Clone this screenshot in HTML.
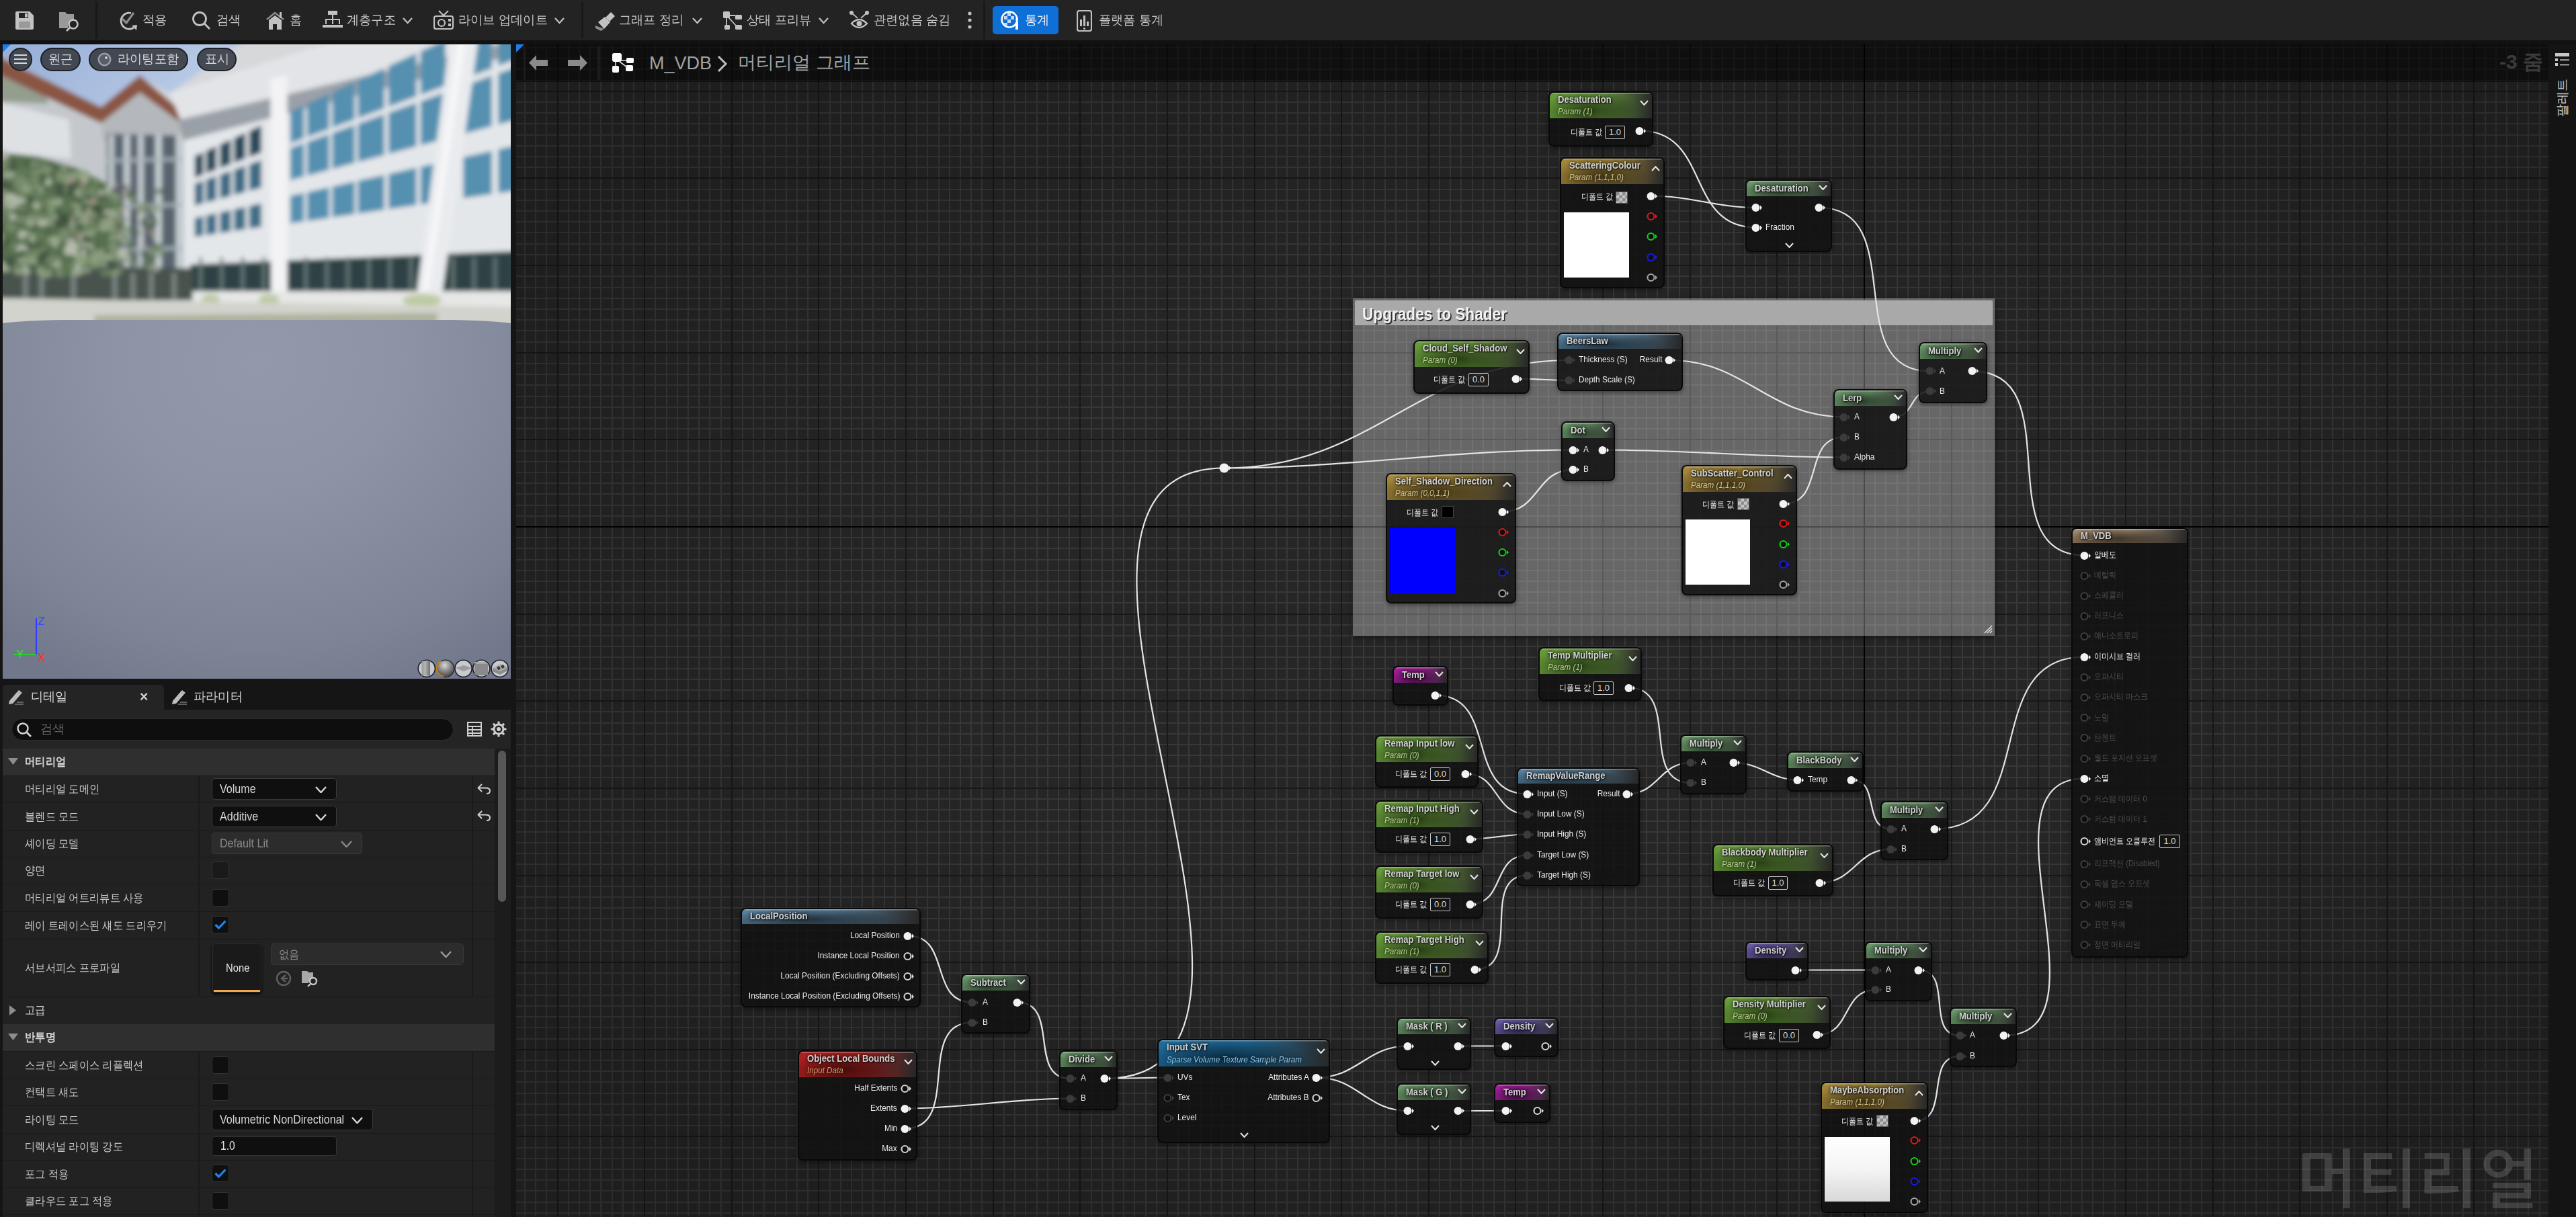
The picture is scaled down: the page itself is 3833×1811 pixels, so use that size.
<!DOCTYPE html>
<html><head><meta charset="utf-8"><style>*{margin:0;padding:0;box-sizing:border-box}
html,body{width:3833px;height:1811px;overflow:hidden;background:#151515;font-family:"Liberation Sans",sans-serif}
.abs{position:absolute}
.t{white-space:nowrap}
.nd{border:2px solid rgba(8,8,8,0.95);border-radius:8px;background:rgba(16,18,16,0.86);overflow:hidden;box-shadow:0 2px 6px rgba(0,0,0,0.45)}
.hd{width:100%;box-shadow:inset 0 1.5px 0 rgba(255,255,255,0.35)}
.vb{border:1px solid #c8c8c8;border-radius:2px;color:#dcdcdc;font-size:13px;line-height:18px;text-align:center;font-family:"Liberation Sans",sans-serif}
.chk{width:18px;height:18px;background-color:#8c8c8c;background-image:linear-gradient(45deg,#c8c8c8 25%,transparent 25%,transparent 75%,#c8c8c8 75%),linear-gradient(45deg,#c8c8c8 25%,transparent 25%,transparent 75%,#c8c8c8 75%);background-size:9px 9px;background-position:0 0,4.5px 4.5px;border:1px solid #555}
</style></head>
<body>
<div class="abs " style="left:0px;top:0px;width:3833px;height:60px;background:#232323"></div><div class="abs " style="left:0px;top:60px;width:3833px;height:6px;background:#111111"></div><svg class="abs" style="left:23px;top:17px" width="28" height="27" viewBox="0 0 28 27"><path d="M0 2Q0 0 2 0H21L27 6V25Q27 27 25 27H2Q0 27 0 25Z" fill="#c2c2c2"/><rect x="5" y="2" width="14" height="8" fill="#232323"/><rect x="14" y="3" width="4" height="6" fill="#c2c2c2"/><rect x="5" y="15" width="17" height="10" fill="#9a9a9a"/></svg><svg class="abs" style="left:88px;top:15px" width="32" height="32" viewBox="0 0 32 32"><path d="M0 3H9L12 6H22V16Q15 15 13 22V27H0Z" fill="#9a9a9a"/><circle cx="21" cy="21" r="6.5" fill="none" stroke="#c2c2c2" stroke-width="2.6"/><path d="M16.5 25.5L11 31" stroke="#c2c2c2" stroke-width="2.8"/></svg><div class="abs " style="left:142px;top:2px;width:3px;height:56px;background:#181818"></div><svg class="abs" style="left:175px;top:16px" width="30" height="30" viewBox="0 0 30 30"><path d="M20 3.5A12 12 0 1 0 24 25" fill="none" stroke="#c2c2c2" stroke-width="2.8"/><path d="M21 22L29 21L28 29Z" fill="#c2c2c2"/><path d="M7 12L13 18L24 3" fill="none" stroke="#8c8c8c" stroke-width="3.2"/></svg><div class="abs t " style="left:212px;top:18.6px;font-size:19px;line-height:22.8px;color:#c4c4c4;transform:scaleX(0.96);transform-origin:left center;">적용</div><svg class="abs" style="left:285px;top:16px" width="30" height="30" viewBox="0 0 30 30"><circle cx="12" cy="12" r="9.5" fill="none" stroke="#c2c2c2" stroke-width="2.8"/><path d="M19 19L27 27" stroke="#c2c2c2" stroke-width="3"/></svg><div class="abs t " style="left:322px;top:18.6px;font-size:19px;line-height:22.8px;color:#c4c4c4;transform:scaleX(0.96);transform-origin:left center;">검색</div><svg class="abs" style="left:396px;top:18px" width="28" height="27" viewBox="0 0 28 27"><path d="M1 11L13 1L26 11" fill="none" stroke="#8c8c8c" stroke-width="2.5"/><path d="M4 12L13 5L23 12V26H16V18H10V26H4Z" fill="#c2c2c2"/><rect x="20" y="0" width="3" height="9" fill="#c2c2c2"/></svg><div class="abs t " style="left:431px;top:18.6px;font-size:19px;line-height:22.8px;color:#c4c4c4;transform:scaleX(0.96);transform-origin:left center;">홈</div><svg class="abs" style="left:480px;top:16px" width="30" height="28" viewBox="0 0 30 28"><rect x="8" y="0" width="14" height="6" fill="#c2c2c2"/><rect x="14" y="6" width="2" height="8" fill="#c2c2c2"/><rect x="4" y="12" width="22" height="2" fill="#c2c2c2"/><rect x="4" y="12" width="2" height="8" fill="#c2c2c2"/><rect x="24" y="12" width="2" height="8" fill="#c2c2c2"/><rect x="14" y="12" width="2" height="8" fill="#c2c2c2"/><rect x="0" y="21" width="30" height="4" fill="#c2c2c2"/></svg><div class="abs t " style="left:516px;top:18.6px;font-size:19px;line-height:22.8px;color:#c4c4c4;transform:scaleX(0.96);transform-origin:left center;">계층구조</div><svg class="abs" style="left:599px;top:26.4px" width="15" height="9.2"><path d="M1 1L7.5 8.2L14 1" fill="none" stroke="#c4c4c4" stroke-width="2.2"/></svg><svg class="abs" style="left:645px;top:15px" width="31" height="30" viewBox="0 0 31 30"><rect x="1" y="9" width="28" height="19" rx="3" fill="none" stroke="#c2c2c2" stroke-width="2.2"/><path d="M8 1L15 8L22 1" fill="none" stroke="#c2c2c2" stroke-width="2"/><circle cx="12" cy="19" r="5" fill="none" stroke="#c2c2c2" stroke-width="2.2"/><rect x="22" y="13" width="4" height="4" fill="#c2c2c2"/><rect x="22" y="20" width="4" height="4" fill="#c2c2c2"/></svg><div class="abs t " style="left:682px;top:18.6px;font-size:19px;line-height:22.8px;color:#c4c4c4;transform:scaleX(0.96);transform-origin:left center;">라이브 업데이트</div><svg class="abs" style="left:825px;top:26.4px" width="15" height="9.2"><path d="M1 1L7.5 8.2L14 1" fill="none" stroke="#c4c4c4" stroke-width="2.2"/></svg><div class="abs " style="left:865px;top:2px;width:3px;height:56px;background:#181818"></div><svg class="abs" style="left:886px;top:16px" width="31" height="30" viewBox="0 0 31 30"><path d="M15 10L23 2L29 8L21 16Z" fill="#c2c2c2"/><path d="M4 17L14 9L22 17L13 27Z" fill="#c2c2c2"/><path d="M0 22L13 27L8 30L0 26Z" fill="#8c8c8c"/></svg><div class="abs t " style="left:921px;top:18.6px;font-size:19px;line-height:22.8px;color:#c4c4c4;transform:scaleX(0.96);transform-origin:left center;">그래프 정리</div><svg class="abs" style="left:1030px;top:26.4px" width="15" height="9.2"><path d="M1 1L7.5 8.2L14 1" fill="none" stroke="#c4c4c4" stroke-width="2.2"/></svg><svg class="abs" style="left:1076px;top:17px" width="28" height="27" viewBox="0 0 28 27"><rect x="0" y="0" width="10" height="10" rx="1.5" fill="#c2c2c2"/><rect x="18" y="5" width="10" height="7" rx="1.5" fill="#c2c2c2"/><rect x="2" y="20" width="8" height="7" rx="1.5" fill="#c2c2c2"/><rect x="18" y="20" width="10" height="7" rx="1.5" fill="#c2c2c2"/><path d="M5 10V20M10 6H18M8 9L19 21" stroke="#c2c2c2" stroke-width="1.8"/></svg><div class="abs t " style="left:1111px;top:18.6px;font-size:19px;line-height:22.8px;color:#c4c4c4;transform:scaleX(0.96);transform-origin:left center;">상태 프리뷰</div><svg class="abs" style="left:1218px;top:26.4px" width="15" height="9.2"><path d="M1 1L7.5 8.2L14 1" fill="none" stroke="#c4c4c4" stroke-width="2.2"/></svg><svg class="abs" style="left:1264px;top:15px" width="29" height="30" viewBox="0 0 29 30"><circle cx="3" cy="4" r="3" fill="#c2c2c2"/><circle cx="26" cy="4" r="3" fill="#c2c2c2"/><path d="M3 4L12 12M26 4L17 12" stroke="#c2c2c2" stroke-width="1.8"/><path d="M3 20Q14 8 26 20Q14 32 3 20Z" fill="none" stroke="#c2c2c2" stroke-width="2.4"/><circle cx="14.5" cy="20" r="4" fill="#c2c2c2"/></svg><div class="abs t " style="left:1300px;top:18.6px;font-size:19px;line-height:22.8px;color:#c4c4c4;transform:scaleX(0.96);transform-origin:left center;">관련없음 숨김</div><svg class="abs" style="left:1439px;top:16px" width="8" height="28" viewBox="0 0 8 28"><circle cx="4" cy="4" r="2.6" fill="#c2c2c2"/><circle cx="4" cy="14" r="2.6" fill="#c2c2c2"/><circle cx="4" cy="24" r="2.6" fill="#c2c2c2"/></svg><div class="abs " style="left:1463px;top:2px;width:3px;height:56px;background:#181818"></div><div class="abs " style="left:1477px;top:9px;width:98px;height:42px;background:#0e6fd6;border-radius:5px"></div><svg class="abs" style="left:1489px;top:16px" width="31" height="30" viewBox="0 0 31 30"><circle cx="13" cy="13" r="11.5" fill="none" stroke="#ffffff" stroke-width="2.5"/><path d="M5 8h5v5h-5zM10 13h5v5h-5zM15 8h5v5h-5zM10 3h5v5h-5zM5 18h5v4h-5z" fill="#dfe9f6" opacity="0.85"/><circle cx="24" cy="13" r="2" fill="#fff"/><rect x="22" y="17" width="4" height="11" fill="#fff"/></svg><div class="abs t " style="left:1525px;top:18.6px;font-size:19px;line-height:22.8px;color:#f0f0f0;transform:scaleX(0.96);transform-origin:left center;">통계</div><svg class="abs" style="left:1602px;top:15px" width="23" height="32" viewBox="0 0 23 32"><rect x="1" y="1" width="21" height="30" rx="3" fill="none" stroke="#c2c2c2" stroke-width="2.2"/><rect x="5" y="14" width="3" height="10" fill="#c2c2c2"/><rect x="10" y="8" width="3" height="16" fill="#c2c2c2"/><rect x="15" y="17" width="3" height="7" fill="#c2c2c2"/><circle cx="11.5" cy="27.5" r="1.6" fill="#c2c2c2"/></svg><div class="abs t " style="left:1635px;top:18.6px;font-size:19px;line-height:22.8px;color:#c4c4c4;transform:scaleX(0.96);transform-origin:left center;">플랫폼 통계</div>
<div class="abs " style="left:0px;top:66px;width:768px;height:944px;background:#151515"></div><div class="abs" style="left:4px;top:66px;width:756px;height:944px;overflow:hidden;background:#888e9c"><svg class="abs" style="left:0;top:0" width="756" height="412" viewBox="0 0 756 412"><defs><filter id="bl" x="-5%" y="-5%" width="110%" height="110%"><feGaussianBlur stdDeviation="3.6"/></filter><linearGradient id="sky" x1="0" y1="0" x2="1" y2="0.3"><stop offset="0" stop-color="#93acd8"/><stop offset="1" stop-color="#bccde6"/></linearGradient></defs><g filter="url(#bl)"><rect x="-10" y="-10" width="776" height="432" fill="#d6d8da"/><polygon points="-10.2,-10.2 367.3,-10.2 248.3,73.1 204.1,47.6 146.3,93.5 -10.2,13.6" fill="url(#sky)" /><polygon points="-10.2,40.8 146.3,112.2 204.1,68.0 265.3,112.2 272.1,381.0 -10.2,381.0" fill="#c4c8cc" /><polygon points="-10.2,85.0 98.6,112.2 102.0,170.1 -10.2,159.9" fill="#dee1e4" /><polygon points="-10.2,42.5 61.2,66.3 68.0,88.4 -10.2,85.0" fill="#8c9682" opacity="0.85"/><polygon points="146.3,112.2 204.1,71.4 265.3,112.2 265.3,142.9 149.7,142.9" fill="#b4b8bc" /><polygon points="-10.2,15.3 146.3,93.5 204.1,45.9 265.3,98.6 265.3,117.3 204.1,71.4 146.3,117.3 -10.2,42.5" fill="#8a5443" /><polygon points="154.8,132.7 278.9,136.1 278.9,377.6 154.8,377.6" fill="#58636e" /><polygon points="158.2,134.4 165.6,134.4 165.6,377.6 158.2,377.6" fill="#c6ced2" /><polygon points="180.3,134.4 189.1,134.4 189.1,377.6 180.3,377.6" fill="#c6ced2" /><polygon points="201.4,134.4 209.5,134.4 209.5,377.6 201.4,377.6" fill="#c6ced2" /><polygon points="227.2,134.4 236.7,134.4 236.7,377.6 227.2,377.6" fill="#c6ced2" /><polygon points="257.8,134.4 268.0,134.4 268.0,377.6 257.8,377.6" fill="#c6ced2" /><polygon points="154.8,170.1 278.9,167.3 278.9,173.5 154.8,176.2" fill="#aab6bc" opacity="0.8"/><polygon points="154.8,238.1 278.9,235.4 278.9,241.5 154.8,244.2" fill="#aab6bc" opacity="0.8"/><polygon points="154.8,302.7 278.9,300.0 278.9,306.1 154.8,308.8" fill="#aab6bc" opacity="0.8"/><polygon points="248.3,72.1 510.2,-10.2 782.3,-10.2 782.3,-6.8 265.3,113.9" fill="#e2e4e7" /><polygon points="261.9,112.2 782.3,-10.2 782.3,13.6 268.7,144.6" fill="#9aa0a8" /><polygon points="268.7,142.9 782.3,10.2 782.3,370.7 268.7,370.7" fill="#e4e7ea" /><polygon points="427.9,100.1 448.3,90.7 448.3,139.8 427.9,147.4" fill="#5490b0" /><polygon points="427.9,154.4 448.3,147.0 448.3,196.8 427.9,202.3" fill="#5490b0" /><polygon points="427.9,225.6 448.3,221.0 448.3,263.6 427.9,266.6" fill="#5490b0" /><polygon points="453.1,88.5 485.7,73.4 485.7,125.9 453.1,138.1" fill="#5490b0" /><polygon points="453.1,145.3 485.7,133.6 485.7,186.8 453.1,195.5" fill="#5490b0" /><polygon points="453.1,220.0 485.7,212.7 485.7,258.2 453.1,262.9" fill="#5490b0" /><polygon points="490.5,71.2 523.8,55.8 523.8,111.7 490.5,124.1" fill="#5490b0" /><polygon points="490.5,131.9 523.8,119.9 523.8,176.6 490.5,185.5" fill="#5490b0" /><polygon points="490.5,211.6 523.8,204.1 523.8,252.6 490.5,257.5" fill="#5490b0" /><polygon points="528.6,53.6 568.0,35.4 568.0,95.2 528.6,109.9" fill="#5490b0" /><polygon points="528.6,118.2 568.0,104.0 568.0,164.7 528.6,175.3" fill="#5490b0" /><polygon points="528.6,203.1 568.0,194.2 568.0,246.1 528.6,251.9" fill="#5490b0" /><polygon points="574.1,32.5 615.6,13.3 615.6,77.5 574.1,93.0" fill="#5490b0" /><polygon points="574.1,101.8 615.6,86.9 615.6,151.9 574.1,163.1" fill="#5490b0" /><polygon points="574.1,192.9 615.6,183.6 615.6,239.2 574.1,245.2" fill="#5490b0" /><polygon points="621.8,10.5 658.5,-6.5 658.5,61.5 621.8,75.2" fill="#5490b0" /><polygon points="621.8,84.7 658.5,71.5 658.5,140.4 621.8,150.3" fill="#5490b0" /><polygon points="621.8,182.2 658.5,174.0 658.5,232.9 621.8,238.3" fill="#5490b0" /><polygon points="685.4,-18.9 727.9,-38.5 727.9,35.7 685.4,51.5" fill="#5490b0" /><polygon points="685.4,61.9 727.9,46.6 727.9,121.8 685.4,133.2" fill="#5490b0" /><polygon points="685.4,168.0 727.9,158.4 727.9,222.8 685.4,229.0" fill="#5490b0" /><polygon points="737.4,-43.0 782.3,-63.7 782.3,15.4 737.4,32.1" fill="#5490b0" /><polygon points="737.4,43.2 782.3,27.0 782.3,107.2 737.4,119.3" fill="#5490b0" /><polygon points="737.4,156.3 782.3,146.2 782.3,214.8 737.4,221.4" fill="#5490b0" /><polygon points="285.7,166.3 298.6,160.4 298.6,193.7 285.7,198.5" fill="#2b4a5c" /><polygon points="285.7,207.3 298.6,202.7 298.6,236.5 285.7,240.0" fill="#3d6a84" /><polygon points="285.7,258.4 298.6,255.5 298.6,284.5 285.7,286.5" fill="#3f6e88" /><polygon points="302.7,158.5 318.0,151.4 318.0,186.4 302.7,192.1" fill="#2b4a5c" /><polygon points="302.7,201.3 318.0,195.8 318.0,231.3 302.7,235.4" fill="#3d6a84" /><polygon points="302.7,254.6 318.0,251.2 318.0,281.7 302.7,283.9" fill="#3f6e88" /><polygon points="323.1,149.1 339.5,141.5 339.5,178.3 323.1,184.4" fill="#2b4a5c" /><polygon points="323.1,194.0 339.5,188.2 339.5,225.5 323.1,229.9" fill="#3d6a84" /><polygon points="323.1,250.1 339.5,246.5 339.5,278.5 323.1,280.9" fill="#3f6e88" /><polygon points="344.2,139.3 361.2,131.5 361.2,170.1 344.2,176.5" fill="#2b4a5c" /><polygon points="344.2,186.5 361.2,180.5 361.2,219.6 344.2,224.2" fill="#3d6a84" /><polygon points="344.2,245.4 361.2,241.7 361.2,275.2 344.2,277.8" fill="#3f6e88" /><polygon points="366.7,129.0 385.0,120.5 385.0,161.1 366.7,168.0" fill="#2b4a5c" /><polygon points="366.7,178.6 385.0,172.1 385.0,213.2 366.7,218.2" fill="#3d6a84" /><polygon points="366.7,240.4 385.0,236.4 385.0,271.7 366.7,274.4" fill="#3f6e88" /><polygon points="278.9,327.7 782.3,306.6 782.3,369.0 278.9,369.0" fill="#2e4244" /><polygon points="292.5,316.3 296.6,316.3 296.6,369.0 292.5,369.0" fill="#6f8080" /><polygon points="323.8,316.3 327.9,316.3 327.9,369.0 323.8,369.0" fill="#6f8080" /><polygon points="355.1,316.3 359.2,316.3 359.2,369.0 355.1,369.0" fill="#6f8080" /><polygon points="386.4,316.3 390.5,316.3 390.5,369.0 386.4,369.0" fill="#6f8080" /><polygon points="417.7,316.3 421.8,316.3 421.8,369.0 417.7,369.0" fill="#6f8080" /><polygon points="449.0,316.3 453.1,316.3 453.1,369.0 449.0,369.0" fill="#6f8080" /><polygon points="480.3,316.3 484.4,316.3 484.4,369.0 480.3,369.0" fill="#6f8080" /><polygon points="511.6,316.3 515.6,316.3 515.6,369.0 511.6,369.0" fill="#6f8080" /><polygon points="542.9,316.3 546.9,316.3 546.9,369.0 542.9,369.0" fill="#6f8080" /><polygon points="574.1,316.3 578.2,316.3 578.2,369.0 574.1,369.0" fill="#6f8080" /><polygon points="605.4,316.3 609.5,316.3 609.5,369.0 605.4,369.0" fill="#6f8080" /><polygon points="636.7,316.3 640.8,316.3 640.8,369.0 636.7,369.0" fill="#6f8080" /><polygon points="668.0,316.3 672.1,316.3 672.1,369.0 668.0,369.0" fill="#6f8080" /><polygon points="699.3,316.3 703.4,316.3 703.4,369.0 699.3,369.0" fill="#6f8080" /><polygon points="730.6,316.3 734.7,316.3 734.7,369.0 730.6,369.0" fill="#6f8080" /><polygon points="761.9,316.3 766.0,316.3 766.0,369.0 761.9,369.0" fill="#6f8080" /><polygon points="398.6,51.0 423.1,46.9 423.8,391.2 399.3,391.2" fill="#f3f3f5" /><polygon points="666.0,-10.2 708.2,-10.2 653.1,377.6 615.0,377.6" fill="#e9ebee" /><polygon points="676.9,-10.2 690.5,-10.2 632.7,377.6 622.4,377.6" fill="#f6f6f8" /><polygon points="272.1,367.3 782.3,367.3 782.3,394.6 272.1,394.6" fill="#e6e7e6" /><ellipse cx="309.5" cy="381.0" rx="13.6" ry="9.5" fill="#b9c89c" opacity="0.9"/><ellipse cx="396.3" cy="381.0" rx="15.3" ry="9.5" fill="#b9c89c" opacity="0.9"/><ellipse cx="624.1" cy="381.0" rx="28.9" ry="9.5" fill="#b9c89c" opacity="0.9"/><polygon points="-10.2,326.5 282.3,333.3 282.3,381.0 -10.2,381.0" fill="#48524e" /><polygon points="30.6,340.1 37.4,340.1 37.4,381.0 30.6,381.0" fill="#a2aca8" opacity="0.6"/><polygon points="54.4,340.1 61.2,340.1 61.2,381.0 54.4,381.0" fill="#a2aca8" opacity="0.6"/><polygon points="102.0,340.1 108.8,340.1 108.8,381.0 102.0,381.0" fill="#a2aca8" opacity="0.6"/><polygon points="163.3,340.1 170.1,340.1 170.1,381.0 163.3,381.0" fill="#a2aca8" opacity="0.6"/><polygon points="190.5,340.1 197.3,340.1 197.3,381.0 190.5,381.0" fill="#a2aca8" opacity="0.6"/><polygon points="217.7,340.1 224.5,340.1 224.5,381.0 217.7,381.0" fill="#a2aca8" opacity="0.6"/><polygon points="251.7,340.1 258.5,340.1 258.5,381.0 251.7,381.0" fill="#a2aca8" opacity="0.6"/><polygon points="-10.2,159.9 51.0,166.7 108.8,183.7 149.7,204.1 170.1,231.3 176.9,272.1 170.1,326.5 -10.2,340.1" fill="#56704e" /><ellipse cx="76.3" cy="260.8" rx="7.8" ry="8.2" fill="#b8beb2" opacity="0.85"/><ellipse cx="28.1" cy="304.8" rx="9.0" ry="7.9" fill="#b8beb2" opacity="0.85"/><ellipse cx="10.5" cy="214.6" rx="8.4" ry="8.3" fill="#5c7454" opacity="0.85"/><ellipse cx="109.7" cy="267.2" rx="11.3" ry="7.2" fill="#a0ae94" opacity="0.85"/><ellipse cx="106.3" cy="188.3" rx="10.4" ry="4.4" fill="#4a5e44" opacity="0.85"/><ellipse cx="-0.3" cy="318.4" rx="10.1" ry="5.6" fill="#4a5e44" opacity="0.85"/><ellipse cx="101.7" cy="195.1" rx="9.1" ry="6.5" fill="#8fa282" opacity="0.85"/><ellipse cx="114.9" cy="242.3" rx="7.5" ry="6.7" fill="#3e5040" opacity="0.85"/><ellipse cx="39.8" cy="296.5" rx="5.0" ry="6.8" fill="#3e5040" opacity="0.85"/><ellipse cx="13.0" cy="179.3" rx="7.4" ry="8.6" fill="#3e5040" opacity="0.85"/><ellipse cx="31.7" cy="324.0" rx="7.3" ry="7.5" fill="#b8beb2" opacity="0.85"/><ellipse cx="70.3" cy="261.9" rx="10.1" ry="5.4" fill="#8fa282" opacity="0.85"/><ellipse cx="9.2" cy="219.8" rx="9.9" ry="4.6" fill="#a0ae94" opacity="0.85"/><ellipse cx="38.5" cy="178.1" rx="7.9" ry="6.4" fill="#4a5e44" opacity="0.85"/><ellipse cx="118.5" cy="193.8" rx="11.5" ry="7.7" fill="#8fa282" opacity="0.85"/><ellipse cx="70.2" cy="229.0" rx="7.6" ry="5.1" fill="#a0ae94" opacity="0.85"/><ellipse cx="42.8" cy="334.9" rx="11.6" ry="4.2" fill="#3e5040" opacity="0.85"/><ellipse cx="27.6" cy="339.4" rx="5.0" ry="4.8" fill="#5c7454" opacity="0.85"/><ellipse cx="105.3" cy="309.5" rx="5.3" ry="4.5" fill="#a0ae94" opacity="0.85"/><ellipse cx="100.2" cy="203.7" rx="7.3" ry="6.2" fill="#6a7e60" opacity="0.85"/><ellipse cx="169.4" cy="247.1" rx="10.7" ry="5.0" fill="#7a8e6e" opacity="0.85"/><ellipse cx="21.5" cy="323.6" rx="9.7" ry="4.8" fill="#8fa282" opacity="0.85"/><ellipse cx="108.7" cy="259.7" rx="10.8" ry="7.0" fill="#a0ae94" opacity="0.85"/><ellipse cx="70.6" cy="178.6" rx="8.2" ry="5.3" fill="#4a5e44" opacity="0.85"/><ellipse cx="129.1" cy="230.5" rx="10.4" ry="6.9" fill="#a0ae94" opacity="0.85"/><ellipse cx="47.1" cy="191.5" rx="5.6" ry="6.4" fill="#5c7454" opacity="0.85"/><ellipse cx="113.2" cy="270.9" rx="6.7" ry="8.5" fill="#5c7454" opacity="0.85"/><ellipse cx="42.6" cy="240.2" rx="5.1" ry="5.4" fill="#4a5e44" opacity="0.85"/><ellipse cx="90.7" cy="335.3" rx="7.2" ry="8.3" fill="#5c7454" opacity="0.85"/><ellipse cx="173.3" cy="278.3" rx="8.8" ry="8.5" fill="#7a8e6e" opacity="0.85"/><ellipse cx="80.4" cy="224.3" rx="11.3" ry="4.2" fill="#3e5040" opacity="0.85"/><ellipse cx="110.0" cy="246.8" rx="6.9" ry="8.8" fill="#3e5040" opacity="0.85"/><ellipse cx="7.0" cy="258.3" rx="10.9" ry="7.6" fill="#4a5e44" opacity="0.85"/><ellipse cx="122.4" cy="302.9" rx="7.2" ry="7.3" fill="#6a7e60" opacity="0.85"/><ellipse cx="158.7" cy="316.9" rx="11.2" ry="4.2" fill="#a0ae94" opacity="0.85"/><ellipse cx="114.8" cy="228.2" rx="8.9" ry="4.5" fill="#4a5e44" opacity="0.85"/><ellipse cx="110.6" cy="338.9" rx="9.7" ry="5.9" fill="#a0ae94" opacity="0.85"/><ellipse cx="128.2" cy="264.6" rx="7.9" ry="6.7" fill="#b8beb2" opacity="0.85"/><ellipse cx="88.5" cy="252.6" rx="8.9" ry="6.4" fill="#3e5040" opacity="0.85"/><ellipse cx="35.5" cy="285.8" rx="10.1" ry="7.2" fill="#b8beb2" opacity="0.85"/><ellipse cx="82.5" cy="321.5" rx="6.8" ry="7.3" fill="#6a7e60" opacity="0.85"/><ellipse cx="30.4" cy="190.4" rx="9.3" ry="6.2" fill="#6a7e60" opacity="0.85"/><ellipse cx="157.0" cy="218.8" rx="6.1" ry="6.1" fill="#3e5040" opacity="0.85"/><ellipse cx="141.2" cy="324.7" rx="7.4" ry="6.9" fill="#8fa282" opacity="0.85"/><ellipse cx="51.3" cy="184.4" rx="7.1" ry="8.3" fill="#b8beb2" opacity="0.85"/><ellipse cx="0.6" cy="171.4" rx="10.4" ry="4.6" fill="#3e5040" opacity="0.85"/><ellipse cx="79.8" cy="326.7" rx="7.4" ry="6.6" fill="#a0ae94" opacity="0.85"/><ellipse cx="116.7" cy="289.0" rx="6.9" ry="8.0" fill="#b8beb2" opacity="0.85"/><ellipse cx="44.3" cy="269.4" rx="8.6" ry="5.6" fill="#3e5040" opacity="0.85"/><ellipse cx="18.2" cy="241.9" rx="10.0" ry="5.4" fill="#4a5e44" opacity="0.85"/><ellipse cx="136.3" cy="303.5" rx="7.8" ry="7.1" fill="#5c7454" opacity="0.85"/><ellipse cx="113.5" cy="305.4" rx="9.4" ry="5.0" fill="#5c7454" opacity="0.85"/><ellipse cx="80.5" cy="192.1" rx="9.9" ry="6.6" fill="#4a5e44" opacity="0.85"/><ellipse cx="-0.2" cy="200.7" rx="8.4" ry="8.6" fill="#6a7e60" opacity="0.85"/><ellipse cx="85.1" cy="339.6" rx="7.4" ry="7.9" fill="#7a8e6e" opacity="0.85"/><ellipse cx="164.5" cy="290.1" rx="7.8" ry="5.0" fill="#7a8e6e" opacity="0.85"/><ellipse cx="94.2" cy="277.5" rx="7.9" ry="7.2" fill="#6a7e60" opacity="0.85"/><ellipse cx="30.8" cy="290.0" rx="6.2" ry="8.4" fill="#5c7454" opacity="0.85"/><ellipse cx="173.3" cy="336.1" rx="6.5" ry="7.5" fill="#6a7e60" opacity="0.85"/><ellipse cx="-3.9" cy="250.9" rx="7.8" ry="6.7" fill="#4a5e44" opacity="0.85"/><ellipse cx="134.3" cy="247.7" rx="6.2" ry="8.2" fill="#4a5e44" opacity="0.85"/><ellipse cx="91.1" cy="283.6" rx="8.0" ry="8.8" fill="#7a8e6e" opacity="0.85"/><ellipse cx="158.6" cy="253.3" rx="11.2" ry="6.4" fill="#b8beb2" opacity="0.85"/><ellipse cx="33.9" cy="254.8" rx="10.4" ry="6.8" fill="#3e5040" opacity="0.85"/><ellipse cx="23.4" cy="252.6" rx="6.9" ry="5.9" fill="#3e5040" opacity="0.85"/><ellipse cx="148.4" cy="322.2" rx="6.8" ry="4.8" fill="#8fa282" opacity="0.85"/><ellipse cx="93.2" cy="209.1" rx="6.1" ry="6.6" fill="#b8beb2" opacity="0.85"/><ellipse cx="85.6" cy="269.0" rx="8.4" ry="4.3" fill="#4a5e44" opacity="0.85"/><ellipse cx="161.7" cy="257.9" rx="8.1" ry="7.4" fill="#5c7454" opacity="0.85"/><ellipse cx="5.3" cy="257.0" rx="11.0" ry="7.9" fill="#a0ae94" opacity="0.85"/><ellipse cx="67.4" cy="204.3" rx="5.6" ry="6.1" fill="#b8beb2" opacity="0.85"/><ellipse cx="143.0" cy="322.2" rx="8.3" ry="4.6" fill="#b8beb2" opacity="0.85"/><ellipse cx="41.0" cy="286.4" rx="5.0" ry="4.8" fill="#4a5e44" opacity="0.85"/><ellipse cx="-4.6" cy="211.1" rx="6.4" ry="6.5" fill="#6a7e60" opacity="0.85"/><ellipse cx="85.0" cy="264.8" rx="9.6" ry="7.4" fill="#3e5040" opacity="0.85"/><ellipse cx="109.5" cy="308.6" rx="8.4" ry="8.2" fill="#7a8e6e" opacity="0.85"/><ellipse cx="91.3" cy="199.2" rx="10.6" ry="7.0" fill="#8fa282" opacity="0.85"/><ellipse cx="129.3" cy="306.0" rx="6.9" ry="5.6" fill="#7a8e6e" opacity="0.85"/><ellipse cx="176.6" cy="319.9" rx="10.8" ry="4.7" fill="#7a8e6e" opacity="0.85"/><ellipse cx="9.4" cy="229.8" rx="10.4" ry="6.1" fill="#a0ae94" opacity="0.85"/><ellipse cx="67.2" cy="283.4" rx="5.4" ry="6.8" fill="#4a5e44" opacity="0.85"/><ellipse cx="58.9" cy="307.9" rx="5.5" ry="6.5" fill="#6a7e60" opacity="0.85"/><ellipse cx="132.5" cy="250.5" rx="10.2" ry="6.4" fill="#8fa282" opacity="0.85"/><ellipse cx="-2.3" cy="297.2" rx="5.8" ry="5.0" fill="#b8beb2" opacity="0.85"/><ellipse cx="30.7" cy="311.3" rx="11.1" ry="4.5" fill="#3e5040" opacity="0.85"/><ellipse cx="4.6" cy="331.4" rx="5.3" ry="4.5" fill="#b8beb2" opacity="0.85"/><ellipse cx="65.0" cy="236.7" rx="7.7" ry="6.9" fill="#6a7e60" opacity="0.85"/><ellipse cx="-4.4" cy="286.2" rx="6.0" ry="6.2" fill="#8fa282" opacity="0.85"/><ellipse cx="129.0" cy="232.9" rx="8.9" ry="4.5" fill="#8fa282" opacity="0.85"/><ellipse cx="138.7" cy="218.2" rx="10.2" ry="7.4" fill="#5c7454" opacity="0.85"/><ellipse cx="151.3" cy="273.3" rx="8.6" ry="5.0" fill="#a0ae94" opacity="0.85"/><ellipse cx="100.6" cy="221.3" rx="6.7" ry="4.6" fill="#3e5040" opacity="0.85"/><ellipse cx="53.8" cy="257.0" rx="10.0" ry="7.7" fill="#6a7e60" opacity="0.85"/><ellipse cx="67.7" cy="290.1" rx="10.2" ry="5.5" fill="#5c7454" opacity="0.85"/><ellipse cx="11.7" cy="320.0" rx="6.3" ry="8.6" fill="#4a5e44" opacity="0.85"/><ellipse cx="115.5" cy="220.8" rx="8.6" ry="6.6" fill="#a0ae94" opacity="0.85"/><ellipse cx="64.8" cy="340.1" rx="9.5" ry="7.7" fill="#8fa282" opacity="0.85"/><ellipse cx="106.2" cy="293.0" rx="7.8" ry="6.5" fill="#3e5040" opacity="0.85"/><ellipse cx="133.0" cy="276.7" rx="5.4" ry="5.3" fill="#4a5e44" opacity="0.85"/><ellipse cx="159.5" cy="259.0" rx="11.3" ry="6.8" fill="#a0ae94" opacity="0.85"/><ellipse cx="176.0" cy="274.9" rx="8.5" ry="7.3" fill="#5c7454" opacity="0.85"/><ellipse cx="168.7" cy="229.5" rx="7.4" ry="8.7" fill="#7a8e6e" opacity="0.85"/><ellipse cx="150.4" cy="257.6" rx="7.7" ry="6.4" fill="#4a5e44" opacity="0.85"/><ellipse cx="45.4" cy="231.7" rx="7.2" ry="5.4" fill="#3e5040" opacity="0.85"/><ellipse cx="113.5" cy="260.9" rx="9.3" ry="7.6" fill="#3e5040" opacity="0.85"/><ellipse cx="-1.9" cy="299.1" rx="9.1" ry="6.0" fill="#4a5e44" opacity="0.85"/><ellipse cx="51.1" cy="231.6" rx="5.3" ry="8.4" fill="#6a7e60" opacity="0.85"/><ellipse cx="72.1" cy="246.0" rx="5.1" ry="4.6" fill="#8fa282" opacity="0.85"/><ellipse cx="142.0" cy="323.8" rx="11.4" ry="8.0" fill="#7a8e6e" opacity="0.85"/><ellipse cx="107.9" cy="242.0" rx="10.6" ry="5.8" fill="#8fa282" opacity="0.85"/><ellipse cx="21.6" cy="225.4" rx="9.3" ry="6.3" fill="#7a8e6e" opacity="0.85"/><ellipse cx="41.3" cy="264.8" rx="7.2" ry="7.6" fill="#a0ae94" opacity="0.85"/><ellipse cx="46.5" cy="183.1" rx="5.5" ry="8.3" fill="#b8beb2" opacity="0.85"/><ellipse cx="137.3" cy="272.5" rx="6.6" ry="7.0" fill="#6a7e60" opacity="0.85"/><ellipse cx="126.4" cy="285.9" rx="9.1" ry="7.7" fill="#8fa282" opacity="0.85"/><ellipse cx="28.1" cy="204.7" rx="10.7" ry="4.3" fill="#8fa282" opacity="0.85"/><ellipse cx="4.4" cy="208.7" rx="4.9" ry="4.3" fill="#a0ae94" opacity="0.85"/><ellipse cx="34.1" cy="210.0" rx="11.0" ry="4.8" fill="#5c7454" opacity="0.85"/><ellipse cx="36.3" cy="336.8" rx="8.0" ry="5.1" fill="#b8beb2" opacity="0.85"/><ellipse cx="56.3" cy="294.1" rx="10.2" ry="6.2" fill="#5c7454" opacity="0.85"/><ellipse cx="144.2" cy="310.9" rx="7.8" ry="7.6" fill="#8fa282" opacity="0.85"/><ellipse cx="64.9" cy="187.0" rx="9.2" ry="8.8" fill="#7a8e6e" opacity="0.85"/><ellipse cx="53.0" cy="258.8" rx="7.7" ry="5.8" fill="#7a8e6e" opacity="0.85"/><ellipse cx="11.0" cy="317.6" rx="8.5" ry="6.1" fill="#5c7454" opacity="0.85"/><ellipse cx="97.5" cy="306.8" rx="6.8" ry="7.8" fill="#b8beb2" opacity="0.85"/><ellipse cx="7.2" cy="198.3" rx="9.5" ry="6.4" fill="#5c7454" opacity="0.85"/><ellipse cx="133.6" cy="219.0" rx="6.3" ry="7.2" fill="#7a8e6e" opacity="0.85"/><ellipse cx="53.3" cy="323.2" rx="9.6" ry="6.8" fill="#6a7e60" opacity="0.85"/><ellipse cx="161.9" cy="329.3" rx="7.7" ry="7.9" fill="#3e5040" opacity="0.85"/><ellipse cx="49.2" cy="217.1" rx="11.3" ry="7.6" fill="#a0ae94" opacity="0.85"/><ellipse cx="117.5" cy="265.3" rx="9.8" ry="5.8" fill="#8fa282" opacity="0.85"/><ellipse cx="64.9" cy="187.8" rx="6.0" ry="7.7" fill="#7a8e6e" opacity="0.85"/><ellipse cx="155.0" cy="210.6" rx="6.3" ry="4.4" fill="#4a5e44" opacity="0.85"/><ellipse cx="22.3" cy="213.2" rx="9.2" ry="7.9" fill="#4a5e44" opacity="0.85"/><ellipse cx="5.0" cy="258.4" rx="7.0" ry="5.4" fill="#5c7454" opacity="0.85"/><ellipse cx="12.6" cy="216.4" rx="9.1" ry="4.8" fill="#4a5e44" opacity="0.85"/><ellipse cx="130.2" cy="276.9" rx="9.6" ry="6.4" fill="#8fa282" opacity="0.85"/><ellipse cx="159.9" cy="220.8" rx="7.4" ry="5.7" fill="#b8beb2" opacity="0.85"/><ellipse cx="171.0" cy="281.1" rx="8.1" ry="7.9" fill="#b8beb2" opacity="0.85"/><ellipse cx="6.5" cy="271.3" rx="7.6" ry="8.0" fill="#4a5e44" opacity="0.85"/><ellipse cx="115.7" cy="313.7" rx="10.4" ry="8.3" fill="#a0ae94" opacity="0.85"/><ellipse cx="169.1" cy="275.3" rx="9.6" ry="7.9" fill="#6a7e60" opacity="0.85"/><ellipse cx="70.6" cy="235.7" rx="6.4" ry="4.9" fill="#7a8e6e" opacity="0.85"/><ellipse cx="109.9" cy="283.2" rx="6.2" ry="6.1" fill="#6a7e60" opacity="0.85"/><ellipse cx="46.8" cy="334.7" rx="8.0" ry="7.6" fill="#4a5e44" opacity="0.85"/><ellipse cx="48.9" cy="187.9" rx="11.0" ry="7.7" fill="#7a8e6e" opacity="0.85"/><ellipse cx="-3.6" cy="246.6" rx="6.9" ry="5.0" fill="#4a5e44" opacity="0.85"/><ellipse cx="59.2" cy="265.9" rx="8.8" ry="5.1" fill="#b8beb2" opacity="0.85"/><ellipse cx="27.2" cy="210.5" rx="11.0" ry="8.5" fill="#7a8e6e" opacity="0.85"/><ellipse cx="108.3" cy="329.7" rx="10.6" ry="6.4" fill="#b8beb2" opacity="0.85"/><ellipse cx="67.1" cy="332.1" rx="8.0" ry="5.1" fill="#5c7454" opacity="0.85"/><ellipse cx="2.3" cy="330.7" rx="11.4" ry="7.9" fill="#a0ae94" opacity="0.85"/><ellipse cx="135.4" cy="301.9" rx="9.2" ry="5.2" fill="#4a5e44" opacity="0.85"/><ellipse cx="-4.8" cy="245.1" rx="7.8" ry="5.3" fill="#6a7e60" opacity="0.85"/><ellipse cx="70.6" cy="317.6" rx="5.8" ry="5.6" fill="#a0ae94" opacity="0.85"/><ellipse cx="40.8" cy="316.6" rx="9.1" ry="8.8" fill="#7a8e6e" opacity="0.85"/><ellipse cx="42.1" cy="256.2" rx="8.7" ry="4.9" fill="#7a8e6e" opacity="0.85"/><ellipse cx="30.7" cy="325.0" rx="10.4" ry="4.5" fill="#7a8e6e" opacity="0.85"/><ellipse cx="42.8" cy="289.0" rx="10.8" ry="7.4" fill="#5c7454" opacity="0.85"/><ellipse cx="8.4" cy="294.8" rx="4.9" ry="5.0" fill="#3e5040" opacity="0.85"/><ellipse cx="28.7" cy="282.9" rx="6.2" ry="6.7" fill="#b8beb2" opacity="0.85"/><ellipse cx="89.7" cy="188.3" rx="6.9" ry="6.0" fill="#3e5040" opacity="0.85"/><ellipse cx="95.4" cy="339.6" rx="7.2" ry="7.4" fill="#5c7454" opacity="0.85"/><ellipse cx="12.6" cy="230.9" rx="9.8" ry="7.8" fill="#b8beb2" opacity="0.85"/><ellipse cx="15.6" cy="240.1" rx="9.6" ry="6.3" fill="#a0ae94" opacity="0.85"/><ellipse cx="47.1" cy="180.3" rx="10.6" ry="8.1" fill="#4a5e44" opacity="0.85"/><ellipse cx="125.3" cy="322.4" rx="6.7" ry="5.9" fill="#7a8e6e" opacity="0.85"/><ellipse cx="92.3" cy="213.6" rx="9.9" ry="6.7" fill="#6a7e60" opacity="0.85"/><ellipse cx="9.2" cy="193.9" rx="9.7" ry="5.7" fill="#a0ae94" opacity="0.85"/><ellipse cx="166.8" cy="261.3" rx="7.8" ry="5.9" fill="#6a7e60" opacity="0.85"/><ellipse cx="11.9" cy="271.9" rx="9.4" ry="7.5" fill="#7a8e6e" opacity="0.85"/><ellipse cx="26.2" cy="232.4" rx="8.8" ry="4.5" fill="#b8beb2" opacity="0.85"/><ellipse cx="34.8" cy="188.2" rx="7.7" ry="7.8" fill="#5c7454" opacity="0.85"/><ellipse cx="56.0" cy="308.3" rx="9.2" ry="7.7" fill="#7a8e6e" opacity="0.85"/><ellipse cx="144.0" cy="229.4" rx="11.0" ry="7.0" fill="#6a7e60" opacity="0.85"/><ellipse cx="126.7" cy="270.4" rx="11.4" ry="7.8" fill="#6a7e60" opacity="0.85"/><ellipse cx="114.5" cy="269.6" rx="6.5" ry="5.0" fill="#4a5e44" opacity="0.85"/><ellipse cx="49.5" cy="239.4" rx="6.2" ry="5.7" fill="#a0ae94" opacity="0.85"/><ellipse cx="47.1" cy="178.4" rx="6.5" ry="6.6" fill="#7a8e6e" opacity="0.85"/><ellipse cx="48.0" cy="202.0" rx="8.7" ry="5.0" fill="#7a8e6e" opacity="0.85"/><ellipse cx="164.7" cy="339.8" rx="8.6" ry="4.2" fill="#8fa282" opacity="0.85"/><ellipse cx="114.3" cy="299.9" rx="6.4" ry="6.8" fill="#7a8e6e" opacity="0.85"/><ellipse cx="121.2" cy="219.2" rx="6.6" ry="8.3" fill="#6a7e60" opacity="0.85"/><ellipse cx="76.3" cy="291.4" rx="10.9" ry="6.7" fill="#8fa282" opacity="0.85"/><ellipse cx="96.2" cy="260.9" rx="5.9" ry="7.6" fill="#3e5040" opacity="0.85"/><ellipse cx="157.9" cy="220.2" rx="5.6" ry="8.0" fill="#7a8e6e" opacity="0.85"/><ellipse cx="46.2" cy="321.6" rx="9.9" ry="5.8" fill="#8fa282" opacity="0.85"/><ellipse cx="23.7" cy="267.6" rx="7.9" ry="6.0" fill="#5c7454" opacity="0.85"/><ellipse cx="137.0" cy="327.5" rx="6.9" ry="7.3" fill="#7a8e6e" opacity="0.85"/><ellipse cx="128.7" cy="228.7" rx="5.8" ry="6.0" fill="#4a5e44" opacity="0.85"/><ellipse cx="-0.7" cy="255.0" rx="8.6" ry="4.9" fill="#5c7454" opacity="0.85"/><ellipse cx="88.7" cy="207.4" rx="5.1" ry="7.8" fill="#6a7e60" opacity="0.85"/><ellipse cx="125.7" cy="301.8" rx="11.3" ry="6.9" fill="#a0ae94" opacity="0.85"/><ellipse cx="79.5" cy="234.0" rx="9.9" ry="6.4" fill="#a0ae94" opacity="0.85"/><ellipse cx="175.9" cy="311.0" rx="10.4" ry="4.6" fill="#a0ae94" opacity="0.85"/><ellipse cx="14.3" cy="329.1" rx="8.3" ry="6.1" fill="#6a7e60" opacity="0.85"/><ellipse cx="159.3" cy="217.7" rx="6.8" ry="7.0" fill="#4a5e44" opacity="0.85"/><ellipse cx="72.8" cy="227.7" rx="9.9" ry="5.5" fill="#6a7e60" opacity="0.85"/><ellipse cx="16.1" cy="240.4" rx="11.4" ry="6.3" fill="#a0ae94" opacity="0.85"/><ellipse cx="12.6" cy="323.9" rx="9.2" ry="8.6" fill="#3e5040" opacity="0.85"/><ellipse cx="154.8" cy="340.0" rx="10.7" ry="6.1" fill="#6a7e60" opacity="0.85"/><ellipse cx="130.3" cy="262.0" rx="5.4" ry="7.9" fill="#5c7454" opacity="0.85"/><ellipse cx="15.9" cy="256.8" rx="4.8" ry="5.2" fill="#b8beb2" opacity="0.85"/><ellipse cx="48.2" cy="218.4" rx="7.8" ry="6.2" fill="#5c7454" opacity="0.85"/><ellipse cx="90.6" cy="185.3" rx="5.1" ry="4.2" fill="#8fa282" opacity="0.85"/><ellipse cx="158.2" cy="215.4" rx="5.7" ry="7.8" fill="#b8beb2" opacity="0.85"/><ellipse cx="135.8" cy="318.3" rx="6.8" ry="8.5" fill="#8fa282" opacity="0.85"/><ellipse cx="147.1" cy="223.7" rx="4.9" ry="7.1" fill="#b8beb2" opacity="0.85"/><ellipse cx="121.4" cy="260.8" rx="6.1" ry="8.3" fill="#8fa282" opacity="0.85"/><ellipse cx="2.4" cy="179.0" rx="11.3" ry="5.4" fill="#6a7e60" opacity="0.85"/><ellipse cx="70.4" cy="318.3" rx="9.5" ry="8.5" fill="#6a7e60" opacity="0.85"/><ellipse cx="34.2" cy="215.2" rx="6.6" ry="7.5" fill="#8fa282" opacity="0.85"/><ellipse cx="85.3" cy="213.1" rx="7.3" ry="7.2" fill="#3e5040" opacity="0.85"/><ellipse cx="155.6" cy="266.2" rx="11.4" ry="8.3" fill="#8fa282" opacity="0.85"/><ellipse cx="26.4" cy="200.6" rx="9.1" ry="4.5" fill="#7a8e6e" opacity="0.85"/><ellipse cx="173.8" cy="239.2" rx="8.4" ry="4.3" fill="#5c7454" opacity="0.85"/><ellipse cx="103.3" cy="211.2" rx="7.6" ry="6.8" fill="#3e5040" opacity="0.85"/><ellipse cx="23.4" cy="338.0" rx="6.4" ry="5.4" fill="#8fa282" opacity="0.85"/><ellipse cx="93.9" cy="193.5" rx="11.5" ry="4.2" fill="#7a8e6e" opacity="0.85"/><ellipse cx="78.0" cy="295.2" rx="4.8" ry="8.3" fill="#a0ae94" opacity="0.85"/><ellipse cx="4.3" cy="171.4" rx="6.9" ry="6.4" fill="#6a7e60" opacity="0.85"/><ellipse cx="-0.9" cy="212.4" rx="8.8" ry="7.8" fill="#7a8e6e" opacity="0.85"/><ellipse cx="13.8" cy="238.4" rx="8.5" ry="5.3" fill="#b8beb2" opacity="0.85"/><ellipse cx="124.7" cy="289.9" rx="8.1" ry="5.1" fill="#3e5040" opacity="0.85"/><ellipse cx="99.7" cy="249.8" rx="6.1" ry="8.7" fill="#4a5e44" opacity="0.85"/><ellipse cx="2.8" cy="240.7" rx="7.0" ry="7.0" fill="#7a8e6e" opacity="0.85"/><ellipse cx="105.0" cy="305.2" rx="9.7" ry="8.2" fill="#b8beb2" opacity="0.85"/><ellipse cx="-1.1" cy="180.5" rx="8.6" ry="6.7" fill="#7a8e6e" opacity="0.85"/><ellipse cx="138.6" cy="202.8" rx="5.1" ry="6.1" fill="#7a8e6e" opacity="0.85"/><ellipse cx="121.0" cy="307.6" rx="10.0" ry="6.5" fill="#3e5040" opacity="0.85"/><ellipse cx="112.6" cy="251.9" rx="6.5" ry="4.8" fill="#a0ae94" opacity="0.85"/><ellipse cx="120.1" cy="309.7" rx="5.2" ry="6.0" fill="#b8beb2" opacity="0.85"/><ellipse cx="60.1" cy="198.9" rx="5.6" ry="7.7" fill="#4a5e44" opacity="0.85"/><ellipse cx="130.0" cy="253.9" rx="4.8" ry="6.0" fill="#4a5e44" opacity="0.85"/><ellipse cx="95.3" cy="244.9" rx="11.4" ry="7.3" fill="#5c7454" opacity="0.85"/><ellipse cx="124.9" cy="335.8" rx="6.8" ry="4.6" fill="#8fa282" opacity="0.85"/><ellipse cx="150.3" cy="235.3" rx="11.1" ry="5.8" fill="#5c7454" opacity="0.85"/><ellipse cx="55.1" cy="336.8" rx="5.0" ry="6.0" fill="#8fa282" opacity="0.85"/><ellipse cx="56.2" cy="285.1" rx="7.9" ry="6.0" fill="#7a8e6e" opacity="0.85"/><ellipse cx="148.0" cy="228.6" rx="6.2" ry="5.7" fill="#4a5e44" opacity="0.85"/><ellipse cx="26.9" cy="258.9" rx="8.0" ry="6.0" fill="#7a8e6e" opacity="0.85"/><ellipse cx="102.3" cy="296.8" rx="7.8" ry="8.8" fill="#b8beb2" opacity="0.85"/><ellipse cx="117.9" cy="315.4" rx="8.4" ry="6.1" fill="#8fa282" opacity="0.85"/><ellipse cx="1.9" cy="209.7" rx="9.0" ry="6.6" fill="#3e5040" opacity="0.85"/><ellipse cx="129.4" cy="252.2" rx="6.6" ry="5.8" fill="#8fa282" opacity="0.85"/><ellipse cx="21.4" cy="328.7" rx="5.7" ry="5.2" fill="#6a7e60" opacity="0.85"/><ellipse cx="176.5" cy="311.1" rx="5.3" ry="8.3" fill="#b8beb2" opacity="0.85"/><ellipse cx="52.9" cy="298.8" rx="6.8" ry="7.0" fill="#4a5e44" opacity="0.85"/><ellipse cx="82.9" cy="193.7" rx="5.0" ry="5.6" fill="#7a8e6e" opacity="0.85"/><ellipse cx="71.1" cy="257.9" rx="8.3" ry="6.7" fill="#7a8e6e" opacity="0.85"/><ellipse cx="50.8" cy="241.3" rx="5.8" ry="5.1" fill="#a0ae94" opacity="0.85"/><ellipse cx="44.7" cy="288.4" rx="5.7" ry="6.5" fill="#a0ae94" opacity="0.85"/><ellipse cx="58.5" cy="178.4" rx="7.1" ry="5.1" fill="#6a7e60" opacity="0.85"/><ellipse cx="0.7" cy="164.3" rx="8.6" ry="7.9" fill="#b8beb2" opacity="0.85"/><ellipse cx="116.3" cy="325.5" rx="8.6" ry="5.8" fill="#8fa282" opacity="0.85"/><ellipse cx="15.6" cy="299.5" rx="6.4" ry="7.1" fill="#6a7e60" opacity="0.85"/><ellipse cx="9.7" cy="237.0" rx="8.1" ry="6.4" fill="#a0ae94" opacity="0.85"/><ellipse cx="122.4" cy="199.8" rx="6.1" ry="7.7" fill="#a0ae94" opacity="0.85"/><ellipse cx="57.6" cy="288.3" rx="9.8" ry="8.4" fill="#5c7454" opacity="0.85"/><ellipse cx="140.9" cy="246.1" rx="9.5" ry="6.7" fill="#3e5040" opacity="0.85"/><ellipse cx="65.1" cy="225.5" rx="11.0" ry="5.4" fill="#5c7454" opacity="0.85"/><ellipse cx="62.5" cy="312.5" rx="8.0" ry="5.6" fill="#3e5040" opacity="0.85"/><ellipse cx="56.9" cy="320.6" rx="6.5" ry="7.3" fill="#3e5040" opacity="0.85"/><ellipse cx="27.4" cy="244.5" rx="11.3" ry="5.8" fill="#6a7e60" opacity="0.85"/><ellipse cx="99.0" cy="329.7" rx="9.0" ry="7.0" fill="#5c7454" opacity="0.85"/><ellipse cx="194.0" cy="261.8" rx="3.7" ry="5.0" fill="#3e5040" opacity="0.6"/><ellipse cx="196.9" cy="329.2" rx="3.6" ry="3.9" fill="#a0ae94" opacity="0.6"/><ellipse cx="201.2" cy="248.7" rx="5.7" ry="3.5" fill="#6a7e60" opacity="0.6"/><ellipse cx="208.6" cy="243.9" rx="6.6" ry="4.2" fill="#3e5040" opacity="0.6"/><ellipse cx="163.3" cy="277.5" rx="3.4" ry="5.3" fill="#a0ae94" opacity="0.6"/><ellipse cx="226.8" cy="304.6" rx="6.4" ry="5.3" fill="#5c7454" opacity="0.6"/><ellipse cx="225.5" cy="329.5" rx="4.7" ry="3.8" fill="#6a7e60" opacity="0.6"/><ellipse cx="164.7" cy="309.5" rx="6.7" ry="5.7" fill="#8fa282" opacity="0.6"/><ellipse cx="235.4" cy="311.8" rx="5.0" ry="5.7" fill="#7a8e6e" opacity="0.6"/><ellipse cx="223.5" cy="246.8" rx="4.8" ry="5.9" fill="#a0ae94" opacity="0.6"/><ellipse cx="203.2" cy="239.9" rx="5.1" ry="5.8" fill="#8fa282" opacity="0.6"/><ellipse cx="231.9" cy="301.2" rx="8.1" ry="6.2" fill="#5c7454" opacity="0.6"/><ellipse cx="229.5" cy="248.9" rx="5.8" ry="5.7" fill="#b8beb2" opacity="0.6"/><ellipse cx="166.3" cy="287.0" rx="7.5" ry="3.6" fill="#a0ae94" opacity="0.6"/><ellipse cx="182.3" cy="273.0" rx="4.6" ry="5.6" fill="#a0ae94" opacity="0.6"/><ellipse cx="190.8" cy="294.5" rx="5.0" ry="6.0" fill="#7a8e6e" opacity="0.6"/><ellipse cx="226.3" cy="312.3" rx="6.5" ry="3.8" fill="#a0ae94" opacity="0.6"/><ellipse cx="218.7" cy="243.8" rx="4.0" ry="4.7" fill="#7a8e6e" opacity="0.6"/><ellipse cx="213.4" cy="239.2" rx="8.0" ry="5.0" fill="#7a8e6e" opacity="0.6"/><ellipse cx="215.2" cy="307.7" rx="4.7" ry="4.3" fill="#7a8e6e" opacity="0.6"/><ellipse cx="182.1" cy="292.4" rx="7.8" ry="6.8" fill="#a0ae94" opacity="0.6"/><ellipse cx="166.9" cy="298.2" rx="7.5" ry="4.1" fill="#5c7454" opacity="0.6"/><ellipse cx="189.9" cy="276.8" rx="5.3" ry="6.5" fill="#5c7454" opacity="0.6"/><ellipse cx="225.6" cy="315.6" rx="5.2" ry="4.5" fill="#7a8e6e" opacity="0.6"/><ellipse cx="223.2" cy="313.6" rx="4.5" ry="5.9" fill="#3e5040" opacity="0.6"/><ellipse cx="193.8" cy="228.3" rx="6.6" ry="4.1" fill="#a0ae94" opacity="0.6"/><ellipse cx="184.4" cy="317.0" rx="4.2" ry="3.8" fill="#b8beb2" opacity="0.6"/><ellipse cx="233.1" cy="241.7" rx="5.5" ry="3.9" fill="#b8beb2" opacity="0.6"/><ellipse cx="229.4" cy="244.0" rx="4.7" ry="4.8" fill="#7a8e6e" opacity="0.6"/><ellipse cx="187.4" cy="220.8" rx="5.1" ry="4.3" fill="#8fa282" opacity="0.6"/><ellipse cx="167.1" cy="218.8" rx="6.6" ry="3.4" fill="#3e5040" opacity="0.6"/><ellipse cx="188.4" cy="228.0" rx="8.1" ry="4.8" fill="#8fa282" opacity="0.6"/><ellipse cx="165.7" cy="253.9" rx="6.1" ry="4.1" fill="#a0ae94" opacity="0.6"/><ellipse cx="209.4" cy="312.2" rx="4.7" ry="6.6" fill="#3e5040" opacity="0.6"/><ellipse cx="228.0" cy="332.6" rx="6.1" ry="6.6" fill="#b8beb2" opacity="0.6"/><ellipse cx="166.8" cy="315.9" rx="6.0" ry="5.7" fill="#7a8e6e" opacity="0.6"/><ellipse cx="183.5" cy="213.8" rx="3.7" ry="5.0" fill="#3e5040" opacity="0.6"/><ellipse cx="229.6" cy="218.7" rx="3.5" ry="5.2" fill="#6a7e60" opacity="0.6"/><ellipse cx="223.9" cy="307.9" rx="5.3" ry="6.1" fill="#b8beb2" opacity="0.6"/><ellipse cx="225.2" cy="304.9" rx="7.9" ry="5.0" fill="#5c7454" opacity="0.6"/><ellipse cx="226.1" cy="260.9" rx="3.4" ry="3.9" fill="#4a5e44" opacity="0.6"/><ellipse cx="187.5" cy="299.6" rx="7.3" ry="4.6" fill="#3e5040" opacity="0.6"/><ellipse cx="211.0" cy="254.2" rx="3.7" ry="5.6" fill="#3e5040" opacity="0.6"/><ellipse cx="207.7" cy="243.3" rx="6.9" ry="4.1" fill="#8fa282" opacity="0.6"/><ellipse cx="218.9" cy="277.8" rx="4.2" ry="3.8" fill="#8fa282" opacity="0.6"/><ellipse cx="174.0" cy="253.8" rx="3.5" ry="4.8" fill="#a0ae94" opacity="0.6"/><ellipse cx="167.2" cy="222.5" rx="3.5" ry="4.0" fill="#8fa282" opacity="0.6"/><ellipse cx="168.2" cy="283.0" rx="5.4" ry="6.7" fill="#6a7e60" opacity="0.6"/><ellipse cx="179.7" cy="260.9" rx="7.3" ry="3.6" fill="#7a8e6e" opacity="0.6"/><ellipse cx="192.5" cy="323.6" rx="7.1" ry="5.2" fill="#7a8e6e" opacity="0.6"/><ellipse cx="164.0" cy="300.3" rx="7.7" ry="3.6" fill="#a0ae94" opacity="0.6"/><ellipse cx="209.4" cy="253.1" rx="7.5" ry="5.5" fill="#b8beb2" opacity="0.6"/><ellipse cx="201.0" cy="280.4" rx="4.0" ry="5.9" fill="#5c7454" opacity="0.6"/><ellipse cx="218.9" cy="264.3" rx="5.4" ry="4.7" fill="#b8beb2" opacity="0.6"/><ellipse cx="180.5" cy="284.4" rx="5.9" ry="3.5" fill="#4a5e44" opacity="0.6"/><ellipse cx="210.2" cy="265.6" rx="6.2" ry="6.6" fill="#4a5e44" opacity="0.6"/><ellipse cx="174.6" cy="268.3" rx="6.9" ry="4.5" fill="#3e5040" opacity="0.6"/><ellipse cx="218.4" cy="332.0" rx="3.7" ry="6.7" fill="#a0ae94" opacity="0.6"/><ellipse cx="219.6" cy="320.8" rx="4.5" ry="6.3" fill="#5c7454" opacity="0.6"/><ellipse cx="211.8" cy="325.7" rx="7.2" ry="5.1" fill="#5c7454" opacity="0.6"/><ellipse cx="237.6" cy="218.8" rx="6.8" ry="4.3" fill="#4a5e44" opacity="0.6"/><ellipse cx="223.7" cy="266.5" rx="7.5" ry="4.1" fill="#4a5e44" opacity="0.6"/><ellipse cx="184.2" cy="289.7" rx="3.9" ry="4.9" fill="#5c7454" opacity="0.6"/><ellipse cx="219.9" cy="318.2" rx="7.2" ry="6.3" fill="#5c7454" opacity="0.6"/><ellipse cx="220.9" cy="278.1" rx="7.2" ry="3.9" fill="#5c7454" opacity="0.6"/><ellipse cx="190.6" cy="223.2" rx="7.8" ry="6.7" fill="#4a5e44" opacity="0.6"/><ellipse cx="179.7" cy="246.2" rx="4.3" ry="4.7" fill="#a0ae94" opacity="0.6"/><ellipse cx="226.8" cy="286.4" rx="3.7" ry="6.8" fill="#b8beb2" opacity="0.6"/><ellipse cx="178.7" cy="287.9" rx="6.1" ry="6.8" fill="#8fa282" opacity="0.6"/><ellipse cx="191.6" cy="310.9" rx="7.4" ry="6.6" fill="#6a7e60" opacity="0.6"/><ellipse cx="182.6" cy="218.6" rx="3.3" ry="4.3" fill="#c09a9a" opacity="0.5"/><ellipse cx="123.0" cy="256.5" rx="2.8" ry="3.3" fill="#c09a9a" opacity="0.5"/><ellipse cx="133.7" cy="232.4" rx="4.4" ry="3.3" fill="#c09a9a" opacity="0.5"/><ellipse cx="103.0" cy="204.3" rx="3.3" ry="4.2" fill="#c09a9a" opacity="0.5"/><ellipse cx="208.6" cy="275.8" rx="3.3" ry="2.9" fill="#c09a9a" opacity="0.5"/><ellipse cx="134.6" cy="235.5" rx="4.4" ry="3.3" fill="#c09a9a" opacity="0.5"/><ellipse cx="118.4" cy="209.9" rx="3.0" ry="3.8" fill="#c09a9a" opacity="0.5"/><ellipse cx="153.2" cy="247.5" rx="3.0" ry="3.0" fill="#c09a9a" opacity="0.5"/><ellipse cx="209.4" cy="294.4" rx="2.9" ry="4.0" fill="#c09a9a" opacity="0.5"/><ellipse cx="129.7" cy="246.0" rx="3.3" ry="3.6" fill="#c09a9a" opacity="0.5"/><ellipse cx="129.0" cy="262.6" rx="3.7" ry="3.4" fill="#c09a9a" opacity="0.5"/><ellipse cx="173.6" cy="264.5" rx="3.4" ry="4.1" fill="#c09a9a" opacity="0.5"/><ellipse cx="103.6" cy="259.6" rx="2.8" ry="3.5" fill="#c09a9a" opacity="0.5"/><ellipse cx="174.7" cy="285.7" rx="3.8" ry="3.3" fill="#c09a9a" opacity="0.5"/><ellipse cx="114.5" cy="287.1" rx="4.8" ry="2.9" fill="#c09a9a" opacity="0.5"/><ellipse cx="182.5" cy="243.5" rx="3.3" ry="4.3" fill="#c09a9a" opacity="0.5"/><ellipse cx="104.0" cy="200.4" rx="4.3" ry="4.1" fill="#c09a9a" opacity="0.5"/><ellipse cx="223.3" cy="280.5" rx="5.1" ry="4.1" fill="#c09a9a" opacity="0.5"/><ellipse cx="121.1" cy="204.7" rx="3.2" ry="3.8" fill="#c09a9a" opacity="0.5"/><ellipse cx="160.8" cy="263.8" rx="2.9" ry="3.2" fill="#c09a9a" opacity="0.5"/><ellipse cx="104.6" cy="277.9" rx="3.9" ry="3.2" fill="#c09a9a" opacity="0.5"/><ellipse cx="168.3" cy="208.5" rx="2.9" ry="4.8" fill="#c09a9a" opacity="0.5"/><polygon points="-10.2,377.6 782.3,391.2 782.3,421.8 -10.2,421.8" fill="#d2d3cc" /><polygon points="136.1,403.1 646.3,399.7 646.3,421.8 136.1,421.8" fill="#a8ae96" opacity="0.85"/></g></svg><div class="abs" style="left:0;top:410px;width:756px;height:534px;background:radial-gradient(ellipse 80% 100% at 50% 12%, #9299aa 0%, #8d94a5 35%, #7d8496 80%, #71788b 100%)"></div><svg class="abs" style="left:0;top:410px" width="756" height="6"><path d="M0 0H90Q30 1 0 5Z" fill="#d0d1ca"/><path d="M756 0H666Q726 1 756 5Z" fill="#d0d1ca"/></svg></div><svg class="abs" style="left:4px;top:66px" width="12" height="12" viewBox="0 0 12 12"><path d="M0 0H12L0 12Z" fill="#1a7ef0"/></svg><div class="abs " style="left:13px;top:71px;width:35px;height:35px;background:rgba(58,62,70,0.92);border:2px solid #1e2024;border-radius:18px;"></div><svg class="abs" style="left:21px;top:80px" width="19" height="16" viewBox="0 0 19 16"><path d="M0 2H19M0 8H19M0 14H19" stroke="#d6d6d6" stroke-width="2"/></svg><div class="abs " style="left:60px;top:71px;width:60px;height:35px;background:rgba(58,62,70,0.92);border:2px solid #1e2024;border-radius:18px;"></div><div class="abs t " style="left:72px;top:76.6px;font-size:19px;line-height:22.8px;color:#d4d4d4;transform:scaleX(0.96);transform-origin:left center;">원근</div><div class="abs " style="left:132px;top:71px;width:148px;height:35px;background:rgba(58,62,70,0.92);border:2px solid #1e2024;border-radius:18px;"></div><svg class="abs" style="left:144px;top:77px" width="23" height="23" viewBox="0 0 23 23"><circle cx="11.5" cy="11.5" r="10" fill="#9a9ea6"/><circle cx="11.5" cy="11.5" r="7.5" fill="#5a5d64"/><circle cx="14" cy="9" r="2" fill="#d0d0d0"/></svg><div class="abs t " style="left:175px;top:76.6px;font-size:19px;line-height:22.8px;color:#d4d4d4;transform:scaleX(0.96);transform-origin:left center;">라이팅포함</div><div class="abs " style="left:293px;top:71px;width:59px;height:35px;background:rgba(58,62,70,0.92);border:2px solid #1e2024;border-radius:18px;"></div><div class="abs t " style="left:305px;top:76.6px;font-size:19px;line-height:22.8px;color:#d4d4d4;transform:scaleX(0.96);transform-origin:left center;">표시</div><svg class="abs" style="left:12px;top:912px" width="60" height="72" viewBox="0 0 60 72"><path d="M42 8V62" stroke="#2a3cff" stroke-width="2"/><path d="M8 62H42" stroke="#2ad02a" stroke-width="2"/><text x="44" y="18" font-size="17" fill="#3a4aff" font-family="Liberation Sans">Z</text><text x="12" y="67" font-size="17" fill="#30e030" font-family="Liberation Sans">Y</text><text x="44" y="72" font-size="17" fill="#ff2a2a" font-family="Liberation Sans">X</text></svg><svg class="abs" style="left:620px;top:980px" width="140" height="30" viewBox="0 0 140 30"><defs><radialGradient id="sph" cx="0.45" cy="0.3" r="0.7"><stop offset="0" stop-color="#d8d8d8"/><stop offset="0.5" stop-color="#8e8e8e"/><stop offset="1" stop-color="#4a4a4a"/></radialGradient><linearGradient id="cyl" x1="0" y1="0" x2="1" y2="0"><stop offset="0" stop-color="#9a9a9a"/><stop offset="0.4" stop-color="#b4b4b4"/><stop offset="1" stop-color="#6e6e6e"/></linearGradient></defs><circle cx="14.8" cy="14.8" r="12.6" fill="#c9cacf" stroke="#1d2026" stroke-width="1.6"/><circle cx="42.8" cy="14.8" r="12.6" fill="#c9cacf" stroke="#1d2026" stroke-width="1.6"/><circle cx="69.5" cy="14.8" r="12.6" fill="#c9cacf" stroke="#1d2026" stroke-width="1.6"/><circle cx="96.3" cy="14.8" r="12.6" fill="#c9cacf" stroke="#1d2026" stroke-width="1.6"/><circle cx="123.7" cy="14.8" r="12.6" fill="#c9cacf" stroke="#1d2026" stroke-width="1.6"/><rect x="7.5" y="4" width="12.5" height="21.5" fill="url(#cyl)"/><circle cx="42.8" cy="14.8" r="12" fill="url(#sph)"/><path d="M36 4A12 12 0 0 0 40 26.5" fill="none" stroke="#d0800a" stroke-width="2"/><path d="M58 14L70 10L82 14L70 19Z" fill="#9c9c9c"/><path d="M86 5H103L106 8V25H88L86 22Z" fill="#8a8a8a"/><path d="M86 5H103L106 8H89Z" fill="#a8a8a8"/><path d="M113 14L125 8L135 13V18L124 24L113 19Z" fill="#8c8c8c"/><path d="M113 14L125 8L135 13L124 19Z" fill="#b0b0b0"/><path d="M119 13L123 11L125 16L121 17Z M125 11L129 9L131 13L127 15Z" fill="#3a3a3a"/></svg>
<div class="abs " style="left:0px;top:1010px;width:768px;height:801px;background:#151515"></div><div class="abs " style="left:4px;top:1019px;width:240px;height:37px;background:#242424;border-radius:5px 5px 0 0"></div><svg class="abs" style="left:11px;top:1025px" width="25" height="25" viewBox="0 0 25 25"><path d="M3 18L15 4L20 8L8 22L2 23Z" fill="#bdbdbd"/><path d="M15 4L17 2L22 6L20 8Z" fill="#bdbdbd"/><path d="M11 23H24M14 20H24" stroke="#777" stroke-width="1.5"/></svg><div class="abs t " style="left:46px;top:1025.6px;font-size:19px;line-height:22.8px;color:#d6d6d6;transform:scaleX(0.96);transform-origin:left center;">디테일</div><div class="abs t " style="left:208px;top:1023.8px;font-size:22px;line-height:26.4px;color:#d0d0d0;transform:scaleX(0.96);transform-origin:left center;font-weight:bold">×</div><svg class="abs" style="left:254px;top:1025px" width="25" height="25" viewBox="0 0 25 25"><path d="M3 18L15 4L20 8L8 22L2 23Z" fill="#bdbdbd"/><path d="M15 4L17 2L22 6L20 8Z" fill="#bdbdbd"/><path d="M11 23H24M14 20H24" stroke="#777" stroke-width="1.5"/></svg><div class="abs t " style="left:288px;top:1025.6px;font-size:19px;line-height:22.8px;color:#d0d0d0;transform:scaleX(0.96);transform-origin:left center;">파라미터</div><div class="abs " style="left:4px;top:1056px;width:756px;height:755px;background:#242424"></div><div class="abs " style="left:17px;top:1069px;width:658px;height:33px;background:#0e0e0e;border:1px solid #2c2c2c;border-radius:17px"></div><svg class="abs" style="left:24px;top:1074px" width="24" height="24" viewBox="0 0 24 24"><circle cx="10" cy="10" r="7.5" fill="none" stroke="#d8d8d8" stroke-width="2.4"/><path d="M15.5 15.5L22 22" stroke="#d8d8d8" stroke-width="2.6"/></svg><div class="abs t " style="left:60px;top:1073.6px;font-size:19px;line-height:22.8px;color:#5e5e5e;transform:scaleX(0.96);transform-origin:left center;">검색</div><svg class="abs" style="left:695px;top:1074px" width="22" height="22" viewBox="0 0 22 22"><rect x="1" y="1" width="20" height="20" fill="none" stroke="#cfcfcf" stroke-width="2"/><path d="M1 7H21M1 12H21M1 17H21M8 7V21" stroke="#cfcfcf" stroke-width="1.8"/></svg><svg class="abs" style="left:730px;top:1073px" width="24" height="24" viewBox="0 0 24 24"><circle cx="12" cy="12" r="7" fill="none" stroke="#cfcfcf" stroke-width="3"/><circle cx="12" cy="12" r="3" fill="#cfcfcf"/><rect x="10.5" y="0.5" width="3" height="5" fill="#cfcfcf" transform="rotate(0 12 12)"/><rect x="10.5" y="0.5" width="3" height="5" fill="#cfcfcf" transform="rotate(45 12 12)"/><rect x="10.5" y="0.5" width="3" height="5" fill="#cfcfcf" transform="rotate(90 12 12)"/><rect x="10.5" y="0.5" width="3" height="5" fill="#cfcfcf" transform="rotate(135 12 12)"/><rect x="10.5" y="0.5" width="3" height="5" fill="#cfcfcf" transform="rotate(180 12 12)"/><rect x="10.5" y="0.5" width="3" height="5" fill="#cfcfcf" transform="rotate(225 12 12)"/><rect x="10.5" y="0.5" width="3" height="5" fill="#cfcfcf" transform="rotate(270 12 12)"/><rect x="10.5" y="0.5" width="3" height="5" fill="#cfcfcf" transform="rotate(315 12 12)"/></svg><div class="abs " style="left:736px;top:1114px;width:24px;height:697px;background:#1c1c1c"></div><div class="abs " style="left:741px;top:1117px;width:12px;height:225px;background:#575757;border-radius:6px"></div><div class="abs " style="left:4px;top:1114px;width:732px;height:40px;background:#2f2f2f"></div><svg class="abs" style="left:12px;top:1128.0px" width="16" height="11" viewBox="0 0 16 11"><path d="M0 0H15L7.5 10Z" fill="#8e8e8e"/></svg><div class="abs t " style="left:37px;top:1124.0px;font-size:16.7px;line-height:20.0px;color:#d8d8d8;transform:scaleX(0.9);transform-origin:left center;font-weight:bold">머티리얼</div><div class="abs " style="left:4px;top:1154px;width:732px;height:40px;background:#222222;border-top:1px solid #1a1a1a"></div><div class="abs " style="left:295px;top:1154px;width:2px;height:40px;background:#1a1a1a"></div><div class="abs " style="left:702px;top:1154px;width:2px;height:40px;background:#1a1a1a"></div><div class="abs t " style="left:37px;top:1165.0px;font-size:16.7px;line-height:20.0px;color:#c8c8c8;transform:scaleX(0.9);transform-origin:left center;">머티리얼 도메인</div><div class="abs " style="left:4px;top:1194px;width:732px;height:41px;background:#222222;border-top:1px solid #1a1a1a"></div><div class="abs " style="left:295px;top:1194px;width:2px;height:41px;background:#1a1a1a"></div><div class="abs " style="left:702px;top:1194px;width:2px;height:41px;background:#1a1a1a"></div><div class="abs t " style="left:37px;top:1205.5px;font-size:16.7px;line-height:20.0px;color:#c8c8c8;transform:scaleX(0.9);transform-origin:left center;">블렌드 모드</div><div class="abs " style="left:4px;top:1235px;width:732px;height:40px;background:#222222;border-top:1px solid #1a1a1a"></div><div class="abs " style="left:295px;top:1235px;width:2px;height:40px;background:#1a1a1a"></div><div class="abs " style="left:702px;top:1235px;width:2px;height:40px;background:#1a1a1a"></div><div class="abs t " style="left:37px;top:1246.0px;font-size:16.7px;line-height:20.0px;color:#c8c8c8;transform:scaleX(0.9);transform-origin:left center;">셰이딩 모델</div><div class="abs " style="left:4px;top:1275px;width:732px;height:40px;background:#222222;border-top:1px solid #1a1a1a"></div><div class="abs " style="left:295px;top:1275px;width:2px;height:40px;background:#1a1a1a"></div><div class="abs " style="left:702px;top:1275px;width:2px;height:40px;background:#1a1a1a"></div><div class="abs t " style="left:37px;top:1286.0px;font-size:16.7px;line-height:20.0px;color:#c8c8c8;transform:scaleX(0.9);transform-origin:left center;">양면</div><div class="abs " style="left:4px;top:1315px;width:732px;height:41px;background:#222222;border-top:1px solid #1a1a1a"></div><div class="abs " style="left:295px;top:1315px;width:2px;height:41px;background:#1a1a1a"></div><div class="abs " style="left:702px;top:1315px;width:2px;height:41px;background:#1a1a1a"></div><div class="abs t " style="left:37px;top:1326.5px;font-size:16.7px;line-height:20.0px;color:#c8c8c8;transform:scaleX(0.9);transform-origin:left center;">머티리얼 어트리뷰트 사용</div><div class="abs " style="left:4px;top:1356px;width:732px;height:41px;background:#222222;border-top:1px solid #1a1a1a"></div><div class="abs " style="left:295px;top:1356px;width:2px;height:41px;background:#1a1a1a"></div><div class="abs " style="left:702px;top:1356px;width:2px;height:41px;background:#1a1a1a"></div><div class="abs t " style="left:37px;top:1367.5px;font-size:16.7px;line-height:20.0px;color:#c8c8c8;transform:scaleX(0.9);transform-origin:left center;">레이 트레이스된 섀도 드리우기</div><div class="abs " style="left:315px;top:1158px;width:186px;height:32px;background:#0f0f0f;border:1px solid #3a3a3a;border-radius:5px"></div><div class="abs t " style="left:327px;top:1162.9px;font-size:18.5px;line-height:22.2px;color:#d8d8d8;transform:scaleX(0.87);transform-origin:left center;">Volume</div><svg class="abs" style="left:469px;top:1169.9px" width="17" height="10.2"><path d="M1 1L8.5 9.2L16 1" fill="none" stroke="#d8d8d8" stroke-width="2.4"/></svg><svg class="abs" style="left:710px;top:1166px" width="20" height="16" viewBox="0 0 20 16"><path d="M7 1L1.5 6.5L7 12" fill="none" stroke="#cfcfcf" stroke-width="2"/><path d="M2 6.5H13Q19 6.5 19 11Q19 15 14 15" fill="none" stroke="#cfcfcf" stroke-width="2"/></svg><div class="abs " style="left:315px;top:1199px;width:186px;height:32px;background:#0f0f0f;border:1px solid #3a3a3a;border-radius:5px"></div><div class="abs t " style="left:327px;top:1203.9px;font-size:18.5px;line-height:22.2px;color:#d8d8d8;transform:scaleX(0.87);transform-origin:left center;">Additive</div><svg class="abs" style="left:469px;top:1210.9px" width="17" height="10.2"><path d="M1 1L8.5 9.2L16 1" fill="none" stroke="#d8d8d8" stroke-width="2.4"/></svg><svg class="abs" style="left:710px;top:1206px" width="20" height="16" viewBox="0 0 20 16"><path d="M7 1L1.5 6.5L7 12" fill="none" stroke="#cfcfcf" stroke-width="2"/><path d="M2 6.5H13Q19 6.5 19 11Q19 15 14 15" fill="none" stroke="#cfcfcf" stroke-width="2"/></svg><div class="abs " style="left:315px;top:1239px;width:224px;height:32px;background:#2c2c2c;border:1px solid #3a3a3a;border-radius:5px"></div><div class="abs t " style="left:327px;top:1243.9px;font-size:18.5px;line-height:22.2px;color:#8a8a8a;transform:scaleX(0.87);transform-origin:left center;">Default Lit</div><svg class="abs" style="left:507px;top:1250.9px" width="17" height="10.2"><path d="M1 1L8.5 9.2L16 1" fill="none" stroke="#8a8a8a" stroke-width="2.4"/></svg><div class="abs " style="left:315px;top:1282px;width:26px;height:26px;background:#1a1a1a;border:1px solid #333;border-radius:4px"></div><div class="abs " style="left:315px;top:1323px;width:26px;height:26px;background:#0f0f0f;border:1px solid #333;border-radius:4px"></div><div class="abs " style="left:315px;top:1363px;width:26px;height:26px;background:#0f0f0f;border:1px solid #333;border-radius:4px"></div><svg class="abs" style="left:319px;top:1369px" width="18" height="14" viewBox="0 0 18 14"><path d="M1.5 7L6.5 12L16.5 1.5" fill="none" stroke="#1c86f2" stroke-width="3.2"/></svg><div class="abs " style="left:4px;top:1397px;width:732px;height:86px;background:#222222;border-top:1px solid #1a1a1a"></div><div class="abs " style="left:295px;top:1397px;width:2px;height:86px;background:#1a1a1a"></div><div class="abs " style="left:702px;top:1397px;width:2px;height:86px;background:#1a1a1a"></div><div class="abs t " style="left:37px;top:1431.0px;font-size:16.7px;line-height:20.0px;color:#c8c8c8;transform:scaleX(0.9);transform-origin:left center;">서브서피스 프로파일</div><div class="abs " style="left:316px;top:1404px;width:73px;height:73px;background:#1a1a1a;border:1px solid #2e2e2e;border-radius:4px;box-shadow:0 2px 4px #000"></div><div class="abs " style="left:318px;top:1473px;width:69px;height:3px;background:#f0a850"></div><div class="abs t " style="left:336px;top:1430.8px;font-size:17px;line-height:20.4px;color:#e8e8e8;transform:scaleX(0.87);transform-origin:left center;">None</div><div class="abs " style="left:403px;top:1404px;width:287px;height:32px;background:#2c2c2c;border:1px solid #383838;border-radius:5px"></div><div class="abs t " style="left:415px;top:1411.0px;font-size:16.7px;line-height:20.0px;color:#8a8a8a;transform:scaleX(0.9);transform-origin:left center;">없음</div><svg class="abs" style="left:655px;top:1414.9px" width="17" height="10.2"><path d="M1 1L8.5 9.2L16 1" fill="none" stroke="#9a9a9a" stroke-width="2.4"/></svg><svg class="abs" style="left:410px;top:1444px" width="24" height="24" viewBox="0 0 24 24"><circle cx="12" cy="12" r="10" fill="none" stroke="#5e5e5e" stroke-width="2.5"/><path d="M15 7L9 12L15 17M9 12H18" fill="none" stroke="#5e5e5e" stroke-width="2.5"/></svg><svg class="abs" style="left:449px;top:1443px" width="26" height="27" viewBox="0 0 26 27"><path d="M0 2H8L10 4H17V13Q11 13 10 20H0Z" fill="#a8a8a8"/><circle cx="17" cy="17" r="5" fill="none" stroke="#c8c8c8" stroke-width="2.4"/><path d="M13.5 20.5L9 25" stroke="#c8c8c8" stroke-width="2.4"/></svg><div class="abs " style="left:4px;top:1483px;width:732px;height:41px;background:#222222;border-top:1px solid #1a1a1a"></div><svg class="abs" style="left:14px;top:1496px" width="11" height="16" viewBox="0 0 11 16"><path d="M0 0V15L10 7.5Z" fill="#8e8e8e"/></svg><div class="abs t " style="left:37px;top:1494.0px;font-size:16.7px;line-height:20.0px;color:#d8d8d8;transform:scaleX(0.9);transform-origin:left center;">고급</div><div class="abs " style="left:4px;top:1524px;width:732px;height:40px;background:#2f2f2f"></div><svg class="abs" style="left:12px;top:1538.0px" width="16" height="11" viewBox="0 0 16 11"><path d="M0 0H15L7.5 10Z" fill="#8e8e8e"/></svg><div class="abs t " style="left:37px;top:1534.0px;font-size:16.7px;line-height:20.0px;color:#d8d8d8;transform:scaleX(0.9);transform-origin:left center;font-weight:bold">반투명</div><div class="abs " style="left:4px;top:1564px;width:732px;height:41px;background:#222222;border-top:1px solid #1a1a1a"></div><div class="abs " style="left:295px;top:1564px;width:2px;height:41px;background:#1a1a1a"></div><div class="abs " style="left:702px;top:1564px;width:2px;height:41px;background:#1a1a1a"></div><div class="abs t " style="left:37px;top:1575.5px;font-size:16.7px;line-height:20.0px;color:#c8c8c8;transform:scaleX(0.9);transform-origin:left center;">스크린 스페이스 리플렉션</div><div class="abs " style="left:4px;top:1605px;width:732px;height:40px;background:#222222;border-top:1px solid #1a1a1a"></div><div class="abs " style="left:295px;top:1605px;width:2px;height:40px;background:#1a1a1a"></div><div class="abs " style="left:702px;top:1605px;width:2px;height:40px;background:#1a1a1a"></div><div class="abs t " style="left:37px;top:1616.0px;font-size:16.7px;line-height:20.0px;color:#c8c8c8;transform:scaleX(0.9);transform-origin:left center;">컨택트 섀도</div><div class="abs " style="left:4px;top:1645px;width:732px;height:41px;background:#222222;border-top:1px solid #1a1a1a"></div><div class="abs " style="left:295px;top:1645px;width:2px;height:41px;background:#1a1a1a"></div><div class="abs " style="left:702px;top:1645px;width:2px;height:41px;background:#1a1a1a"></div><div class="abs t " style="left:37px;top:1656.5px;font-size:16.7px;line-height:20.0px;color:#c8c8c8;transform:scaleX(0.9);transform-origin:left center;">라이팅 모드</div><div class="abs " style="left:4px;top:1686px;width:732px;height:40px;background:#222222;border-top:1px solid #1a1a1a"></div><div class="abs " style="left:295px;top:1686px;width:2px;height:40px;background:#1a1a1a"></div><div class="abs " style="left:702px;top:1686px;width:2px;height:40px;background:#1a1a1a"></div><div class="abs t " style="left:37px;top:1697.0px;font-size:16.7px;line-height:20.0px;color:#c8c8c8;transform:scaleX(0.9);transform-origin:left center;">디렉셔널 라이팅 강도</div><div class="abs " style="left:4px;top:1726px;width:732px;height:41px;background:#222222;border-top:1px solid #1a1a1a"></div><div class="abs " style="left:295px;top:1726px;width:2px;height:41px;background:#1a1a1a"></div><div class="abs " style="left:702px;top:1726px;width:2px;height:41px;background:#1a1a1a"></div><div class="abs t " style="left:37px;top:1737.5px;font-size:16.7px;line-height:20.0px;color:#c8c8c8;transform:scaleX(0.9);transform-origin:left center;">포그 적용</div><div class="abs " style="left:4px;top:1767px;width:732px;height:40px;background:#222222;border-top:1px solid #1a1a1a"></div><div class="abs " style="left:295px;top:1767px;width:2px;height:40px;background:#1a1a1a"></div><div class="abs " style="left:702px;top:1767px;width:2px;height:40px;background:#1a1a1a"></div><div class="abs t " style="left:37px;top:1778.0px;font-size:16.7px;line-height:20.0px;color:#c8c8c8;transform:scaleX(0.9);transform-origin:left center;">클라우드 포그 적용</div><div class="abs " style="left:4px;top:1807px;width:732px;height:41px;background:#222222;border-top:1px solid #1a1a1a"></div><div class="abs " style="left:295px;top:1807px;width:2px;height:41px;background:#1a1a1a"></div><div class="abs " style="left:702px;top:1807px;width:2px;height:41px;background:#1a1a1a"></div><div class="abs t " style="left:37px;top:1817.7px;font-size:18px;line-height:21.6px;color:#c8c8c8;transform:scaleX(0.87);transform-origin:left center;"></div><div class="abs " style="left:315px;top:1572px;width:26px;height:26px;background:#0f0f0f;border:1px solid #333;border-radius:4px"></div><div class="abs " style="left:315px;top:1612px;width:26px;height:26px;background:#0f0f0f;border:1px solid #333;border-radius:4px"></div><div class="abs " style="left:315px;top:1650px;width:240px;height:32px;background:#0f0f0f;border:1px solid #3a3a3a;border-radius:5px"></div><div class="abs t " style="left:327px;top:1654.9px;font-size:18.5px;line-height:22.2px;color:#d8d8d8;transform:scaleX(0.87);transform-origin:left center;">Volumetric NonDirectional</div><svg class="abs" style="left:523px;top:1661.9px" width="17" height="10.2"><path d="M1 1L8.5 9.2L16 1" fill="none" stroke="#d8d8d8" stroke-width="2.4"/></svg><div class="abs " style="left:315px;top:1691px;width:186px;height:29px;background:#0f0f0f;border:1px solid #333;border-radius:4px"></div><div class="abs t " style="left:328px;top:1695.2px;font-size:18px;line-height:21.6px;color:#e0e0e0;transform:scaleX(0.87);transform-origin:left center;">1.0</div><div class="abs " style="left:315px;top:1733px;width:26px;height:26px;background:#0f0f0f;border:1px solid #333;border-radius:4px"></div><svg class="abs" style="left:319px;top:1739px" width="18" height="14" viewBox="0 0 18 14"><path d="M1.5 7L6.5 12L16.5 1.5" fill="none" stroke="#1c86f2" stroke-width="3.2"/></svg><div class="abs " style="left:315px;top:1774px;width:26px;height:26px;background:#0f0f0f;border:1px solid #333;border-radius:4px"></div>
<svg class="abs " style="left:768px;top:66px" width="3024" height="1745" viewBox="0 0 3024 1745"><rect width="3024" height="1745" fill="#262626"/><path fill="#383838" d="M12 0h2v1745h-2zM28 0h2v1745h-2zM44 0h2v1745h-2zM77 0h2v1745h-2zM93 0h2v1745h-2zM109 0h2v1745h-2zM125 0h2v1745h-2zM142 0h2v1745h-2zM158 0h2v1745h-2zM174 0h2v1745h-2zM206 0h2v1745h-2zM223 0h2v1745h-2zM239 0h2v1745h-2zM255 0h2v1745h-2zM271 0h2v1745h-2zM287 0h2v1745h-2zM304 0h2v1745h-2zM336 0h2v1745h-2zM352 0h2v1745h-2zM368 0h2v1745h-2zM385 0h2v1745h-2zM401 0h2v1745h-2zM417 0h2v1745h-2zM433 0h2v1745h-2zM466 0h2v1745h-2zM482 0h2v1745h-2zM498 0h2v1745h-2zM514 0h2v1745h-2zM530 0h2v1745h-2zM547 0h2v1745h-2zM563 0h2v1745h-2zM595 0h2v1745h-2zM611 0h2v1745h-2zM628 0h2v1745h-2zM644 0h2v1745h-2zM660 0h2v1745h-2zM676 0h2v1745h-2zM692 0h2v1745h-2zM725 0h2v1745h-2zM741 0h2v1745h-2zM757 0h2v1745h-2zM774 0h2v1745h-2zM790 0h2v1745h-2zM806 0h2v1745h-2zM822 0h2v1745h-2zM855 0h2v1745h-2zM871 0h2v1745h-2zM887 0h2v1745h-2zM903 0h2v1745h-2zM919 0h2v1745h-2zM936 0h2v1745h-2zM952 0h2v1745h-2zM984 0h2v1745h-2zM1000 0h2v1745h-2zM1017 0h2v1745h-2zM1033 0h2v1745h-2zM1049 0h2v1745h-2zM1065 0h2v1745h-2zM1081 0h2v1745h-2zM1114 0h2v1745h-2zM1130 0h2v1745h-2zM1146 0h2v1745h-2zM1162 0h2v1745h-2zM1179 0h2v1745h-2zM1195 0h2v1745h-2zM1211 0h2v1745h-2zM1243 0h2v1745h-2zM1260 0h2v1745h-2zM1276 0h2v1745h-2zM1292 0h2v1745h-2zM1308 0h2v1745h-2zM1324 0h2v1745h-2zM1341 0h2v1745h-2zM1373 0h2v1745h-2zM1389 0h2v1745h-2zM1405 0h2v1745h-2zM1422 0h2v1745h-2zM1438 0h2v1745h-2zM1454 0h2v1745h-2zM1470 0h2v1745h-2zM1503 0h2v1745h-2zM1519 0h2v1745h-2zM1535 0h2v1745h-2zM1551 0h2v1745h-2zM1567 0h2v1745h-2zM1584 0h2v1745h-2zM1600 0h2v1745h-2zM1632 0h2v1745h-2zM1649 0h2v1745h-2zM1665 0h2v1745h-2zM1681 0h2v1745h-2zM1697 0h2v1745h-2zM1713 0h2v1745h-2zM1730 0h2v1745h-2zM1762 0h2v1745h-2zM1778 0h2v1745h-2zM1794 0h2v1745h-2zM1811 0h2v1745h-2zM1827 0h2v1745h-2zM1843 0h2v1745h-2zM1859 0h2v1745h-2zM1892 0h2v1745h-2zM1908 0h2v1745h-2zM1924 0h2v1745h-2zM1940 0h2v1745h-2zM1956 0h2v1745h-2zM1973 0h2v1745h-2zM1989 0h2v1745h-2zM2021 0h2v1745h-2zM2037 0h2v1745h-2zM2054 0h2v1745h-2zM2070 0h2v1745h-2zM2086 0h2v1745h-2zM2102 0h2v1745h-2zM2118 0h2v1745h-2zM2151 0h2v1745h-2zM2167 0h2v1745h-2zM2183 0h2v1745h-2zM2199 0h2v1745h-2zM2216 0h2v1745h-2zM2232 0h2v1745h-2zM2248 0h2v1745h-2zM2280 0h2v1745h-2zM2297 0h2v1745h-2zM2313 0h2v1745h-2zM2329 0h2v1745h-2zM2345 0h2v1745h-2zM2361 0h2v1745h-2zM2378 0h2v1745h-2zM2410 0h2v1745h-2zM2426 0h2v1745h-2zM2443 0h2v1745h-2zM2459 0h2v1745h-2zM2475 0h2v1745h-2zM2491 0h2v1745h-2zM2507 0h2v1745h-2zM2540 0h2v1745h-2zM2556 0h2v1745h-2zM2572 0h2v1745h-2zM2588 0h2v1745h-2zM2605 0h2v1745h-2zM2621 0h2v1745h-2zM2637 0h2v1745h-2zM2669 0h2v1745h-2zM2686 0h2v1745h-2zM2702 0h2v1745h-2zM2718 0h2v1745h-2zM2734 0h2v1745h-2zM2750 0h2v1745h-2zM2767 0h2v1745h-2zM2799 0h2v1745h-2zM2815 0h2v1745h-2zM2831 0h2v1745h-2zM2848 0h2v1745h-2zM2864 0h2v1745h-2zM2880 0h2v1745h-2zM2896 0h2v1745h-2zM2929 0h2v1745h-2zM2945 0h2v1745h-2zM2961 0h2v1745h-2zM2977 0h2v1745h-2zM2993 0h2v1745h-2zM3010 0h2v1745h-2zM0 4h3024v2h-3024zM0 20h3024v2h-3024zM0 36h3024v2h-3024zM0 53h3024v2h-3024zM0 85h3024v2h-3024zM0 101h3024v2h-3024zM0 117h3024v2h-3024zM0 134h3024v2h-3024zM0 150h3024v2h-3024zM0 166h3024v2h-3024zM0 182h3024v2h-3024zM0 215h3024v2h-3024zM0 231h3024v2h-3024zM0 247h3024v2h-3024zM0 263h3024v2h-3024zM0 279h3024v2h-3024zM0 296h3024v2h-3024zM0 312h3024v2h-3024zM0 344h3024v2h-3024zM0 361h3024v2h-3024zM0 377h3024v2h-3024zM0 393h3024v2h-3024zM0 409h3024v2h-3024zM0 425h3024v2h-3024zM0 442h3024v2h-3024zM0 474h3024v2h-3024zM0 490h3024v2h-3024zM0 506h3024v2h-3024zM0 523h3024v2h-3024zM0 539h3024v2h-3024zM0 555h3024v2h-3024zM0 571h3024v2h-3024zM0 604h3024v2h-3024zM0 620h3024v2h-3024zM0 636h3024v2h-3024zM0 652h3024v2h-3024zM0 668h3024v2h-3024zM0 685h3024v2h-3024zM0 701h3024v2h-3024zM0 733h3024v2h-3024zM0 749h3024v2h-3024zM0 766h3024v2h-3024zM0 782h3024v2h-3024zM0 798h3024v2h-3024zM0 814h3024v2h-3024zM0 830h3024v2h-3024zM0 863h3024v2h-3024zM0 879h3024v2h-3024zM0 895h3024v2h-3024zM0 911h3024v2h-3024zM0 928h3024v2h-3024zM0 944h3024v2h-3024zM0 960h3024v2h-3024zM0 992h3024v2h-3024zM0 1009h3024v2h-3024zM0 1025h3024v2h-3024zM0 1041h3024v2h-3024zM0 1057h3024v2h-3024zM0 1073h3024v2h-3024zM0 1090h3024v2h-3024zM0 1122h3024v2h-3024zM0 1138h3024v2h-3024zM0 1155h3024v2h-3024zM0 1171h3024v2h-3024zM0 1187h3024v2h-3024zM0 1203h3024v2h-3024zM0 1219h3024v2h-3024zM0 1252h3024v2h-3024zM0 1268h3024v2h-3024zM0 1284h3024v2h-3024zM0 1300h3024v2h-3024zM0 1317h3024v2h-3024zM0 1333h3024v2h-3024zM0 1349h3024v2h-3024zM0 1381h3024v2h-3024zM0 1398h3024v2h-3024zM0 1414h3024v2h-3024zM0 1430h3024v2h-3024zM0 1446h3024v2h-3024zM0 1462h3024v2h-3024zM0 1479h3024v2h-3024zM0 1511h3024v2h-3024zM0 1527h3024v2h-3024zM0 1543h3024v2h-3024zM0 1560h3024v2h-3024zM0 1576h3024v2h-3024zM0 1592h3024v2h-3024zM0 1608h3024v2h-3024zM0 1641h3024v2h-3024zM0 1657h3024v2h-3024zM0 1673h3024v2h-3024zM0 1689h3024v2h-3024zM0 1705h3024v2h-3024zM0 1722h3024v2h-3024zM0 1738h3024v2h-3024z"/><path fill="#181818" d="M61 0h2v1745h-2zM190 0h2v1745h-2zM320 0h2v1745h-2zM449 0h2v1745h-2zM579 0h2v1745h-2zM709 0h2v1745h-2zM838 0h2v1745h-2zM968 0h2v1745h-2zM1098 0h2v1745h-2zM1227 0h2v1745h-2zM1357 0h2v1745h-2zM1486 0h2v1745h-2zM1616 0h2v1745h-2zM1746 0h2v1745h-2zM1875 0h2v1745h-2zM2135 0h2v1745h-2zM2264 0h2v1745h-2zM2394 0h2v1745h-2zM2524 0h2v1745h-2zM2653 0h2v1745h-2zM2783 0h2v1745h-2zM2912 0h2v1745h-2zM0 69h3024v2h-3024zM0 198h3024v2h-3024zM0 328h3024v2h-3024zM0 458h3024v2h-3024zM0 587h3024v2h-3024zM0 847h3024v2h-3024zM0 976h3024v2h-3024zM0 1106h3024v2h-3024zM0 1236h3024v2h-3024zM0 1365h3024v2h-3024zM0 1495h3024v2h-3024zM0 1624h3024v2h-3024z"/><path fill="#000000" d="M2005 0h2v1745h-2zM0 717h3024v2h-3024z"/></svg><div class="abs" style="left:768px;top:66px;width:3024px;height:1745px;background:radial-gradient(ellipse 60% 60% at 50% 50%, rgba(0,0,0,0) 0%, rgba(0,0,0,0) 45%, rgba(0,0,0,0.22) 100%)"></div><div class="abs" style="left:2013px;top:444px;width:955px;height:502px;box-shadow:0 2px 8px rgba(0,0,0,.6)"></div><svg class="abs " style="left:2013px;top:444px" width="955" height="502" viewBox="0 0 955 502"><rect width="955" height="502" fill="#676767"/><path fill="#727272" d="M-2 0h2v502h-2zM15 0h2v502h-2zM31 0h2v502h-2zM47 0h2v502h-2zM63 0h2v502h-2zM79 0h2v502h-2zM96 0h2v502h-2zM128 0h2v502h-2zM144 0h2v502h-2zM160 0h2v502h-2zM177 0h2v502h-2zM193 0h2v502h-2zM209 0h2v502h-2zM225 0h2v502h-2zM258 0h2v502h-2zM274 0h2v502h-2zM290 0h2v502h-2zM306 0h2v502h-2zM322 0h2v502h-2zM339 0h2v502h-2zM355 0h2v502h-2zM387 0h2v502h-2zM404 0h2v502h-2zM420 0h2v502h-2zM436 0h2v502h-2zM452 0h2v502h-2zM468 0h2v502h-2zM485 0h2v502h-2zM517 0h2v502h-2zM533 0h2v502h-2zM549 0h2v502h-2zM566 0h2v502h-2zM582 0h2v502h-2zM598 0h2v502h-2zM614 0h2v502h-2zM647 0h2v502h-2zM663 0h2v502h-2zM679 0h2v502h-2zM695 0h2v502h-2zM711 0h2v502h-2zM728 0h2v502h-2zM744 0h2v502h-2zM776 0h2v502h-2zM792 0h2v502h-2zM809 0h2v502h-2zM825 0h2v502h-2zM841 0h2v502h-2zM857 0h2v502h-2zM873 0h2v502h-2zM906 0h2v502h-2zM922 0h2v502h-2zM938 0h2v502h-2zM954 0h2v502h-2zM0 -1h955v2h-955zM0 15h955v2h-955zM0 31h955v2h-955zM0 47h955v2h-955zM0 64h955v2h-955zM0 96h955v2h-955zM0 112h955v2h-955zM0 128h955v2h-955zM0 145h955v2h-955zM0 161h955v2h-955zM0 177h955v2h-955zM0 193h955v2h-955zM0 226h955v2h-955zM0 242h955v2h-955zM0 258h955v2h-955zM0 274h955v2h-955zM0 290h955v2h-955zM0 307h955v2h-955zM0 323h955v2h-955zM0 355h955v2h-955zM0 371h955v2h-955zM0 388h955v2h-955zM0 404h955v2h-955zM0 420h955v2h-955zM0 436h955v2h-955zM0 452h955v2h-955zM0 485h955v2h-955zM0 501h955v2h-955z"/><path fill="#5a5a5a" d="M112 0h2v502h-2zM241 0h2v502h-2zM371 0h2v502h-2zM501 0h2v502h-2zM630 0h2v502h-2zM890 0h2v502h-2zM0 80h955v2h-955zM0 209h955v2h-955zM0 469h955v2h-955z"/><path fill="#4a4a4a" d="M760 0h2v502h-2zM0 339h955v2h-955z"/></svg><div class="abs" style="left:2016px;top:447px;width:949px;height:37px;background:#a9a9a9;border-radius:2px 2px 0 0"></div><div class="abs t" style="left:2027px;top:451px;font-size:26px;line-height:32px;font-weight:bold;color:#f2f2f2;text-shadow:2px 2px 0 rgba(20,20,20,.8);transform:scaleX(0.87);transform-origin:left center">Upgrades to Shader</div><svg class="abs" style="left:2952px;top:930px" width="13" height="13"><path d="M1 12L12 1M5 12L12 5M9 12L12 9" stroke="#e0e0e0" stroke-width="1.5"/></svg><svg class="abs" style="left:0;top:0" width="3833" height="1811"><path d="M2440 194.5C2545.7 194.5 2507.3 338.5 2613 338.5M2457 291.5C2514.8 291.5 2555.2 309 2613 309M2707 309C2843.0 309 2735.5 552.4 2871.5 552.4M2256 563.5C2283.0 563.5 2307.5 566 2334.5 566M1822 696.5C2046.3 696.5 2110.2 536 2334.5 536M1822 696.5C2003.8 696.5 2158.7 669.5 2340.5 669.5M2384.5 669.5C2508.0 669.5 2620.5 680.5 2744 680.5M2235.5 761.5C2291.3 761.5 2284.7 699 2340.5 699M2483.5 536C2598.5 536 2629.0 620.5 2744 620.5M2653.5 749.5C2716.7 749.5 2680.8 650.5 2744 650.5M2818 620.5C2848.6 620.5 2840.9 582.3 2871.5 582.3M2935.4 552.4C3082.1 552.4 2954.8 826.5 3101.5 826.5M2136 1034.5C2230.5 1034.5 2178.0 1181.5 2272.5 1181.5M2181 1151.5C2231.5 1151.5 2222.0 1211.5 2272.5 1211.5M2187.5 1248.5C2218.2 1248.5 2241.8 1241.5 2272.5 1241.5M2187.5 1345.5C2240.2 1345.5 2219.8 1272.5 2272.5 1272.5M2195 1442.5C2267.5 1442.5 2200.0 1302.5 2272.5 1302.5M2421 1181.5C2468.2 1181.5 2468.8 1135 2516 1135M2424 1023.5C2501.8 1023.5 2438.2 1165 2516 1165M2580 1135C2620.2 1135 2634.8 1160.5 2675 1160.5M2755 1160.5C2799.0 1160.5 2770.0 1233.5 2814 1233.5M2707.5 1313.5C2759.7 1313.5 2761.8 1263.5 2814 1263.5M2879 1233.5C3038.5 1233.5 2942.0 977.5 3101.5 977.5M2672 1443.5C2711.7 1443.5 2751.3 1443.5 2791 1443.5M2704 1540C2755.3 1540 2739.7 1473 2791 1473M2855 1443.5C2908.0 1443.5 2863.5 1541 2916.5 1541M2849 1668C2903.7 1668 2861.8 1571.5 2916.5 1571.5M2981.5 1541C3149.0 1541 2934.0 1158.5 3101.5 1158.5M1351 1392.5C1415.8 1392.5 1381.7 1491.5 1446.5 1491.5M1346.5 1679.5C1432.5 1679.5 1360.5 1521.5 1446.5 1521.5M1346.5 1649.5C1433.5 1649.5 1505.5 1634.5 1592.5 1634.5M1514 1491.5C1578.0 1491.5 1528.5 1605 1592.5 1605M1643.5 1605C1675.5 1605 1706.0 1603.5 1738 1603.5M1643.5 1605C2005.8 1605 1459.7 696.5 1822 696.5M1959 1603.5C2020.0 1603.5 2034.0 1556.5 2095 1556.5M1959 1603.5C2020.8 1603.5 2033.2 1653 2095 1653M2170 1556.5C2193.7 1556.5 2217.3 1556.5 2241 1556.5M2170 1653C2193.7 1653 2217.3 1653 2241 1653" fill="none" stroke="#e4e4e4" stroke-width="2.2"/></svg><div class="abs nd" style="left:2304px;top:136px;width:156px;height:82px"><div class="hd" style="height:38px;background:radial-gradient(ellipse 45% 80% at 40% 68%, rgba(0,0,0,0.55) 0%, rgba(0,0,0,0.32) 45%, rgba(0,0,0,0) 100%),linear-gradient(90deg, rgba(0,0,0,0) 0%, rgba(0,0,0,0) 50%, rgba(44,44,44,0.55) 78%, rgba(40,40,40,1) 100%),linear-gradient(180deg, #6a9c3c 0%, #5a8a32 100%)"></div></div><div class="abs t" style="left:2318.0px;top:139.2px;font-size:15px;line-height:18.6px;color:#d0d0d0;transform:scaleX(0.87);transform-origin:left center;font-weight:bold;text-shadow:0 0 6px rgba(0,0,0,.9),1px 1px 2px rgba(0,0,0,.8)">Desaturation</div><div class="abs t" style="left:2318.0px;top:158.6px;font-size:12px;line-height:14.9px;color:#b4cc8c;transform:scaleX(0.97);transform-origin:left center;font-style:italic;text-shadow:0 0 5px rgba(0,0,0,.7)">Param (1)</div><svg class="abs" style="left:2440.0px;top:149.1px" width="13" height="8"><path d="M1 1L6.5 7L12 1" fill="none" stroke="#e6e6e6" stroke-width="2"/></svg><div class="abs t" style="left:2337.0px;top:189.1px;font-size:12.8px;line-height:15.9px;color:#ececec;transform:scaleX(0.85);transform-origin:left center;">디폴트 값</div><div class="abs vb" style="left:2388px;top:187px;width:30px;height:20px">1.0</div><svg class="abs" style="left:2432.0px;top:186.5px" width="18" height="16"><circle cx="7.5" cy="8" r="6" fill="#f2f2f2"/><path d="M14 4.5L17 8L14 11.5Z" fill="#f2f2f2"/></svg><div class="abs nd" style="left:2321px;top:234px;width:156px;height:195px"><div class="hd" style="height:38px;background:radial-gradient(ellipse 45% 80% at 40% 68%, rgba(0,0,0,0.55) 0%, rgba(0,0,0,0.32) 45%, rgba(0,0,0,0) 100%),linear-gradient(90deg, rgba(0,0,0,0) 0%, rgba(0,0,0,0) 50%, rgba(44,44,44,0.55) 78%, rgba(40,40,40,1) 100%),linear-gradient(180deg, #a88a3a 0%, #8a7030 100%)"></div></div><div class="abs t" style="left:2335.0px;top:237.2px;font-size:15px;line-height:18.6px;color:#d0d0d0;transform:scaleX(0.87);transform-origin:left center;font-weight:bold;text-shadow:0 0 6px rgba(0,0,0,.9),1px 1px 2px rgba(0,0,0,.8)">ScatteringColour</div><div class="abs t" style="left:2335.0px;top:256.6px;font-size:12px;line-height:14.9px;color:#cfc28e;transform:scaleX(0.97);transform-origin:left center;font-style:italic;text-shadow:0 0 5px rgba(0,0,0,.7)">Param (1,1,1,0)</div><svg class="abs" style="left:2457.0px;top:247.1px" width="13" height="8"><path d="M1 7L6.5 1L12 7" fill="none" stroke="#e6e6e6" stroke-width="2"/></svg><div class="abs t" style="left:2353.0px;top:285.1px;font-size:12.8px;line-height:15.9px;color:#ececec;transform:scaleX(0.85);transform-origin:left center;">디폴트 값</div><div class="abs chk" style="left:2404px;top:285px"></div><svg class="abs" style="left:2449.0px;top:283.5px" width="18" height="16"><circle cx="7.5" cy="8" r="6" fill="#f2f2f2"/><path d="M14 4.5L17 8L14 11.5Z" fill="#f2f2f2"/></svg><div class="abs" style="left:2327px;top:316px;width:97px;height:97px;background:#ffffff"></div><svg class="abs" style="left:2449.0px;top:313.5px" width="18" height="16"><circle cx="7.5" cy="8" r="5" fill="#0e0e0e" stroke="#e01818" stroke-width="2.2"/><path d="M14 4.5L17 8L14 11.5Z" fill="#e01818"/></svg><svg class="abs" style="left:2449.0px;top:344.0px" width="18" height="16"><circle cx="7.5" cy="8" r="5" fill="#0e0e0e" stroke="#12d012" stroke-width="2.2"/><path d="M14 4.5L17 8L14 11.5Z" fill="#12d012"/></svg><svg class="abs" style="left:2449.0px;top:374.5px" width="18" height="16"><circle cx="7.5" cy="8" r="5" fill="#0e0e0e" stroke="#1a1ae8" stroke-width="2.2"/><path d="M14 4.5L17 8L14 11.5Z" fill="#1a1ae8"/></svg><svg class="abs" style="left:2449.0px;top:404.5px" width="18" height="16"><circle cx="7.5" cy="8" r="5" fill="#0e0e0e" stroke="#a4a4a4" stroke-width="2.2"/><path d="M14 4.5L17 8L14 11.5Z" fill="#a4a4a4"/></svg><div class="abs nd" style="left:2597px;top:267px;width:129px;height:108px"><div class="hd" style="height:23px;background:radial-gradient(ellipse 45% 80% at 40% 68%, rgba(0,0,0,0.55) 0%, rgba(0,0,0,0.32) 45%, rgba(0,0,0,0) 100%),linear-gradient(90deg, rgba(0,0,0,0) 0%, rgba(0,0,0,0) 50%, rgba(44,44,44,0.55) 78%, rgba(40,40,40,1) 100%),linear-gradient(180deg, #6e9a6e 0%, #5a845a 100%)"></div></div><div class="abs t" style="left:2611.0px;top:270.7px;font-size:15px;line-height:18.6px;color:#d0d0d0;transform:scaleX(0.87);transform-origin:left center;font-weight:bold;text-shadow:0 0 6px rgba(0,0,0,.9),1px 1px 2px rgba(0,0,0,.8)">Desaturation</div><svg class="abs" style="left:2706.0px;top:274.5px" width="13" height="8"><path d="M1 1L6.5 7L12 1" fill="none" stroke="#e6e6e6" stroke-width="2"/></svg><svg class="abs" style="left:2605.0px;top:301.0px" width="18" height="16"><circle cx="7.5" cy="8" r="6" fill="#f2f2f2"/><path d="M14 4.5L17 8L14 11.5Z" fill="#f2f2f2"/></svg><svg class="abs" style="left:2699.0px;top:301.0px" width="18" height="16"><circle cx="7.5" cy="8" r="6" fill="#f2f2f2"/><path d="M14 4.5L17 8L14 11.5Z" fill="#f2f2f2"/></svg><svg class="abs" style="left:2605.0px;top:330.5px" width="18" height="16"><circle cx="7.5" cy="8" r="6" fill="#f2f2f2"/><path d="M14 4.5L17 8L14 11.5Z" fill="#f2f2f2"/></svg><div class="abs t" style="left:2627.0px;top:330.8px;font-size:12.5px;line-height:15.5px;color:#ececec;transform:scaleX(0.95);transform-origin:left center;">Fraction</div><svg class="abs" style="left:2656.0px;top:360.5px" width="13" height="8"><path d="M1 1L6.5 7L12 1" fill="none" stroke="#e6e6e6" stroke-width="2"/></svg><div class="abs nd" style="left:2103px;top:506px;width:173px;height:80px"><div class="hd" style="height:38px;background:radial-gradient(ellipse 45% 80% at 40% 68%, rgba(0,0,0,0.55) 0%, rgba(0,0,0,0.32) 45%, rgba(0,0,0,0) 100%),linear-gradient(90deg, rgba(0,0,0,0) 0%, rgba(0,0,0,0) 50%, rgba(44,44,44,0.55) 78%, rgba(40,40,40,1) 100%),linear-gradient(180deg, #6a9c3c 0%, #5a8a32 100%)"></div></div><div class="abs t" style="left:2117.0px;top:509.2px;font-size:15px;line-height:18.6px;color:#d0d0d0;transform:scaleX(0.87);transform-origin:left center;font-weight:bold;text-shadow:0 0 6px rgba(0,0,0,.9),1px 1px 2px rgba(0,0,0,.8)">Cloud_Self_Shadow</div><div class="abs t" style="left:2117.0px;top:528.6px;font-size:12px;line-height:14.9px;color:#b4cc8c;transform:scaleX(0.97);transform-origin:left center;font-style:italic;text-shadow:0 0 5px rgba(0,0,0,.7)">Param (0)</div><svg class="abs" style="left:2256.0px;top:519.1px" width="13" height="8"><path d="M1 1L6.5 7L12 1" fill="none" stroke="#e6e6e6" stroke-width="2"/></svg><div class="abs t" style="left:2133.0px;top:557.1px;font-size:12.8px;line-height:15.9px;color:#ececec;transform:scaleX(0.85);transform-origin:left center;">디폴트 값</div><div class="abs vb" style="left:2185px;top:555px;width:30px;height:20px">0.0</div><svg class="abs" style="left:2248.0px;top:555.5px" width="18" height="16"><circle cx="7.5" cy="8" r="6" fill="#f2f2f2"/><path d="M14 4.5L17 8L14 11.5Z" fill="#f2f2f2"/></svg><div class="abs nd" style="left:2317px;top:495px;width:187px;height:87px"><div class="hd" style="height:22px;background:radial-gradient(ellipse 45% 80% at 40% 68%, rgba(0,0,0,0.55) 0%, rgba(0,0,0,0.32) 45%, rgba(0,0,0,0) 100%),linear-gradient(90deg, rgba(0,0,0,0) 0%, rgba(0,0,0,0) 50%, rgba(44,44,44,0.55) 78%, rgba(40,40,40,1) 100%),linear-gradient(180deg, #5c84a2 0%, #44667e 100%)"></div></div><div class="abs t" style="left:2331.0px;top:498.2px;font-size:15px;line-height:18.6px;color:#d0d0d0;transform:scaleX(0.87);transform-origin:left center;font-weight:bold;text-shadow:0 0 6px rgba(0,0,0,.9),1px 1px 2px rgba(0,0,0,.8)">BeersLaw</div><svg class="abs" style="left:2326.5px;top:528.0px" width="18" height="16"><circle cx="7.5" cy="8" r="6" fill="#3a3b3a"/><path d="M14 4.5L17 8L14 11.5Z" fill="#3a3b3a"/></svg><div class="abs t" style="left:2349.0px;top:528.2px;font-size:12.5px;line-height:15.5px;color:#ececec;transform:scaleX(0.95);transform-origin:left center;">Thickness (S)</div><div class="abs t" style="right:1360.0px;top:528.2px;font-size:12.5px;line-height:15.5px;color:#ececec;transform:scaleX(0.95);transform-origin:right center;">Result</div><svg class="abs" style="left:2475.5px;top:528.0px" width="18" height="16"><circle cx="7.5" cy="8" r="6" fill="#f2f2f2"/><path d="M14 4.5L17 8L14 11.5Z" fill="#f2f2f2"/></svg><svg class="abs" style="left:2326.5px;top:558.0px" width="18" height="16"><circle cx="7.5" cy="8" r="6" fill="#3a3b3a"/><path d="M14 4.5L17 8L14 11.5Z" fill="#3a3b3a"/></svg><div class="abs t" style="left:2349.0px;top:558.2px;font-size:12.5px;line-height:15.5px;color:#ececec;transform:scaleX(0.95);transform-origin:left center;">Depth Scale (S)</div><div class="abs nd" style="left:2323px;top:627px;width:80px;height:89px"><div class="hd" style="height:23px;background:radial-gradient(ellipse 45% 80% at 40% 68%, rgba(0,0,0,0.55) 0%, rgba(0,0,0,0.32) 45%, rgba(0,0,0,0) 100%),linear-gradient(90deg, rgba(0,0,0,0) 0%, rgba(0,0,0,0) 50%, rgba(44,44,44,0.55) 78%, rgba(40,40,40,1) 100%),linear-gradient(180deg, #6e9a6e 0%, #5a845a 100%)"></div></div><div class="abs t" style="left:2337.0px;top:630.7px;font-size:15px;line-height:18.6px;color:#d0d0d0;transform:scaleX(0.87);transform-origin:left center;font-weight:bold;text-shadow:0 0 6px rgba(0,0,0,.9),1px 1px 2px rgba(0,0,0,.8)">Dot</div><svg class="abs" style="left:2383.0px;top:634.5px" width="13" height="8"><path d="M1 1L6.5 7L12 1" fill="none" stroke="#e6e6e6" stroke-width="2"/></svg><svg class="abs" style="left:2332.5px;top:661.5px" width="18" height="16"><circle cx="7.5" cy="8" r="6" fill="#f2f2f2"/><path d="M14 4.5L17 8L14 11.5Z" fill="#f2f2f2"/></svg><div class="abs t" style="left:2356.0px;top:661.8px;font-size:12.5px;line-height:15.5px;color:#ececec;transform:scaleX(0.95);transform-origin:left center;">A</div><svg class="abs" style="left:2376.5px;top:661.5px" width="18" height="16"><circle cx="7.5" cy="8" r="6" fill="#f2f2f2"/><path d="M14 4.5L17 8L14 11.5Z" fill="#f2f2f2"/></svg><svg class="abs" style="left:2332.5px;top:691.0px" width="18" height="16"><circle cx="7.5" cy="8" r="6" fill="#f2f2f2"/><path d="M14 4.5L17 8L14 11.5Z" fill="#f2f2f2"/></svg><div class="abs t" style="left:2356.0px;top:691.2px;font-size:12.5px;line-height:15.5px;color:#ececec;transform:scaleX(0.95);transform-origin:left center;">B</div><div class="abs nd" style="left:2062px;top:704px;width:194px;height:194px"><div class="hd" style="height:38px;background:radial-gradient(ellipse 45% 80% at 40% 68%, rgba(0,0,0,0.55) 0%, rgba(0,0,0,0.32) 45%, rgba(0,0,0,0) 100%),linear-gradient(90deg, rgba(0,0,0,0) 0%, rgba(0,0,0,0) 50%, rgba(44,44,44,0.55) 78%, rgba(40,40,40,1) 100%),linear-gradient(180deg, #a88a3a 0%, #8a7030 100%)"></div></div><div class="abs t" style="left:2076.0px;top:707.2px;font-size:15px;line-height:18.6px;color:#d0d0d0;transform:scaleX(0.87);transform-origin:left center;font-weight:bold;text-shadow:0 0 6px rgba(0,0,0,.9),1px 1px 2px rgba(0,0,0,.8)">Self_Shadow_Direction</div><div class="abs t" style="left:2076.0px;top:726.6px;font-size:12px;line-height:14.9px;color:#cfc28e;transform:scaleX(0.97);transform-origin:left center;font-style:italic;text-shadow:0 0 5px rgba(0,0,0,.7)">Param (0,0,1,1)</div><svg class="abs" style="left:2236.0px;top:717.1px" width="13" height="8"><path d="M1 7L6.5 1L12 7" fill="none" stroke="#e6e6e6" stroke-width="2"/></svg><div class="abs t" style="left:2093.0px;top:755.1px;font-size:12.8px;line-height:15.9px;color:#ececec;transform:scaleX(0.85);transform-origin:left center;">디폴트 값</div><div class="abs" style="left:2145px;top:753px;width:18px;height:18px;background:#000;border:1px solid #444"></div><svg class="abs" style="left:2227.5px;top:753.5px" width="18" height="16"><circle cx="7.5" cy="8" r="6" fill="#f2f2f2"/><path d="M14 4.5L17 8L14 11.5Z" fill="#f2f2f2"/></svg><div class="abs" style="left:2068px;top:785px;width:98px;height:98px;background:#0000ff"></div><svg class="abs" style="left:2227.5px;top:783.5px" width="18" height="16"><circle cx="7.5" cy="8" r="5" fill="#0e0e0e" stroke="#e01818" stroke-width="2.2"/><path d="M14 4.5L17 8L14 11.5Z" fill="#e01818"/></svg><svg class="abs" style="left:2227.5px;top:813.5px" width="18" height="16"><circle cx="7.5" cy="8" r="5" fill="#0e0e0e" stroke="#12d012" stroke-width="2.2"/><path d="M14 4.5L17 8L14 11.5Z" fill="#12d012"/></svg><svg class="abs" style="left:2227.5px;top:844.0px" width="18" height="16"><circle cx="7.5" cy="8" r="5" fill="#0e0e0e" stroke="#1a1ae8" stroke-width="2.2"/><path d="M14 4.5L17 8L14 11.5Z" fill="#1a1ae8"/></svg><svg class="abs" style="left:2227.5px;top:874.5px" width="18" height="16"><circle cx="7.5" cy="8" r="5" fill="#0e0e0e" stroke="#a4a4a4" stroke-width="2.2"/><path d="M14 4.5L17 8L14 11.5Z" fill="#a4a4a4"/></svg><div class="abs nd" style="left:2502px;top:692px;width:172px;height:194px"><div class="hd" style="height:38px;background:radial-gradient(ellipse 45% 80% at 40% 68%, rgba(0,0,0,0.55) 0%, rgba(0,0,0,0.32) 45%, rgba(0,0,0,0) 100%),linear-gradient(90deg, rgba(0,0,0,0) 0%, rgba(0,0,0,0) 50%, rgba(44,44,44,0.55) 78%, rgba(40,40,40,1) 100%),linear-gradient(180deg, #a88a3a 0%, #8a7030 100%)"></div></div><div class="abs t" style="left:2516.0px;top:695.2px;font-size:15px;line-height:18.6px;color:#d0d0d0;transform:scaleX(0.87);transform-origin:left center;font-weight:bold;text-shadow:0 0 6px rgba(0,0,0,.9),1px 1px 2px rgba(0,0,0,.8)">SubScatter_Control</div><div class="abs t" style="left:2516.0px;top:714.6px;font-size:12px;line-height:14.9px;color:#cfc28e;transform:scaleX(0.97);transform-origin:left center;font-style:italic;text-shadow:0 0 5px rgba(0,0,0,.7)">Param (1,1,1,0)</div><svg class="abs" style="left:2654.0px;top:705.1px" width="13" height="8"><path d="M1 7L6.5 1L12 7" fill="none" stroke="#e6e6e6" stroke-width="2"/></svg><div class="abs t" style="left:2533.0px;top:743.1px;font-size:12.8px;line-height:15.9px;color:#ececec;transform:scaleX(0.85);transform-origin:left center;">디폴트 값</div><div class="abs chk" style="left:2585px;top:741px"></div><svg class="abs" style="left:2645.5px;top:741.5px" width="18" height="16"><circle cx="7.5" cy="8" r="6" fill="#f2f2f2"/><path d="M14 4.5L17 8L14 11.5Z" fill="#f2f2f2"/></svg><div class="abs" style="left:2508px;top:773px;width:96px;height:97px;background:#ffffff"></div><svg class="abs" style="left:2645.5px;top:771.0px" width="18" height="16"><circle cx="7.5" cy="8" r="5" fill="#0e0e0e" stroke="#e01818" stroke-width="2.2"/><path d="M14 4.5L17 8L14 11.5Z" fill="#e01818"/></svg><svg class="abs" style="left:2645.5px;top:801.5px" width="18" height="16"><circle cx="7.5" cy="8" r="5" fill="#0e0e0e" stroke="#12d012" stroke-width="2.2"/><path d="M14 4.5L17 8L14 11.5Z" fill="#12d012"/></svg><svg class="abs" style="left:2645.5px;top:831.5px" width="18" height="16"><circle cx="7.5" cy="8" r="5" fill="#0e0e0e" stroke="#1a1ae8" stroke-width="2.2"/><path d="M14 4.5L17 8L14 11.5Z" fill="#1a1ae8"/></svg><svg class="abs" style="left:2645.5px;top:862.0px" width="18" height="16"><circle cx="7.5" cy="8" r="5" fill="#0e0e0e" stroke="#a4a4a4" stroke-width="2.2"/><path d="M14 4.5L17 8L14 11.5Z" fill="#a4a4a4"/></svg><div class="abs nd" style="left:2728px;top:579px;width:110px;height:120px"><div class="hd" style="height:23px;background:radial-gradient(ellipse 45% 80% at 40% 68%, rgba(0,0,0,0.55) 0%, rgba(0,0,0,0.32) 45%, rgba(0,0,0,0) 100%),linear-gradient(90deg, rgba(0,0,0,0) 0%, rgba(0,0,0,0) 50%, rgba(44,44,44,0.55) 78%, rgba(40,40,40,1) 100%),linear-gradient(180deg, #6e9a6e 0%, #5a845a 100%)"></div></div><div class="abs t" style="left:2742.0px;top:582.7px;font-size:15px;line-height:18.6px;color:#d0d0d0;transform:scaleX(0.87);transform-origin:left center;font-weight:bold;text-shadow:0 0 6px rgba(0,0,0,.9),1px 1px 2px rgba(0,0,0,.8)">Lerp</div><svg class="abs" style="left:2818.0px;top:586.5px" width="13" height="8"><path d="M1 1L6.5 7L12 1" fill="none" stroke="#e6e6e6" stroke-width="2"/></svg><svg class="abs" style="left:2736.0px;top:612.5px" width="18" height="16"><circle cx="7.5" cy="8" r="6" fill="#3a3b3a"/><path d="M14 4.5L17 8L14 11.5Z" fill="#3a3b3a"/></svg><div class="abs t" style="left:2759.0px;top:612.8px;font-size:12.5px;line-height:15.5px;color:#ececec;transform:scaleX(0.95);transform-origin:left center;">A</div><svg class="abs" style="left:2810.0px;top:612.5px" width="18" height="16"><circle cx="7.5" cy="8" r="6" fill="#f2f2f2"/><path d="M14 4.5L17 8L14 11.5Z" fill="#f2f2f2"/></svg><svg class="abs" style="left:2736.0px;top:642.5px" width="18" height="16"><circle cx="7.5" cy="8" r="6" fill="#3a3b3a"/><path d="M14 4.5L17 8L14 11.5Z" fill="#3a3b3a"/></svg><div class="abs t" style="left:2759.0px;top:642.8px;font-size:12.5px;line-height:15.5px;color:#ececec;transform:scaleX(0.95);transform-origin:left center;">B</div><svg class="abs" style="left:2736.0px;top:672.5px" width="18" height="16"><circle cx="7.5" cy="8" r="6" fill="#3a3b3a"/><path d="M14 4.5L17 8L14 11.5Z" fill="#3a3b3a"/></svg><div class="abs t" style="left:2759.0px;top:672.8px;font-size:12.5px;line-height:15.5px;color:#ececec;transform:scaleX(0.95);transform-origin:left center;">Alpha</div><div class="abs nd" style="left:2855px;top:509px;width:102px;height:91px"><div class="hd" style="height:23px;background:radial-gradient(ellipse 45% 80% at 40% 68%, rgba(0,0,0,0.55) 0%, rgba(0,0,0,0.32) 45%, rgba(0,0,0,0) 100%),linear-gradient(90deg, rgba(0,0,0,0) 0%, rgba(0,0,0,0) 50%, rgba(44,44,44,0.55) 78%, rgba(40,40,40,1) 100%),linear-gradient(180deg, #6e9a6e 0%, #5a845a 100%)"></div></div><div class="abs t" style="left:2869.0px;top:512.7px;font-size:15px;line-height:18.6px;color:#d0d0d0;transform:scaleX(0.87);transform-origin:left center;font-weight:bold;text-shadow:0 0 6px rgba(0,0,0,.9),1px 1px 2px rgba(0,0,0,.8)">Multiply</div><svg class="abs" style="left:2937.0px;top:516.5px" width="13" height="8"><path d="M1 1L6.5 7L12 1" fill="none" stroke="#e6e6e6" stroke-width="2"/></svg><svg class="abs" style="left:2863.5px;top:544.4px" width="18" height="16"><circle cx="7.5" cy="8" r="6" fill="#3a3b3a"/><path d="M14 4.5L17 8L14 11.5Z" fill="#3a3b3a"/></svg><div class="abs t" style="left:2886.0px;top:544.6px;font-size:12.5px;line-height:15.5px;color:#ececec;transform:scaleX(0.95);transform-origin:left center;">A</div><svg class="abs" style="left:2927.4px;top:544.4px" width="18" height="16"><circle cx="7.5" cy="8" r="6" fill="#f2f2f2"/><path d="M14 4.5L17 8L14 11.5Z" fill="#f2f2f2"/></svg><svg class="abs" style="left:2863.5px;top:574.3px" width="18" height="16"><circle cx="7.5" cy="8" r="6" fill="#3a3b3a"/><path d="M14 4.5L17 8L14 11.5Z" fill="#3a3b3a"/></svg><div class="abs t" style="left:2886.0px;top:574.5px;font-size:12.5px;line-height:15.5px;color:#ececec;transform:scaleX(0.95);transform-origin:left center;">B</div><div class="abs nd" style="left:3082px;top:785px;width:174px;height:640px"><div class="hd" style="height:21px;background:radial-gradient(ellipse 45% 80% at 40% 68%, rgba(0,0,0,0.55) 0%, rgba(0,0,0,0.32) 45%, rgba(0,0,0,0) 100%),linear-gradient(90deg, rgba(0,0,0,0) 0%, rgba(0,0,0,0) 50%, rgba(44,44,44,0.55) 78%, rgba(40,40,40,1) 100%),linear-gradient(180deg, #a48e74 0%, #7e6852 100%)"></div></div><div class="abs t" style="left:3096.0px;top:787.7px;font-size:15px;line-height:18.6px;color:#d0d0d0;transform:scaleX(0.87);transform-origin:left center;font-weight:bold;text-shadow:0 0 6px rgba(0,0,0,.9),1px 1px 2px rgba(0,0,0,.8)">M_VDB</div><svg class="abs" style="left:3093.5px;top:818.5px" width="18" height="16"><circle cx="7.5" cy="8" r="6" fill="#f2f2f2"/><path d="M14 4.5L17 8L14 11.5Z" fill="#f2f2f2"/></svg><div class="abs t" style="left:3116.0px;top:818.4px;font-size:13px;line-height:16.1px;color:#ececec;transform:scaleX(0.85);transform-origin:left center;">알베도</div><svg class="abs" style="left:3093.5px;top:848.5px" width="18" height="16"><circle cx="7.5" cy="8" r="5" fill="#0e0e0e" stroke="#3e3e3e" stroke-width="2.2"/><path d="M14 4.5L17 8L14 11.5Z" fill="#3e3e3e"/></svg><div class="abs t" style="left:3116.0px;top:848.4px;font-size:13px;line-height:16.1px;color:#4c4c4c;transform:scaleX(0.85);transform-origin:left center;">메탈릭</div><svg class="abs" style="left:3093.5px;top:878.5px" width="18" height="16"><circle cx="7.5" cy="8" r="5" fill="#0e0e0e" stroke="#3e3e3e" stroke-width="2.2"/><path d="M14 4.5L17 8L14 11.5Z" fill="#3e3e3e"/></svg><div class="abs t" style="left:3116.0px;top:878.4px;font-size:13px;line-height:16.1px;color:#4c4c4c;transform:scaleX(0.85);transform-origin:left center;">스페큘러</div><svg class="abs" style="left:3093.5px;top:908.5px" width="18" height="16"><circle cx="7.5" cy="8" r="5" fill="#0e0e0e" stroke="#3e3e3e" stroke-width="2.2"/><path d="M14 4.5L17 8L14 11.5Z" fill="#3e3e3e"/></svg><div class="abs t" style="left:3116.0px;top:908.4px;font-size:13px;line-height:16.1px;color:#4c4c4c;transform:scaleX(0.85);transform-origin:left center;">러프니스</div><svg class="abs" style="left:3093.5px;top:938.5px" width="18" height="16"><circle cx="7.5" cy="8" r="5" fill="#0e0e0e" stroke="#3e3e3e" stroke-width="2.2"/><path d="M14 4.5L17 8L14 11.5Z" fill="#3e3e3e"/></svg><div class="abs t" style="left:3116.0px;top:938.4px;font-size:13px;line-height:16.1px;color:#4c4c4c;transform:scaleX(0.85);transform-origin:left center;">애니소트로피</div><svg class="abs" style="left:3093.5px;top:969.5px" width="18" height="16"><circle cx="7.5" cy="8" r="6" fill="#f2f2f2"/><path d="M14 4.5L17 8L14 11.5Z" fill="#f2f2f2"/></svg><div class="abs t" style="left:3116.0px;top:969.4px;font-size:13px;line-height:16.1px;color:#ececec;transform:scaleX(0.85);transform-origin:left center;">이미시브 컬러</div><svg class="abs" style="left:3093.5px;top:999.5px" width="18" height="16"><circle cx="7.5" cy="8" r="5" fill="#0e0e0e" stroke="#3e3e3e" stroke-width="2.2"/><path d="M14 4.5L17 8L14 11.5Z" fill="#3e3e3e"/></svg><div class="abs t" style="left:3116.0px;top:999.4px;font-size:13px;line-height:16.1px;color:#4c4c4c;transform:scaleX(0.85);transform-origin:left center;">오파시티</div><svg class="abs" style="left:3093.5px;top:1029.5px" width="18" height="16"><circle cx="7.5" cy="8" r="5" fill="#0e0e0e" stroke="#3e3e3e" stroke-width="2.2"/><path d="M14 4.5L17 8L14 11.5Z" fill="#3e3e3e"/></svg><div class="abs t" style="left:3116.0px;top:1029.4px;font-size:13px;line-height:16.1px;color:#4c4c4c;transform:scaleX(0.85);transform-origin:left center;">오파시티 마스크</div><svg class="abs" style="left:3093.5px;top:1060.0px" width="18" height="16"><circle cx="7.5" cy="8" r="5" fill="#0e0e0e" stroke="#3e3e3e" stroke-width="2.2"/><path d="M14 4.5L17 8L14 11.5Z" fill="#3e3e3e"/></svg><div class="abs t" style="left:3116.0px;top:1059.9px;font-size:13px;line-height:16.1px;color:#4c4c4c;transform:scaleX(0.85);transform-origin:left center;">노멀</div><svg class="abs" style="left:3093.5px;top:1090.0px" width="18" height="16"><circle cx="7.5" cy="8" r="5" fill="#0e0e0e" stroke="#3e3e3e" stroke-width="2.2"/><path d="M14 4.5L17 8L14 11.5Z" fill="#3e3e3e"/></svg><div class="abs t" style="left:3116.0px;top:1089.9px;font-size:13px;line-height:16.1px;color:#4c4c4c;transform:scaleX(0.85);transform-origin:left center;">탄젠트</div><svg class="abs" style="left:3093.5px;top:1120.5px" width="18" height="16"><circle cx="7.5" cy="8" r="5" fill="#0e0e0e" stroke="#3e3e3e" stroke-width="2.2"/><path d="M14 4.5L17 8L14 11.5Z" fill="#3e3e3e"/></svg><div class="abs t" style="left:3116.0px;top:1120.4px;font-size:13px;line-height:16.1px;color:#4c4c4c;transform:scaleX(0.85);transform-origin:left center;">월드 포지션 오프셋</div><svg class="abs" style="left:3093.5px;top:1150.5px" width="18" height="16"><circle cx="7.5" cy="8" r="6" fill="#f2f2f2"/><path d="M14 4.5L17 8L14 11.5Z" fill="#f2f2f2"/></svg><div class="abs t" style="left:3116.0px;top:1150.4px;font-size:13px;line-height:16.1px;color:#ececec;transform:scaleX(0.85);transform-origin:left center;">소멸</div><svg class="abs" style="left:3093.5px;top:1181.0px" width="18" height="16"><circle cx="7.5" cy="8" r="5" fill="#0e0e0e" stroke="#3e3e3e" stroke-width="2.2"/><path d="M14 4.5L17 8L14 11.5Z" fill="#3e3e3e"/></svg><div class="abs t" style="left:3116.0px;top:1180.9px;font-size:13px;line-height:16.1px;color:#4c4c4c;transform:scaleX(0.85);transform-origin:left center;">커스텀 데이터 0</div><svg class="abs" style="left:3093.5px;top:1211.0px" width="18" height="16"><circle cx="7.5" cy="8" r="5" fill="#0e0e0e" stroke="#3e3e3e" stroke-width="2.2"/><path d="M14 4.5L17 8L14 11.5Z" fill="#3e3e3e"/></svg><div class="abs t" style="left:3116.0px;top:1210.9px;font-size:13px;line-height:16.1px;color:#4c4c4c;transform:scaleX(0.85);transform-origin:left center;">커스텀 데이터 1</div><svg class="abs" style="left:3093.5px;top:1244.0px" width="18" height="16"><circle cx="7.5" cy="8" r="5" fill="#0e0e0e" stroke="#d4d4d4" stroke-width="2.2"/><path d="M14 4.5L17 8L14 11.5Z" fill="#d4d4d4"/></svg><div class="abs t" style="left:3116.0px;top:1243.9px;font-size:13px;line-height:16.1px;color:#ececec;transform:scaleX(0.85);transform-origin:left center;">앰비언트 오클루전</div><svg class="abs" style="left:3093.5px;top:1277.5px" width="18" height="16"><circle cx="7.5" cy="8" r="5" fill="#0e0e0e" stroke="#3e3e3e" stroke-width="2.2"/><path d="M14 4.5L17 8L14 11.5Z" fill="#3e3e3e"/></svg><div class="abs t" style="left:3116.0px;top:1277.4px;font-size:13px;line-height:16.1px;color:#4c4c4c;transform:scaleX(0.85);transform-origin:left center;">리프랙션 (Disabled)</div><svg class="abs" style="left:3093.5px;top:1307.5px" width="18" height="16"><circle cx="7.5" cy="8" r="5" fill="#0e0e0e" stroke="#3e3e3e" stroke-width="2.2"/><path d="M14 4.5L17 8L14 11.5Z" fill="#3e3e3e"/></svg><div class="abs t" style="left:3116.0px;top:1307.4px;font-size:13px;line-height:16.1px;color:#4c4c4c;transform:scaleX(0.85);transform-origin:left center;">픽셀 뎁스 오프셋</div><svg class="abs" style="left:3093.5px;top:1338.0px" width="18" height="16"><circle cx="7.5" cy="8" r="5" fill="#0e0e0e" stroke="#3e3e3e" stroke-width="2.2"/><path d="M14 4.5L17 8L14 11.5Z" fill="#3e3e3e"/></svg><div class="abs t" style="left:3116.0px;top:1337.9px;font-size:13px;line-height:16.1px;color:#4c4c4c;transform:scaleX(0.85);transform-origin:left center;">셰이딩 모델</div><svg class="abs" style="left:3093.5px;top:1368.0px" width="18" height="16"><circle cx="7.5" cy="8" r="5" fill="#0e0e0e" stroke="#3e3e3e" stroke-width="2.2"/><path d="M14 4.5L17 8L14 11.5Z" fill="#3e3e3e"/></svg><div class="abs t" style="left:3116.0px;top:1367.9px;font-size:13px;line-height:16.1px;color:#4c4c4c;transform:scaleX(0.85);transform-origin:left center;">표면 두께</div><svg class="abs" style="left:3093.5px;top:1398.0px" width="18" height="16"><circle cx="7.5" cy="8" r="5" fill="#0e0e0e" stroke="#3e3e3e" stroke-width="2.2"/><path d="M14 4.5L17 8L14 11.5Z" fill="#3e3e3e"/></svg><div class="abs t" style="left:3116.0px;top:1397.9px;font-size:13px;line-height:16.1px;color:#4c4c4c;transform:scaleX(0.85);transform-origin:left center;">정면 머티리얼</div><div class="abs vb" style="left:3213px;top:1242px;width:31px;height:20px">1.0</div><div class="abs nd" style="left:2072px;top:991px;width:83px;height:59px"><div class="hd" style="height:23px;background:radial-gradient(ellipse 45% 80% at 40% 68%, rgba(0,0,0,0.55) 0%, rgba(0,0,0,0.32) 45%, rgba(0,0,0,0) 100%),linear-gradient(90deg, rgba(0,0,0,0) 0%, rgba(0,0,0,0) 50%, rgba(44,44,44,0.55) 78%, rgba(40,40,40,1) 100%),linear-gradient(180deg, #a8209e 0%, #8c1a88 100%)"></div></div><div class="abs t" style="left:2086.0px;top:994.7px;font-size:15px;line-height:18.6px;color:#d0d0d0;transform:scaleX(0.87);transform-origin:left center;font-weight:bold;text-shadow:0 0 6px rgba(0,0,0,.9),1px 1px 2px rgba(0,0,0,.8)">Temp</div><svg class="abs" style="left:2135.0px;top:998.5px" width="13" height="8"><path d="M1 1L6.5 7L12 1" fill="none" stroke="#e6e6e6" stroke-width="2"/></svg><svg class="abs" style="left:2128.0px;top:1026.5px" width="18" height="16"><circle cx="7.5" cy="8" r="6" fill="#f2f2f2"/><path d="M14 4.5L17 8L14 11.5Z" fill="#f2f2f2"/></svg><div class="abs nd" style="left:2289px;top:963px;width:154px;height:80px"><div class="hd" style="height:38px;background:radial-gradient(ellipse 45% 80% at 40% 68%, rgba(0,0,0,0.55) 0%, rgba(0,0,0,0.32) 45%, rgba(0,0,0,0) 100%),linear-gradient(90deg, rgba(0,0,0,0) 0%, rgba(0,0,0,0) 50%, rgba(44,44,44,0.55) 78%, rgba(40,40,40,1) 100%),linear-gradient(180deg, #6a9c3c 0%, #5a8a32 100%)"></div></div><div class="abs t" style="left:2303.0px;top:966.2px;font-size:15px;line-height:18.6px;color:#d0d0d0;transform:scaleX(0.87);transform-origin:left center;font-weight:bold;text-shadow:0 0 6px rgba(0,0,0,.9),1px 1px 2px rgba(0,0,0,.8)">Temp Multiplier</div><div class="abs t" style="left:2303.0px;top:985.6px;font-size:12px;line-height:14.9px;color:#b4cc8c;transform:scaleX(0.97);transform-origin:left center;font-style:italic;text-shadow:0 0 5px rgba(0,0,0,.7)">Param (1)</div><svg class="abs" style="left:2423.0px;top:976.1px" width="13" height="8"><path d="M1 1L6.5 7L12 1" fill="none" stroke="#e6e6e6" stroke-width="2"/></svg><div class="abs t" style="left:2320.0px;top:1016.1px;font-size:12.8px;line-height:15.9px;color:#ececec;transform:scaleX(0.85);transform-origin:left center;">디폴트 값</div><div class="abs vb" style="left:2371px;top:1014px;width:30px;height:20px">1.0</div><svg class="abs" style="left:2416.0px;top:1015.5px" width="18" height="16"><circle cx="7.5" cy="8" r="6" fill="#f2f2f2"/><path d="M14 4.5L17 8L14 11.5Z" fill="#f2f2f2"/></svg><div class="abs nd" style="left:2046px;top:1094px;width:154px;height:78px"><div class="hd" style="height:38px;background:radial-gradient(ellipse 45% 80% at 40% 68%, rgba(0,0,0,0.55) 0%, rgba(0,0,0,0.32) 45%, rgba(0,0,0,0) 100%),linear-gradient(90deg, rgba(0,0,0,0) 0%, rgba(0,0,0,0) 50%, rgba(44,44,44,0.55) 78%, rgba(40,40,40,1) 100%),linear-gradient(180deg, #6a9c3c 0%, #5a8a32 100%)"></div></div><div class="abs t" style="left:2060.0px;top:1097.2px;font-size:15px;line-height:18.6px;color:#d0d0d0;transform:scaleX(0.87);transform-origin:left center;font-weight:bold;text-shadow:0 0 6px rgba(0,0,0,.9),1px 1px 2px rgba(0,0,0,.8)">Remap Input low</div><div class="abs t" style="left:2060.0px;top:1116.6px;font-size:12px;line-height:14.9px;color:#b4cc8c;transform:scaleX(0.97);transform-origin:left center;font-style:italic;text-shadow:0 0 5px rgba(0,0,0,.7)">Param (0)</div><svg class="abs" style="left:2180.0px;top:1107.1px" width="13" height="8"><path d="M1 1L6.5 7L12 1" fill="none" stroke="#e6e6e6" stroke-width="2"/></svg><div class="abs t" style="left:2076.0px;top:1144.1px;font-size:12.8px;line-height:15.9px;color:#ececec;transform:scaleX(0.85);transform-origin:left center;">디폴트 값</div><div class="abs vb" style="left:2128px;top:1142px;width:30px;height:20px">0.0</div><svg class="abs" style="left:2173.0px;top:1143.5px" width="18" height="16"><circle cx="7.5" cy="8" r="6" fill="#f2f2f2"/><path d="M14 4.5L17 8L14 11.5Z" fill="#f2f2f2"/></svg><div class="abs nd" style="left:2046px;top:1191px;width:161px;height:78px"><div class="hd" style="height:38px;background:radial-gradient(ellipse 45% 80% at 40% 68%, rgba(0,0,0,0.55) 0%, rgba(0,0,0,0.32) 45%, rgba(0,0,0,0) 100%),linear-gradient(90deg, rgba(0,0,0,0) 0%, rgba(0,0,0,0) 50%, rgba(44,44,44,0.55) 78%, rgba(40,40,40,1) 100%),linear-gradient(180deg, #6a9c3c 0%, #5a8a32 100%)"></div></div><div class="abs t" style="left:2060.0px;top:1194.2px;font-size:15px;line-height:18.6px;color:#d0d0d0;transform:scaleX(0.87);transform-origin:left center;font-weight:bold;text-shadow:0 0 6px rgba(0,0,0,.9),1px 1px 2px rgba(0,0,0,.8)">Remap Input High</div><div class="abs t" style="left:2060.0px;top:1213.6px;font-size:12px;line-height:14.9px;color:#b4cc8c;transform:scaleX(0.97);transform-origin:left center;font-style:italic;text-shadow:0 0 5px rgba(0,0,0,.7)">Param (1)</div><svg class="abs" style="left:2187.0px;top:1204.1px" width="13" height="8"><path d="M1 1L6.5 7L12 1" fill="none" stroke="#e6e6e6" stroke-width="2"/></svg><div class="abs t" style="left:2076.0px;top:1241.1px;font-size:12.8px;line-height:15.9px;color:#ececec;transform:scaleX(0.85);transform-origin:left center;">디폴트 값</div><div class="abs vb" style="left:2128px;top:1239px;width:30px;height:20px">1.0</div><svg class="abs" style="left:2179.5px;top:1240.5px" width="18" height="16"><circle cx="7.5" cy="8" r="6" fill="#f2f2f2"/><path d="M14 4.5L17 8L14 11.5Z" fill="#f2f2f2"/></svg><div class="abs nd" style="left:2046px;top:1288px;width:161px;height:79px"><div class="hd" style="height:38px;background:radial-gradient(ellipse 45% 80% at 40% 68%, rgba(0,0,0,0.55) 0%, rgba(0,0,0,0.32) 45%, rgba(0,0,0,0) 100%),linear-gradient(90deg, rgba(0,0,0,0) 0%, rgba(0,0,0,0) 50%, rgba(44,44,44,0.55) 78%, rgba(40,40,40,1) 100%),linear-gradient(180deg, #6a9c3c 0%, #5a8a32 100%)"></div></div><div class="abs t" style="left:2060.0px;top:1291.2px;font-size:15px;line-height:18.6px;color:#d0d0d0;transform:scaleX(0.87);transform-origin:left center;font-weight:bold;text-shadow:0 0 6px rgba(0,0,0,.9),1px 1px 2px rgba(0,0,0,.8)">Remap Target low</div><div class="abs t" style="left:2060.0px;top:1310.6px;font-size:12px;line-height:14.9px;color:#b4cc8c;transform:scaleX(0.97);transform-origin:left center;font-style:italic;text-shadow:0 0 5px rgba(0,0,0,.7)">Param (0)</div><svg class="abs" style="left:2187.0px;top:1301.1px" width="13" height="8"><path d="M1 1L6.5 7L12 1" fill="none" stroke="#e6e6e6" stroke-width="2"/></svg><div class="abs t" style="left:2076.0px;top:1338.1px;font-size:12.8px;line-height:15.9px;color:#ececec;transform:scaleX(0.85);transform-origin:left center;">디폴트 값</div><div class="abs vb" style="left:2128px;top:1336px;width:30px;height:20px">0.0</div><svg class="abs" style="left:2179.5px;top:1337.5px" width="18" height="16"><circle cx="7.5" cy="8" r="6" fill="#f2f2f2"/><path d="M14 4.5L17 8L14 11.5Z" fill="#f2f2f2"/></svg><div class="abs nd" style="left:2046px;top:1386px;width:169px;height:78px"><div class="hd" style="height:38px;background:radial-gradient(ellipse 45% 80% at 40% 68%, rgba(0,0,0,0.55) 0%, rgba(0,0,0,0.32) 45%, rgba(0,0,0,0) 100%),linear-gradient(90deg, rgba(0,0,0,0) 0%, rgba(0,0,0,0) 50%, rgba(44,44,44,0.55) 78%, rgba(40,40,40,1) 100%),linear-gradient(180deg, #6a9c3c 0%, #5a8a32 100%)"></div></div><div class="abs t" style="left:2060.0px;top:1389.2px;font-size:15px;line-height:18.6px;color:#d0d0d0;transform:scaleX(0.87);transform-origin:left center;font-weight:bold;text-shadow:0 0 6px rgba(0,0,0,.9),1px 1px 2px rgba(0,0,0,.8)">Remap Target High</div><div class="abs t" style="left:2060.0px;top:1408.6px;font-size:12px;line-height:14.9px;color:#b4cc8c;transform:scaleX(0.97);transform-origin:left center;font-style:italic;text-shadow:0 0 5px rgba(0,0,0,.7)">Param (1)</div><svg class="abs" style="left:2195.0px;top:1399.1px" width="13" height="8"><path d="M1 1L6.5 7L12 1" fill="none" stroke="#e6e6e6" stroke-width="2"/></svg><div class="abs t" style="left:2076.0px;top:1435.1px;font-size:12.8px;line-height:15.9px;color:#ececec;transform:scaleX(0.85);transform-origin:left center;">디폴트 값</div><div class="abs vb" style="left:2128px;top:1433px;width:30px;height:20px">1.0</div><svg class="abs" style="left:2187.0px;top:1434.5px" width="18" height="16"><circle cx="7.5" cy="8" r="6" fill="#f2f2f2"/><path d="M14 4.5L17 8L14 11.5Z" fill="#f2f2f2"/></svg><div class="abs nd" style="left:2257px;top:1142px;width:183px;height:177px"><div class="hd" style="height:22px;background:radial-gradient(ellipse 45% 80% at 40% 68%, rgba(0,0,0,0.55) 0%, rgba(0,0,0,0.32) 45%, rgba(0,0,0,0) 100%),linear-gradient(90deg, rgba(0,0,0,0) 0%, rgba(0,0,0,0) 50%, rgba(44,44,44,0.55) 78%, rgba(40,40,40,1) 100%),linear-gradient(180deg, #5c84a2 0%, #44667e 100%)"></div></div><div class="abs t" style="left:2271.0px;top:1145.2px;font-size:15px;line-height:18.6px;color:#d0d0d0;transform:scaleX(0.87);transform-origin:left center;font-weight:bold;text-shadow:0 0 6px rgba(0,0,0,.9),1px 1px 2px rgba(0,0,0,.8)">RemapValueRange</div><svg class="abs" style="left:2264.5px;top:1173.5px" width="18" height="16"><circle cx="7.5" cy="8" r="6" fill="#f2f2f2"/><path d="M14 4.5L17 8L14 11.5Z" fill="#f2f2f2"/></svg><div class="abs t" style="left:2287.0px;top:1173.8px;font-size:12.5px;line-height:15.5px;color:#ececec;transform:scaleX(0.95);transform-origin:left center;">Input (S)</div><svg class="abs" style="left:2264.5px;top:1203.5px" width="18" height="16"><circle cx="7.5" cy="8" r="6" fill="#3a3b3a"/><path d="M14 4.5L17 8L14 11.5Z" fill="#3a3b3a"/></svg><div class="abs t" style="left:2287.0px;top:1203.8px;font-size:12.5px;line-height:15.5px;color:#ececec;transform:scaleX(0.95);transform-origin:left center;">Input Low (S)</div><svg class="abs" style="left:2264.5px;top:1233.5px" width="18" height="16"><circle cx="7.5" cy="8" r="6" fill="#3a3b3a"/><path d="M14 4.5L17 8L14 11.5Z" fill="#3a3b3a"/></svg><div class="abs t" style="left:2287.0px;top:1233.8px;font-size:12.5px;line-height:15.5px;color:#ececec;transform:scaleX(0.95);transform-origin:left center;">Input High (S)</div><svg class="abs" style="left:2264.5px;top:1264.5px" width="18" height="16"><circle cx="7.5" cy="8" r="6" fill="#3a3b3a"/><path d="M14 4.5L17 8L14 11.5Z" fill="#3a3b3a"/></svg><div class="abs t" style="left:2287.0px;top:1264.8px;font-size:12.5px;line-height:15.5px;color:#ececec;transform:scaleX(0.95);transform-origin:left center;">Target Low (S)</div><svg class="abs" style="left:2264.5px;top:1294.5px" width="18" height="16"><circle cx="7.5" cy="8" r="6" fill="#3a3b3a"/><path d="M14 4.5L17 8L14 11.5Z" fill="#3a3b3a"/></svg><div class="abs t" style="left:2287.0px;top:1294.8px;font-size:12.5px;line-height:15.5px;color:#ececec;transform:scaleX(0.95);transform-origin:left center;">Target High (S)</div><div class="abs t" style="right:1423.0px;top:1173.8px;font-size:12.5px;line-height:15.5px;color:#ececec;transform:scaleX(0.95);transform-origin:right center;">Result</div><svg class="abs" style="left:2413.0px;top:1173.5px" width="18" height="16"><circle cx="7.5" cy="8" r="6" fill="#f2f2f2"/><path d="M14 4.5L17 8L14 11.5Z" fill="#f2f2f2"/></svg><div class="abs nd" style="left:2500px;top:1093px;width:99px;height:89px"><div class="hd" style="height:23px;background:radial-gradient(ellipse 45% 80% at 40% 68%, rgba(0,0,0,0.55) 0%, rgba(0,0,0,0.32) 45%, rgba(0,0,0,0) 100%),linear-gradient(90deg, rgba(0,0,0,0) 0%, rgba(0,0,0,0) 50%, rgba(44,44,44,0.55) 78%, rgba(40,40,40,1) 100%),linear-gradient(180deg, #6e9a6e 0%, #5a845a 100%)"></div></div><div class="abs t" style="left:2514.0px;top:1096.7px;font-size:15px;line-height:18.6px;color:#d0d0d0;transform:scaleX(0.87);transform-origin:left center;font-weight:bold;text-shadow:0 0 6px rgba(0,0,0,.9),1px 1px 2px rgba(0,0,0,.8)">Multiply</div><svg class="abs" style="left:2579.0px;top:1100.5px" width="13" height="8"><path d="M1 1L6.5 7L12 1" fill="none" stroke="#e6e6e6" stroke-width="2"/></svg><svg class="abs" style="left:2508.0px;top:1127.0px" width="18" height="16"><circle cx="7.5" cy="8" r="6" fill="#3a3b3a"/><path d="M14 4.5L17 8L14 11.5Z" fill="#3a3b3a"/></svg><div class="abs t" style="left:2531.0px;top:1127.2px;font-size:12.5px;line-height:15.5px;color:#ececec;transform:scaleX(0.95);transform-origin:left center;">A</div><svg class="abs" style="left:2572.0px;top:1127.0px" width="18" height="16"><circle cx="7.5" cy="8" r="6" fill="#f2f2f2"/><path d="M14 4.5L17 8L14 11.5Z" fill="#f2f2f2"/></svg><svg class="abs" style="left:2508.0px;top:1157.0px" width="18" height="16"><circle cx="7.5" cy="8" r="6" fill="#3a3b3a"/><path d="M14 4.5L17 8L14 11.5Z" fill="#3a3b3a"/></svg><div class="abs t" style="left:2531.0px;top:1157.2px;font-size:12.5px;line-height:15.5px;color:#ececec;transform:scaleX(0.95);transform-origin:left center;">B</div><div class="abs nd" style="left:2659px;top:1118px;width:114px;height:60px"><div class="hd" style="height:23px;background:radial-gradient(ellipse 45% 80% at 40% 68%, rgba(0,0,0,0.55) 0%, rgba(0,0,0,0.32) 45%, rgba(0,0,0,0) 100%),linear-gradient(90deg, rgba(0,0,0,0) 0%, rgba(0,0,0,0) 50%, rgba(44,44,44,0.55) 78%, rgba(40,40,40,1) 100%),linear-gradient(180deg, #6e9a6e 0%, #5a845a 100%)"></div></div><div class="abs t" style="left:2673.0px;top:1121.7px;font-size:15px;line-height:18.6px;color:#d0d0d0;transform:scaleX(0.87);transform-origin:left center;font-weight:bold;text-shadow:0 0 6px rgba(0,0,0,.9),1px 1px 2px rgba(0,0,0,.8)">BlackBody</div><svg class="abs" style="left:2753.0px;top:1125.5px" width="13" height="8"><path d="M1 1L6.5 7L12 1" fill="none" stroke="#e6e6e6" stroke-width="2"/></svg><svg class="abs" style="left:2667.0px;top:1152.5px" width="18" height="16"><circle cx="7.5" cy="8" r="6" fill="#f2f2f2"/><path d="M14 4.5L17 8L14 11.5Z" fill="#f2f2f2"/></svg><div class="abs t" style="left:2690.0px;top:1152.8px;font-size:12.5px;line-height:15.5px;color:#ececec;transform:scaleX(0.95);transform-origin:left center;">Temp</div><svg class="abs" style="left:2747.0px;top:1152.5px" width="18" height="16"><circle cx="7.5" cy="8" r="6" fill="#f2f2f2"/><path d="M14 4.5L17 8L14 11.5Z" fill="#f2f2f2"/></svg><div class="abs nd" style="left:2798px;top:1192px;width:101px;height:88px"><div class="hd" style="height:23px;background:radial-gradient(ellipse 45% 80% at 40% 68%, rgba(0,0,0,0.55) 0%, rgba(0,0,0,0.32) 45%, rgba(0,0,0,0) 100%),linear-gradient(90deg, rgba(0,0,0,0) 0%, rgba(0,0,0,0) 50%, rgba(44,44,44,0.55) 78%, rgba(40,40,40,1) 100%),linear-gradient(180deg, #6e9a6e 0%, #5a845a 100%)"></div></div><div class="abs t" style="left:2812.0px;top:1195.7px;font-size:15px;line-height:18.6px;color:#d0d0d0;transform:scaleX(0.87);transform-origin:left center;font-weight:bold;text-shadow:0 0 6px rgba(0,0,0,.9),1px 1px 2px rgba(0,0,0,.8)">Multiply</div><svg class="abs" style="left:2879.0px;top:1199.5px" width="13" height="8"><path d="M1 1L6.5 7L12 1" fill="none" stroke="#e6e6e6" stroke-width="2"/></svg><svg class="abs" style="left:2806.0px;top:1225.5px" width="18" height="16"><circle cx="7.5" cy="8" r="6" fill="#3a3b3a"/><path d="M14 4.5L17 8L14 11.5Z" fill="#3a3b3a"/></svg><div class="abs t" style="left:2829.0px;top:1225.8px;font-size:12.5px;line-height:15.5px;color:#ececec;transform:scaleX(0.95);transform-origin:left center;">A</div><svg class="abs" style="left:2871.0px;top:1225.5px" width="18" height="16"><circle cx="7.5" cy="8" r="6" fill="#f2f2f2"/><path d="M14 4.5L17 8L14 11.5Z" fill="#f2f2f2"/></svg><svg class="abs" style="left:2806.0px;top:1255.5px" width="18" height="16"><circle cx="7.5" cy="8" r="6" fill="#3a3b3a"/><path d="M14 4.5L17 8L14 11.5Z" fill="#3a3b3a"/></svg><div class="abs t" style="left:2829.0px;top:1255.8px;font-size:12.5px;line-height:15.5px;color:#ececec;transform:scaleX(0.95);transform-origin:left center;">B</div><div class="abs nd" style="left:2548px;top:1256px;width:180px;height:78px"><div class="hd" style="height:38px;background:radial-gradient(ellipse 45% 80% at 40% 68%, rgba(0,0,0,0.55) 0%, rgba(0,0,0,0.32) 45%, rgba(0,0,0,0) 100%),linear-gradient(90deg, rgba(0,0,0,0) 0%, rgba(0,0,0,0) 50%, rgba(44,44,44,0.55) 78%, rgba(40,40,40,1) 100%),linear-gradient(180deg, #6a9c3c 0%, #5a8a32 100%)"></div></div><div class="abs t" style="left:2562.0px;top:1259.2px;font-size:15px;line-height:18.6px;color:#d0d0d0;transform:scaleX(0.87);transform-origin:left center;font-weight:bold;text-shadow:0 0 6px rgba(0,0,0,.9),1px 1px 2px rgba(0,0,0,.8)">Blackbody Multiplier</div><div class="abs t" style="left:2562.0px;top:1278.6px;font-size:12px;line-height:14.9px;color:#b4cc8c;transform:scaleX(0.97);transform-origin:left center;font-style:italic;text-shadow:0 0 5px rgba(0,0,0,.7)">Param (1)</div><svg class="abs" style="left:2708.0px;top:1269.1px" width="13" height="8"><path d="M1 1L6.5 7L12 1" fill="none" stroke="#e6e6e6" stroke-width="2"/></svg><div class="abs t" style="left:2579.0px;top:1306.1px;font-size:12.8px;line-height:15.9px;color:#ececec;transform:scaleX(0.85);transform-origin:left center;">디폴트 값</div><div class="abs vb" style="left:2631px;top:1304px;width:29px;height:20px">1.0</div><svg class="abs" style="left:2699.5px;top:1305.5px" width="18" height="16"><circle cx="7.5" cy="8" r="6" fill="#f2f2f2"/><path d="M14 4.5L17 8L14 11.5Z" fill="#f2f2f2"/></svg><div class="abs nd" style="left:2597px;top:1401px;width:94px;height:58px"><div class="hd" style="height:23px;background:radial-gradient(ellipse 45% 80% at 40% 68%, rgba(0,0,0,0.55) 0%, rgba(0,0,0,0.32) 45%, rgba(0,0,0,0) 100%),linear-gradient(90deg, rgba(0,0,0,0) 0%, rgba(0,0,0,0) 50%, rgba(44,44,44,0.55) 78%, rgba(40,40,40,1) 100%),linear-gradient(180deg, #6e5ea8 0%, #5a4a92 100%)"></div></div><div class="abs t" style="left:2611.0px;top:1404.7px;font-size:15px;line-height:18.6px;color:#d0d0d0;transform:scaleX(0.87);transform-origin:left center;font-weight:bold;text-shadow:0 0 6px rgba(0,0,0,.9),1px 1px 2px rgba(0,0,0,.8)">Density</div><svg class="abs" style="left:2671.0px;top:1408.5px" width="13" height="8"><path d="M1 1L6.5 7L12 1" fill="none" stroke="#e6e6e6" stroke-width="2"/></svg><svg class="abs" style="left:2664.0px;top:1435.5px" width="18" height="16"><circle cx="7.5" cy="8" r="6" fill="#f2f2f2"/><path d="M14 4.5L17 8L14 11.5Z" fill="#f2f2f2"/></svg><div class="abs nd" style="left:2775px;top:1401px;width:100px;height:89px"><div class="hd" style="height:23px;background:radial-gradient(ellipse 45% 80% at 40% 68%, rgba(0,0,0,0.55) 0%, rgba(0,0,0,0.32) 45%, rgba(0,0,0,0) 100%),linear-gradient(90deg, rgba(0,0,0,0) 0%, rgba(0,0,0,0) 50%, rgba(44,44,44,0.55) 78%, rgba(40,40,40,1) 100%),linear-gradient(180deg, #6e9a6e 0%, #5a845a 100%)"></div></div><div class="abs t" style="left:2789.0px;top:1404.7px;font-size:15px;line-height:18.6px;color:#d0d0d0;transform:scaleX(0.87);transform-origin:left center;font-weight:bold;text-shadow:0 0 6px rgba(0,0,0,.9),1px 1px 2px rgba(0,0,0,.8)">Multiply</div><svg class="abs" style="left:2855.0px;top:1408.5px" width="13" height="8"><path d="M1 1L6.5 7L12 1" fill="none" stroke="#e6e6e6" stroke-width="2"/></svg><svg class="abs" style="left:2783.0px;top:1435.5px" width="18" height="16"><circle cx="7.5" cy="8" r="6" fill="#3a3b3a"/><path d="M14 4.5L17 8L14 11.5Z" fill="#3a3b3a"/></svg><div class="abs t" style="left:2806.0px;top:1435.8px;font-size:12.5px;line-height:15.5px;color:#ececec;transform:scaleX(0.95);transform-origin:left center;">A</div><svg class="abs" style="left:2847.0px;top:1435.5px" width="18" height="16"><circle cx="7.5" cy="8" r="6" fill="#f2f2f2"/><path d="M14 4.5L17 8L14 11.5Z" fill="#f2f2f2"/></svg><svg class="abs" style="left:2783.0px;top:1465.0px" width="18" height="16"><circle cx="7.5" cy="8" r="6" fill="#3a3b3a"/><path d="M14 4.5L17 8L14 11.5Z" fill="#3a3b3a"/></svg><div class="abs t" style="left:2806.0px;top:1465.2px;font-size:12.5px;line-height:15.5px;color:#ececec;transform:scaleX(0.95);transform-origin:left center;">B</div><div class="abs nd" style="left:2564px;top:1482px;width:160px;height:79px"><div class="hd" style="height:38px;background:radial-gradient(ellipse 45% 80% at 40% 68%, rgba(0,0,0,0.55) 0%, rgba(0,0,0,0.32) 45%, rgba(0,0,0,0) 100%),linear-gradient(90deg, rgba(0,0,0,0) 0%, rgba(0,0,0,0) 50%, rgba(44,44,44,0.55) 78%, rgba(40,40,40,1) 100%),linear-gradient(180deg, #6a9c3c 0%, #5a8a32 100%)"></div></div><div class="abs t" style="left:2578.0px;top:1485.2px;font-size:15px;line-height:18.6px;color:#d0d0d0;transform:scaleX(0.87);transform-origin:left center;font-weight:bold;text-shadow:0 0 6px rgba(0,0,0,.9),1px 1px 2px rgba(0,0,0,.8)">Density Multiplier</div><div class="abs t" style="left:2578.0px;top:1504.6px;font-size:12px;line-height:14.9px;color:#b4cc8c;transform:scaleX(0.97);transform-origin:left center;font-style:italic;text-shadow:0 0 5px rgba(0,0,0,.7)">Param (0)</div><svg class="abs" style="left:2704.0px;top:1495.1px" width="13" height="8"><path d="M1 1L6.5 7L12 1" fill="none" stroke="#e6e6e6" stroke-width="2"/></svg><div class="abs t" style="left:2595.0px;top:1533.1px;font-size:12.8px;line-height:15.9px;color:#ececec;transform:scaleX(0.85);transform-origin:left center;">디폴트 값</div><div class="abs vb" style="left:2647px;top:1531px;width:30px;height:20px">0.0</div><svg class="abs" style="left:2696.0px;top:1532.0px" width="18" height="16"><circle cx="7.5" cy="8" r="6" fill="#f2f2f2"/><path d="M14 4.5L17 8L14 11.5Z" fill="#f2f2f2"/></svg><div class="abs nd" style="left:2901px;top:1499px;width:100px;height:89px"><div class="hd" style="height:23px;background:radial-gradient(ellipse 45% 80% at 40% 68%, rgba(0,0,0,0.55) 0%, rgba(0,0,0,0.32) 45%, rgba(0,0,0,0) 100%),linear-gradient(90deg, rgba(0,0,0,0) 0%, rgba(0,0,0,0) 50%, rgba(44,44,44,0.55) 78%, rgba(40,40,40,1) 100%),linear-gradient(180deg, #6e9a6e 0%, #5a845a 100%)"></div></div><div class="abs t" style="left:2915.0px;top:1502.7px;font-size:15px;line-height:18.6px;color:#d0d0d0;transform:scaleX(0.87);transform-origin:left center;font-weight:bold;text-shadow:0 0 6px rgba(0,0,0,.9),1px 1px 2px rgba(0,0,0,.8)">Multiply</div><svg class="abs" style="left:2981.0px;top:1506.5px" width="13" height="8"><path d="M1 1L6.5 7L12 1" fill="none" stroke="#e6e6e6" stroke-width="2"/></svg><svg class="abs" style="left:2908.5px;top:1533.0px" width="18" height="16"><circle cx="7.5" cy="8" r="6" fill="#3a3b3a"/><path d="M14 4.5L17 8L14 11.5Z" fill="#3a3b3a"/></svg><div class="abs t" style="left:2931.0px;top:1533.2px;font-size:12.5px;line-height:15.5px;color:#ececec;transform:scaleX(0.95);transform-origin:left center;">A</div><svg class="abs" style="left:2973.5px;top:1533.0px" width="18" height="16"><circle cx="7.5" cy="8" r="6" fill="#f2f2f2"/><path d="M14 4.5L17 8L14 11.5Z" fill="#f2f2f2"/></svg><svg class="abs" style="left:2908.5px;top:1563.5px" width="18" height="16"><circle cx="7.5" cy="8" r="6" fill="#3a3b3a"/><path d="M14 4.5L17 8L14 11.5Z" fill="#3a3b3a"/></svg><div class="abs t" style="left:2931.0px;top:1563.8px;font-size:12.5px;line-height:15.5px;color:#ececec;transform:scaleX(0.95);transform-origin:left center;">B</div><div class="abs nd" style="left:2709px;top:1610px;width:160px;height:195px"><div class="hd" style="height:38px;background:radial-gradient(ellipse 45% 80% at 40% 68%, rgba(0,0,0,0.55) 0%, rgba(0,0,0,0.32) 45%, rgba(0,0,0,0) 100%),linear-gradient(90deg, rgba(0,0,0,0) 0%, rgba(0,0,0,0) 50%, rgba(44,44,44,0.55) 78%, rgba(40,40,40,1) 100%),linear-gradient(180deg, #a88a3a 0%, #8a7030 100%)"></div></div><div class="abs t" style="left:2723.0px;top:1613.2px;font-size:15px;line-height:18.6px;color:#d0d0d0;transform:scaleX(0.87);transform-origin:left center;font-weight:bold;text-shadow:0 0 6px rgba(0,0,0,.9),1px 1px 2px rgba(0,0,0,.8)">MaybeAbsorption</div><div class="abs t" style="left:2723.0px;top:1632.6px;font-size:12px;line-height:14.9px;color:#cfc28e;transform:scaleX(0.97);transform-origin:left center;font-style:italic;text-shadow:0 0 5px rgba(0,0,0,.7)">Param (1,1,1,0)</div><svg class="abs" style="left:2849.0px;top:1623.1px" width="13" height="8"><path d="M1 7L6.5 1L12 7" fill="none" stroke="#e6e6e6" stroke-width="2"/></svg><div class="abs t" style="left:2740.0px;top:1661.1px;font-size:12.8px;line-height:15.9px;color:#ececec;transform:scaleX(0.85);transform-origin:left center;">디폴트 값</div><div class="abs chk" style="left:2792px;top:1659px"></div><svg class="abs" style="left:2841.0px;top:1660.0px" width="18" height="16"><circle cx="7.5" cy="8" r="6" fill="#f2f2f2"/><path d="M14 4.5L17 8L14 11.5Z" fill="#f2f2f2"/></svg><div class="abs" style="left:2715px;top:1692px;width:97px;height:96px;background:linear-gradient(180deg,#ffffff 0%,#f4f4f4 50%,#d8d8d8 100%)"></div><svg class="abs" style="left:2841.0px;top:1689.0px" width="18" height="16"><circle cx="7.5" cy="8" r="5" fill="#0e0e0e" stroke="#e01818" stroke-width="2.2"/><path d="M14 4.5L17 8L14 11.5Z" fill="#e01818"/></svg><svg class="abs" style="left:2841.0px;top:1720.0px" width="18" height="16"><circle cx="7.5" cy="8" r="5" fill="#0e0e0e" stroke="#12d012" stroke-width="2.2"/><path d="M14 4.5L17 8L14 11.5Z" fill="#12d012"/></svg><svg class="abs" style="left:2841.0px;top:1750.0px" width="18" height="16"><circle cx="7.5" cy="8" r="5" fill="#0e0e0e" stroke="#1a1ae8" stroke-width="2.2"/><path d="M14 4.5L17 8L14 11.5Z" fill="#1a1ae8"/></svg><svg class="abs" style="left:2841.0px;top:1780.0px" width="18" height="16"><circle cx="7.5" cy="8" r="5" fill="#0e0e0e" stroke="#a4a4a4" stroke-width="2.2"/><path d="M14 4.5L17 8L14 11.5Z" fill="#a4a4a4"/></svg><div class="abs nd" style="left:1102px;top:1351px;width:268px;height:148px"><div class="hd" style="height:22px;background:radial-gradient(ellipse 45% 80% at 40% 68%, rgba(0,0,0,0.55) 0%, rgba(0,0,0,0.32) 45%, rgba(0,0,0,0) 100%),linear-gradient(90deg, rgba(0,0,0,0) 0%, rgba(0,0,0,0) 50%, rgba(44,44,44,0.55) 78%, rgba(40,40,40,1) 100%),linear-gradient(180deg, #5c84a2 0%, #44667e 100%)"></div></div><div class="abs t" style="left:1116.0px;top:1354.2px;font-size:15px;line-height:18.6px;color:#d0d0d0;transform:scaleX(0.87);transform-origin:left center;font-weight:bold;text-shadow:0 0 6px rgba(0,0,0,.9),1px 1px 2px rgba(0,0,0,.8)">LocalPosition</div><div class="abs t" style="right:2494.0px;top:1384.8px;font-size:12.5px;line-height:15.5px;color:#ececec;transform:scaleX(0.95);transform-origin:right center;">Local Position</div><svg class="abs" style="left:1343.0px;top:1384.5px" width="18" height="16"><circle cx="7.5" cy="8" r="6" fill="#f2f2f2"/><path d="M14 4.5L17 8L14 11.5Z" fill="#f2f2f2"/></svg><div class="abs t" style="right:2494.0px;top:1414.8px;font-size:12.5px;line-height:15.5px;color:#ececec;transform:scaleX(0.95);transform-origin:right center;">Instance Local Position</div><svg class="abs" style="left:1343.0px;top:1414.5px" width="18" height="16"><circle cx="7.5" cy="8" r="5" fill="#0e0e0e" stroke="#d4d4d4" stroke-width="2.2"/><path d="M14 4.5L17 8L14 11.5Z" fill="#d4d4d4"/></svg><div class="abs t" style="right:2494.0px;top:1444.8px;font-size:12.5px;line-height:15.5px;color:#ececec;transform:scaleX(0.95);transform-origin:right center;">Local Position (Excluding Offsets)</div><svg class="abs" style="left:1343.0px;top:1444.5px" width="18" height="16"><circle cx="7.5" cy="8" r="5" fill="#0e0e0e" stroke="#d4d4d4" stroke-width="2.2"/><path d="M14 4.5L17 8L14 11.5Z" fill="#d4d4d4"/></svg><div class="abs t" style="right:2494.0px;top:1474.8px;font-size:12.5px;line-height:15.5px;color:#ececec;transform:scaleX(0.95);transform-origin:right center;">Instance Local Position (Excluding Offsets)</div><svg class="abs" style="left:1343.0px;top:1474.5px" width="18" height="16"><circle cx="7.5" cy="8" r="5" fill="#0e0e0e" stroke="#d4d4d4" stroke-width="2.2"/><path d="M14 4.5L17 8L14 11.5Z" fill="#d4d4d4"/></svg><div class="abs nd" style="left:1430px;top:1449px;width:103px;height:89px"><div class="hd" style="height:23px;background:radial-gradient(ellipse 45% 80% at 40% 68%, rgba(0,0,0,0.55) 0%, rgba(0,0,0,0.32) 45%, rgba(0,0,0,0) 100%),linear-gradient(90deg, rgba(0,0,0,0) 0%, rgba(0,0,0,0) 50%, rgba(44,44,44,0.55) 78%, rgba(40,40,40,1) 100%),linear-gradient(180deg, #6e9a6e 0%, #5a845a 100%)"></div></div><div class="abs t" style="left:1444.0px;top:1452.7px;font-size:15px;line-height:18.6px;color:#d0d0d0;transform:scaleX(0.87);transform-origin:left center;font-weight:bold;text-shadow:0 0 6px rgba(0,0,0,.9),1px 1px 2px rgba(0,0,0,.8)">Subtract</div><svg class="abs" style="left:1513.0px;top:1456.5px" width="13" height="8"><path d="M1 1L6.5 7L12 1" fill="none" stroke="#e6e6e6" stroke-width="2"/></svg><svg class="abs" style="left:1438.5px;top:1483.5px" width="18" height="16"><circle cx="7.5" cy="8" r="6" fill="#3a3b3a"/><path d="M14 4.5L17 8L14 11.5Z" fill="#3a3b3a"/></svg><div class="abs t" style="left:1462.0px;top:1483.8px;font-size:12.5px;line-height:15.5px;color:#ececec;transform:scaleX(0.95);transform-origin:left center;">A</div><svg class="abs" style="left:1506.0px;top:1483.5px" width="18" height="16"><circle cx="7.5" cy="8" r="6" fill="#f2f2f2"/><path d="M14 4.5L17 8L14 11.5Z" fill="#f2f2f2"/></svg><svg class="abs" style="left:1438.5px;top:1513.5px" width="18" height="16"><circle cx="7.5" cy="8" r="6" fill="#3a3b3a"/><path d="M14 4.5L17 8L14 11.5Z" fill="#3a3b3a"/></svg><div class="abs t" style="left:1462.0px;top:1513.8px;font-size:12.5px;line-height:15.5px;color:#ececec;transform:scaleX(0.95);transform-origin:left center;">B</div><div class="abs nd" style="left:1187px;top:1563px;width:178px;height:164px"><div class="hd" style="height:38px;background:radial-gradient(ellipse 45% 80% at 40% 68%, rgba(0,0,0,0.55) 0%, rgba(0,0,0,0.32) 45%, rgba(0,0,0,0) 100%),linear-gradient(90deg, rgba(0,0,0,0) 0%, rgba(0,0,0,0) 50%, rgba(44,44,44,0.55) 78%, rgba(40,40,40,1) 100%),linear-gradient(180deg, #b02222 0%, #9a1a1a 100%)"></div></div><div class="abs t" style="left:1201.0px;top:1566.2px;font-size:15px;line-height:18.6px;color:#d0d0d0;transform:scaleX(0.87);transform-origin:left center;font-weight:bold;text-shadow:0 0 6px rgba(0,0,0,.9),1px 1px 2px rgba(0,0,0,.8)">Object Local Bounds</div><div class="abs t" style="left:1201.0px;top:1585.6px;font-size:12px;line-height:14.9px;color:#c89a6a;transform:scaleX(0.97);transform-origin:left center;font-style:italic;text-shadow:0 0 5px rgba(0,0,0,.7)">Input Data</div><svg class="abs" style="left:1345.0px;top:1576.1px" width="13" height="8"><path d="M1 1L6.5 7L12 1" fill="none" stroke="#e6e6e6" stroke-width="2"/></svg><div class="abs t" style="right:2498.0px;top:1611.8px;font-size:12.5px;line-height:15.5px;color:#ececec;transform:scaleX(0.95);transform-origin:right center;">Half Extents</div><svg class="abs" style="left:1338.5px;top:1611.5px" width="18" height="16"><circle cx="7.5" cy="8" r="5" fill="#0e0e0e" stroke="#d4d4d4" stroke-width="2.2"/><path d="M14 4.5L17 8L14 11.5Z" fill="#d4d4d4"/></svg><div class="abs t" style="right:2498.0px;top:1641.8px;font-size:12.5px;line-height:15.5px;color:#ececec;transform:scaleX(0.95);transform-origin:right center;">Extents</div><svg class="abs" style="left:1338.5px;top:1641.5px" width="18" height="16"><circle cx="7.5" cy="8" r="6" fill="#f2f2f2"/><path d="M14 4.5L17 8L14 11.5Z" fill="#f2f2f2"/></svg><div class="abs t" style="right:2498.0px;top:1671.8px;font-size:12.5px;line-height:15.5px;color:#ececec;transform:scaleX(0.95);transform-origin:right center;">Min</div><svg class="abs" style="left:1338.5px;top:1671.5px" width="18" height="16"><circle cx="7.5" cy="8" r="6" fill="#f2f2f2"/><path d="M14 4.5L17 8L14 11.5Z" fill="#f2f2f2"/></svg><div class="abs t" style="right:2498.0px;top:1702.2px;font-size:12.5px;line-height:15.5px;color:#ececec;transform:scaleX(0.95);transform-origin:right center;">Max</div><svg class="abs" style="left:1338.5px;top:1702.0px" width="18" height="16"><circle cx="7.5" cy="8" r="5" fill="#0e0e0e" stroke="#d4d4d4" stroke-width="2.2"/><path d="M14 4.5L17 8L14 11.5Z" fill="#d4d4d4"/></svg><div class="abs nd" style="left:1576px;top:1563px;width:87px;height:89px"><div class="hd" style="height:23px;background:radial-gradient(ellipse 45% 80% at 40% 68%, rgba(0,0,0,0.55) 0%, rgba(0,0,0,0.32) 45%, rgba(0,0,0,0) 100%),linear-gradient(90deg, rgba(0,0,0,0) 0%, rgba(0,0,0,0) 50%, rgba(44,44,44,0.55) 78%, rgba(40,40,40,1) 100%),linear-gradient(180deg, #6e9a6e 0%, #5a845a 100%)"></div></div><div class="abs t" style="left:1590.0px;top:1566.7px;font-size:15px;line-height:18.6px;color:#d0d0d0;transform:scaleX(0.87);transform-origin:left center;font-weight:bold;text-shadow:0 0 6px rgba(0,0,0,.9),1px 1px 2px rgba(0,0,0,.8)">Divide</div><svg class="abs" style="left:1643.0px;top:1570.5px" width="13" height="8"><path d="M1 1L6.5 7L12 1" fill="none" stroke="#e6e6e6" stroke-width="2"/></svg><svg class="abs" style="left:1584.5px;top:1597.0px" width="18" height="16"><circle cx="7.5" cy="8" r="6" fill="#3a3b3a"/><path d="M14 4.5L17 8L14 11.5Z" fill="#3a3b3a"/></svg><div class="abs t" style="left:1608.0px;top:1597.2px;font-size:12.5px;line-height:15.5px;color:#ececec;transform:scaleX(0.95);transform-origin:left center;">A</div><svg class="abs" style="left:1635.5px;top:1597.0px" width="18" height="16"><circle cx="7.5" cy="8" r="6" fill="#f2f2f2"/><path d="M14 4.5L17 8L14 11.5Z" fill="#f2f2f2"/></svg><svg class="abs" style="left:1584.5px;top:1626.5px" width="18" height="16"><circle cx="7.5" cy="8" r="6" fill="#3a3b3a"/><path d="M14 4.5L17 8L14 11.5Z" fill="#3a3b3a"/></svg><div class="abs t" style="left:1608.0px;top:1626.8px;font-size:12.5px;line-height:15.5px;color:#ececec;transform:scaleX(0.95);transform-origin:left center;">B</div><div class="abs nd" style="left:1722px;top:1546px;width:257px;height:155px"><div class="hd" style="height:39px;background:radial-gradient(ellipse 45% 80% at 40% 68%, rgba(0,0,0,0.55) 0%, rgba(0,0,0,0.32) 45%, rgba(0,0,0,0) 100%),linear-gradient(90deg, rgba(0,0,0,0) 0%, rgba(0,0,0,0) 50%, rgba(44,44,44,0.55) 78%, rgba(40,40,40,1) 100%),linear-gradient(180deg, #206fa0 0%, #175a86 100%)"></div></div><div class="abs t" style="left:1736.0px;top:1549.2px;font-size:15px;line-height:18.6px;color:#d0d0d0;transform:scaleX(0.87);transform-origin:left center;font-weight:bold;text-shadow:0 0 6px rgba(0,0,0,.9),1px 1px 2px rgba(0,0,0,.8)">Input SVT</div><div class="abs t" style="left:1736.0px;top:1569.6px;font-size:12px;line-height:14.9px;color:#8fc8e8;transform:scaleX(0.97);transform-origin:left center;font-style:italic;text-shadow:0 0 5px rgba(0,0,0,.7)">Sparse Volume Texture Sample Param</div><svg class="abs" style="left:1959.0px;top:1559.5px" width="13" height="8"><path d="M1 1L6.5 7L12 1" fill="none" stroke="#e6e6e6" stroke-width="2"/></svg><svg class="abs" style="left:1730.0px;top:1595.5px" width="18" height="16"><circle cx="7.5" cy="8" r="6" fill="#3a3b3a"/><path d="M14 4.5L17 8L14 11.5Z" fill="#3a3b3a"/></svg><div class="abs t" style="left:1752.0px;top:1595.8px;font-size:12.5px;line-height:15.5px;color:#ececec;transform:scaleX(0.95);transform-origin:left center;">UVs</div><svg class="abs" style="left:1730.0px;top:1625.5px" width="18" height="16"><circle cx="7.5" cy="8" r="5" fill="#0e0e0e" stroke="#3e3e3e" stroke-width="2.2"/><path d="M14 4.5L17 8L14 11.5Z" fill="#3e3e3e"/></svg><div class="abs t" style="left:1752.0px;top:1625.8px;font-size:12.5px;line-height:15.5px;color:#ececec;transform:scaleX(0.95);transform-origin:left center;">Tex</div><svg class="abs" style="left:1730.0px;top:1655.5px" width="18" height="16"><circle cx="7.5" cy="8" r="5" fill="#0e0e0e" stroke="#3e3e3e" stroke-width="2.2"/><path d="M14 4.5L17 8L14 11.5Z" fill="#3e3e3e"/></svg><div class="abs t" style="left:1752.0px;top:1655.8px;font-size:12.5px;line-height:15.5px;color:#ececec;transform:scaleX(0.95);transform-origin:left center;">Level</div><div class="abs t" style="right:1885.0px;top:1595.8px;font-size:12.5px;line-height:15.5px;color:#ececec;transform:scaleX(0.95);transform-origin:right center;">Attributes A</div><svg class="abs" style="left:1951.0px;top:1595.5px" width="18" height="16"><circle cx="7.5" cy="8" r="6" fill="#f2f2f2"/><path d="M14 4.5L17 8L14 11.5Z" fill="#f2f2f2"/></svg><div class="abs t" style="right:1885.0px;top:1625.8px;font-size:12.5px;line-height:15.5px;color:#ececec;transform:scaleX(0.95);transform-origin:right center;">Attributes B</div><svg class="abs" style="left:1951.0px;top:1625.5px" width="18" height="16"><circle cx="7.5" cy="8" r="5" fill="#0e0e0e" stroke="#d4d4d4" stroke-width="2.2"/><path d="M14 4.5L17 8L14 11.5Z" fill="#d4d4d4"/></svg><svg class="abs" style="left:1845.0px;top:1685.0px" width="13" height="8"><path d="M1 1L6.5 7L12 1" fill="none" stroke="#e6e6e6" stroke-width="2"/></svg><div class="abs nd" style="left:2078px;top:1514px;width:111px;height:78px"><div class="hd" style="height:23px;background:radial-gradient(ellipse 45% 80% at 40% 68%, rgba(0,0,0,0.55) 0%, rgba(0,0,0,0.32) 45%, rgba(0,0,0,0) 100%),linear-gradient(90deg, rgba(0,0,0,0) 0%, rgba(0,0,0,0) 50%, rgba(44,44,44,0.55) 78%, rgba(40,40,40,1) 100%),linear-gradient(180deg, #6e9a6e 0%, #5a845a 100%)"></div></div><div class="abs t" style="left:2092.0px;top:1517.7px;font-size:15px;line-height:18.6px;color:#d0d0d0;transform:scaleX(0.87);transform-origin:left center;font-weight:bold;text-shadow:0 0 6px rgba(0,0,0,.9),1px 1px 2px rgba(0,0,0,.8)">Mask ( R )</div><svg class="abs" style="left:2169.0px;top:1521.5px" width="13" height="8"><path d="M1 1L6.5 7L12 1" fill="none" stroke="#e6e6e6" stroke-width="2"/></svg><svg class="abs" style="left:2087.0px;top:1548.5px" width="18" height="16"><circle cx="7.5" cy="8" r="6" fill="#f2f2f2"/><path d="M14 4.5L17 8L14 11.5Z" fill="#f2f2f2"/></svg><svg class="abs" style="left:2162.0px;top:1548.5px" width="18" height="16"><circle cx="7.5" cy="8" r="6" fill="#f2f2f2"/><path d="M14 4.5L17 8L14 11.5Z" fill="#f2f2f2"/></svg><svg class="abs" style="left:2129.0px;top:1577.5px" width="13" height="8"><path d="M1 1L6.5 7L12 1" fill="none" stroke="#e6e6e6" stroke-width="2"/></svg><div class="abs nd" style="left:2078px;top:1612px;width:111px;height:77px"><div class="hd" style="height:23px;background:radial-gradient(ellipse 45% 80% at 40% 68%, rgba(0,0,0,0.55) 0%, rgba(0,0,0,0.32) 45%, rgba(0,0,0,0) 100%),linear-gradient(90deg, rgba(0,0,0,0) 0%, rgba(0,0,0,0) 50%, rgba(44,44,44,0.55) 78%, rgba(40,40,40,1) 100%),linear-gradient(180deg, #6e9a6e 0%, #5a845a 100%)"></div></div><div class="abs t" style="left:2092.0px;top:1615.7px;font-size:15px;line-height:18.6px;color:#d0d0d0;transform:scaleX(0.87);transform-origin:left center;font-weight:bold;text-shadow:0 0 6px rgba(0,0,0,.9),1px 1px 2px rgba(0,0,0,.8)">Mask ( G )</div><svg class="abs" style="left:2169.0px;top:1619.5px" width="13" height="8"><path d="M1 1L6.5 7L12 1" fill="none" stroke="#e6e6e6" stroke-width="2"/></svg><svg class="abs" style="left:2087.0px;top:1645.0px" width="18" height="16"><circle cx="7.5" cy="8" r="6" fill="#f2f2f2"/><path d="M14 4.5L17 8L14 11.5Z" fill="#f2f2f2"/></svg><svg class="abs" style="left:2162.0px;top:1645.0px" width="18" height="16"><circle cx="7.5" cy="8" r="6" fill="#f2f2f2"/><path d="M14 4.5L17 8L14 11.5Z" fill="#f2f2f2"/></svg><svg class="abs" style="left:2129.0px;top:1674.0px" width="13" height="8"><path d="M1 1L6.5 7L12 1" fill="none" stroke="#e6e6e6" stroke-width="2"/></svg><div class="abs nd" style="left:2223px;top:1514px;width:96px;height:59px"><div class="hd" style="height:23px;background:radial-gradient(ellipse 45% 80% at 40% 68%, rgba(0,0,0,0.55) 0%, rgba(0,0,0,0.32) 45%, rgba(0,0,0,0) 100%),linear-gradient(90deg, rgba(0,0,0,0) 0%, rgba(0,0,0,0) 50%, rgba(44,44,44,0.55) 78%, rgba(40,40,40,1) 100%),linear-gradient(180deg, #6e5ea8 0%, #5a4a92 100%)"></div></div><div class="abs t" style="left:2237.0px;top:1517.7px;font-size:15px;line-height:18.6px;color:#d0d0d0;transform:scaleX(0.87);transform-origin:left center;font-weight:bold;text-shadow:0 0 6px rgba(0,0,0,.9),1px 1px 2px rgba(0,0,0,.8)">Density</div><svg class="abs" style="left:2299.0px;top:1521.5px" width="13" height="8"><path d="M1 1L6.5 7L12 1" fill="none" stroke="#e6e6e6" stroke-width="2"/></svg><svg class="abs" style="left:2233.0px;top:1548.5px" width="18" height="16"><circle cx="7.5" cy="8" r="6" fill="#f2f2f2"/><path d="M14 4.5L17 8L14 11.5Z" fill="#f2f2f2"/></svg><svg class="abs" style="left:2292.0px;top:1548.5px" width="18" height="16"><circle cx="7.5" cy="8" r="5" fill="#0e0e0e" stroke="#d4d4d4" stroke-width="2.2"/><path d="M14 4.5L17 8L14 11.5Z" fill="#d4d4d4"/></svg><div class="abs nd" style="left:2223px;top:1612px;width:84px;height:59px"><div class="hd" style="height:23px;background:radial-gradient(ellipse 45% 80% at 40% 68%, rgba(0,0,0,0.55) 0%, rgba(0,0,0,0.32) 45%, rgba(0,0,0,0) 100%),linear-gradient(90deg, rgba(0,0,0,0) 0%, rgba(0,0,0,0) 50%, rgba(44,44,44,0.55) 78%, rgba(40,40,40,1) 100%),linear-gradient(180deg, #a8209e 0%, #8c1a88 100%)"></div></div><div class="abs t" style="left:2237.0px;top:1615.7px;font-size:15px;line-height:18.6px;color:#d0d0d0;transform:scaleX(0.87);transform-origin:left center;font-weight:bold;text-shadow:0 0 6px rgba(0,0,0,.9),1px 1px 2px rgba(0,0,0,.8)">Temp</div><svg class="abs" style="left:2287.0px;top:1619.5px" width="13" height="8"><path d="M1 1L6.5 7L12 1" fill="none" stroke="#e6e6e6" stroke-width="2"/></svg><svg class="abs" style="left:2233.0px;top:1645.0px" width="18" height="16"><circle cx="7.5" cy="8" r="6" fill="#f2f2f2"/><path d="M14 4.5L17 8L14 11.5Z" fill="#f2f2f2"/></svg><svg class="abs" style="left:2279.5px;top:1645.0px" width="18" height="16"><circle cx="7.5" cy="8" r="5" fill="#0e0e0e" stroke="#d4d4d4" stroke-width="2.2"/><path d="M14 4.5L17 8L14 11.5Z" fill="#d4d4d4"/></svg><svg class="abs" style="left:1813px;top:688px" width="20" height="17"><circle cx="8.5" cy="8.5" r="7" fill="#f2f2f2"/><path d="M15.5 5L19 8.5L15.5 12Z" fill="#f2f2f2"/></svg><svg class="abs" style="left:3400px;top:1680px" width="400" height="131"><g transform="scale(0.15528)" fill="#ffffff" opacity="0.15"><path fill-rule="evenodd" d="M185 232H430Q450 232 450 252V578Q450 598 430 598H185Q165 598 165 578V252Q165 232 185 232ZM238 285V545H378V285Z"/><rect x="440" y="380" width="120" height="52" rx="0"/><rect x="555" y="188" width="67" height="572" rx="0"/><rect x="755" y="232" width="270" height="58" rx="4"/><rect x="800" y="388" width="220" height="52" rx="0"/><rect x="755" y="232" width="70" height="378" rx="6"/><path d="M755 545H1065L1075 598Q950 612 840 612H755Z"/><rect x="1127" y="188" width="70" height="572" rx="0"/><rect x="1337" y="232" width="238" height="53" rx="0"/><rect x="1520" y="232" width="55" height="213" rx="6"/><rect x="1337" y="388" width="238" height="57" rx="6"/><rect x="1337" y="388" width="68" height="224" rx="6"/><path d="M1337 548H1655L1665 600Q1540 618 1420 618H1337Z"/><rect x="1707" y="188" width="70" height="572" rx="0"/><path fill-rule="evenodd" d="M2043 198A142 135 0 1 1 2043 468A142 135 0 1 1 2043 198ZM2043 258A78 78 0 1 0 2043 414A78 78 0 1 0 2043 258Z"/><rect x="2170" y="308" width="130" height="52" rx="0"/><rect x="2290" y="188" width="67" height="299" rx="0"/><rect x="1990" y="515" width="367" height="53" rx="6"/><rect x="2290" y="515" width="67" height="150" rx="6"/><rect x="1990" y="610" width="367" height="55" rx="6"/><rect x="1990" y="610" width="70" height="150" rx="6"/><rect x="1990" y="708" width="382" height="52" rx="6"/></g></svg><div class="abs" style="left:768px;top:66px;width:3024px;height:56px;background:rgba(0,0,0,0.52)"></div><svg class="abs" style="left:768px;top:66px" width="12" height="12"><path d="M0 0H12L0 12Z" fill="#1a7ef0"/></svg><div class="abs" style="left:779px;top:69px;width:3px;height:50px;background:#1c1c1c"></div><svg class="abs" style="left:787px;top:82px" width="29" height="23"><path d="M0 11.5L11 0V7H28V16H11V23Z" fill="#8a8a8a"/></svg><svg class="abs" style="left:845px;top:82px" width="29" height="23"><path d="M29 11.5L18 0V7H0V16H18V23Z" fill="#8a8a8a"/></svg><div class="abs" style="left:889px;top:69px;width:4px;height:50px;background:#1c1c1c"></div><svg class="abs" style="left:910px;top:79px" width="34" height="30"><rect x="1" y="0" width="14" height="13" rx="3" fill="#fff"/><rect x="22" y="7" width="11" height="8" rx="2" fill="#fff"/><rect x="1" y="19" width="10" height="10" rx="2" fill="#fff"/><rect x="21" y="18" width="11" height="9" rx="2" fill="#fff"/><path d="M6 13V20M15 11H22M11 12L23 21" stroke="#ddd" stroke-width="1.6"/></svg><div class="abs t" style="left:966px;top:77px;font-size:27px;line-height:34px;color:#a2a2a2">M_VDB</div><svg class="abs" style="left:1067px;top:82px" width="16" height="26"><path d="M2 2L13 13L2 24" fill="none" stroke="#bdbdbd" stroke-width="3"/></svg><div class="abs t" style="left:1098px;top:76px;font-size:27px;line-height:34px;color:#a2a2a2">머티리얼 그래프</div><div class="abs t" style="left:3719px;top:74px;font-size:30px;line-height:36px;color:#3c3c3c;font-weight:bold">-3 줌</div><div class="abs" style="left:3792px;top:66px;width:41px;height:1745px;background:#141414"></div><svg class="abs" style="left:3802px;top:79px" width="22" height="21"><rect x="0" y="0" width="21" height="5" fill="#c8c8c8"/><rect x="0" y="8" width="4" height="4" fill="#c8c8c8"/><rect x="7" y="9" width="14" height="2.5" fill="#8a8a8a"/><rect x="0" y="15" width="4" height="4" fill="#c8c8c8"/><rect x="7" y="16" width="14" height="2.5" fill="#8a8a8a"/></svg><div class="abs t" style="left:3783px;top:133px;width:60px;height:24px;font-size:19px;line-height:24px;text-align:center;color:#c8c8c8;transform:rotate(-90deg)">팔레트</div>
</body></html>
